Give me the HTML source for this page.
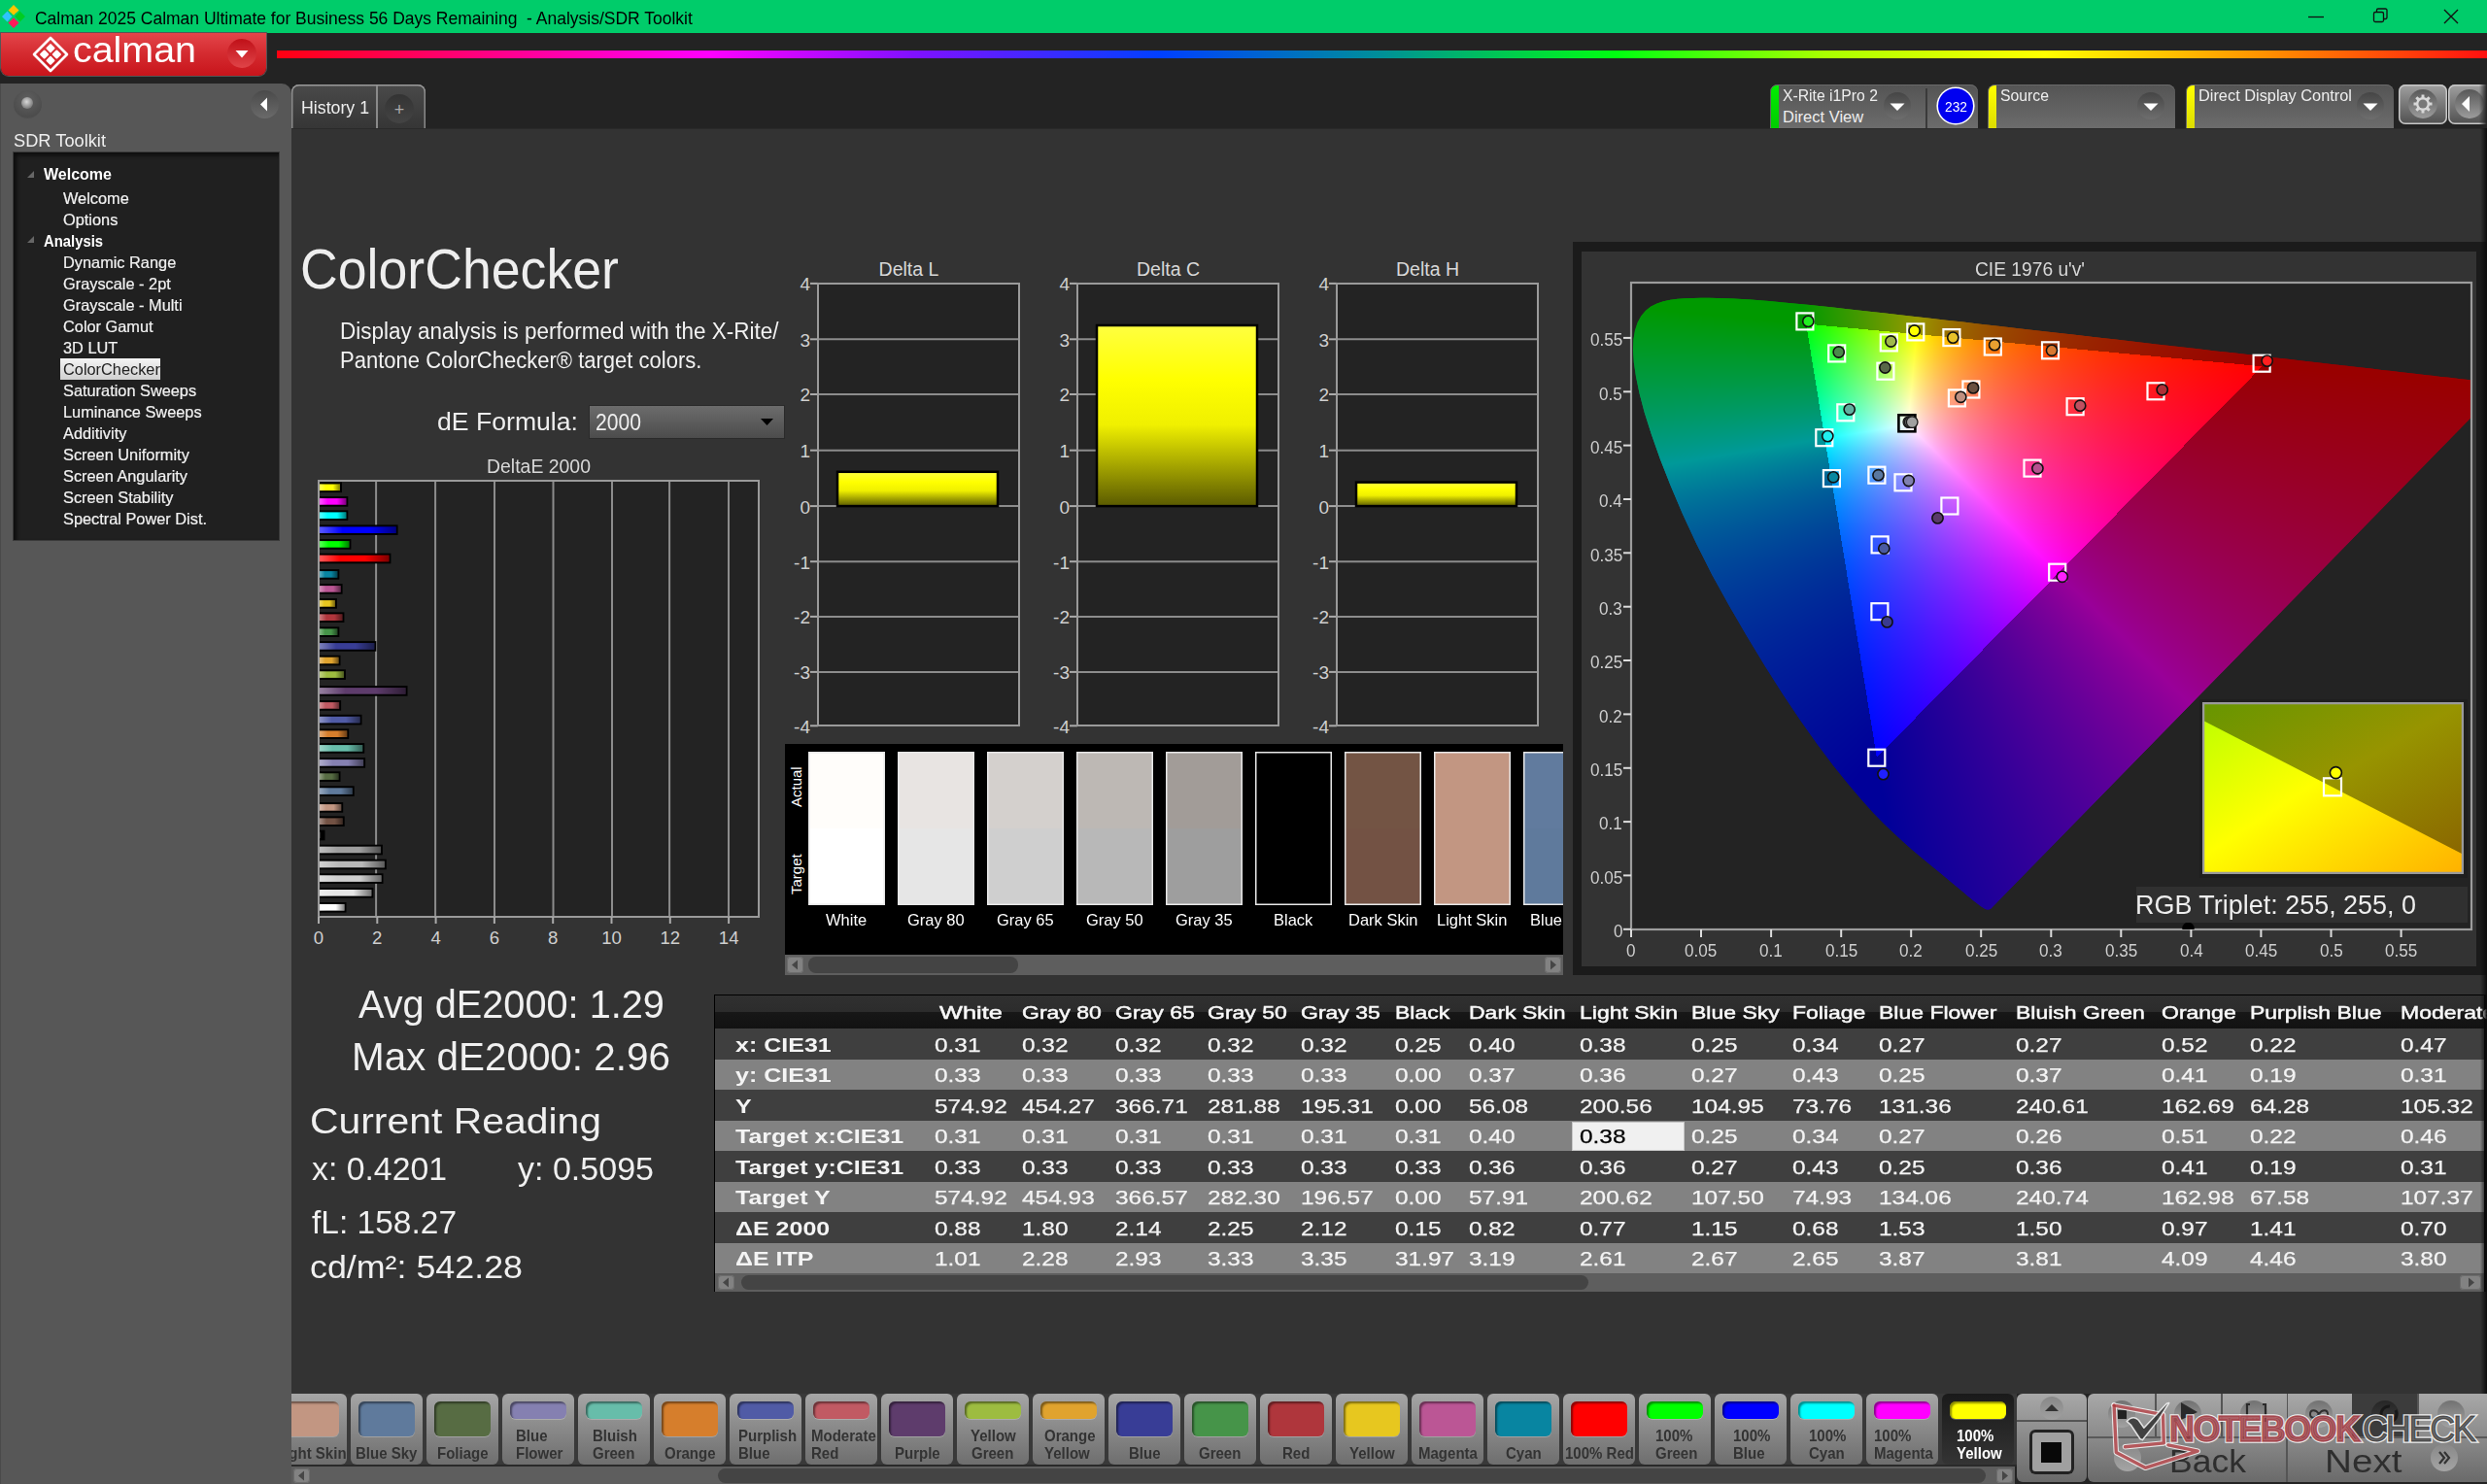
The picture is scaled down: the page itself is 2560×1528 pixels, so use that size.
<!DOCTYPE html><html><head><meta charset="utf-8"><style>
html,body{margin:0;padding:0;width:2560px;height:1528px;overflow:hidden;background:#232323}
body{position:relative;font-family:"Liberation Sans",sans-serif}
.t{position:absolute;white-space:nowrap;line-height:1;transform-origin:0 0}
</style></head><body>
<div style="position:absolute;left:0.0px;top:0.0px;width:2560.0px;height:34.0px;background:#00cc6a"></div>
<svg style="position:absolute;left:0;top:0" width="34" height="34">
<g transform="translate(14,17)">
<path d="M-5.5,-6.5 L0,-12 L5.5,-6.5 L3.5,-4.5 L0,-8 L-3.5,-4.5Z" fill="#ffc400"/>
<rect x="-2.6" y="-7.6" width="5.2" height="5.2" transform="rotate(45 0 -5)" fill="#ffc400"/>
<path d="M-6.5,-5.5 L-12,0 L-6.5,5.5 L-4.5,3.5 L-8,0 L-4.5,-3.5Z" fill="#2ec4ff"/>
<rect x="-7.6" y="-2.6" width="5.2" height="5.2" transform="rotate(45 -5 0)" fill="#2ec4ff"/>
<path d="M6.5,-5.5 L12,0 L6.5,5.5 L4.5,3.5 L8,0 L4.5,-3.5Z" fill="#00cc22"/>
<rect x="2.4" y="-2.6" width="5.2" height="5.2" transform="rotate(45 5 0)" fill="#00cc22"/>
<path d="M-5.5,6.5 L0,12 L5.5,6.5 L3.5,4.5 L0,8 L-3.5,4.5Z" fill="#ff1a5a"/>
<rect x="-2.6" y="2.4" width="5.2" height="5.2" transform="rotate(45 0 5)" fill="#ff1a5a"/>
</g></svg>
<div class="t" style="left:36.0px;top:9.6px;font-size:18.60px;color:#000;transform:scaleX(0.9400);white-space:pre;">Calman 2025 Calman Ultimate for Business 56 Days Remaining  - Analysis/SDR Toolkit</div>
<svg style="position:absolute;left:2360;top:0;left:2360px" width="200" height="34">
<line x1="16" y1="17.5" x2="32" y2="17.5" stroke="#111" stroke-width="1.3"/>
<rect x="83.5" y="12.5" width="10" height="10" rx="1.5" fill="none" stroke="#111" stroke-width="1.3"/>
<path d="M86.5,12.5 V10.5 a1.5,1.5 0 0 1 1.5,-1.5 H95.5 a1.5,1.5 0 0 1 1.5,1.5 V18 a1.5,1.5 0 0 1 -1.5,1.5 H93.5" fill="none" stroke="#111" stroke-width="1.3"/>
<path d="M156,10 L170,24 M170,10 L156,24" stroke="#111" stroke-width="1.4"/>
</svg>
<div style="position:absolute;left:0.0px;top:34.0px;width:2560.0px;height:52.0px;background:#232323"></div>
<div style="position:absolute;left:1.0px;top:34.0px;width:273.0px;height:44.0px;background:linear-gradient(#e3454a,#d42a2f 50%,#c8141b);border-radius:0 0 8px 8px;box-shadow:0 0 0 1px #555"></div>
<svg style="position:absolute;left:30px;top:36px" width="50" height="44">
<g transform="translate(22,20)" fill="none" stroke="#fff" stroke-width="2.6" stroke-linejoin="round">
<path d="M0,-17 L17,0 L0,17 L-17,0Z"/>
</g>
<g transform="translate(22,20) rotate(45)" fill="#fff">
<rect x="-8" y="-8" width="7" height="7" rx="1"/><rect x="1" y="-8" width="7" height="7" rx="1"/>
<rect x="-8" y="1" width="7" height="7" rx="1"/><rect x="1" y="1" width="7" height="7" rx="1"/>
</g></svg>
<div class="t" style="left:75.0px;top:33.5px;font-size:36.00px;color:#fff;transform:scaleX(1.0943);">calman</div>
<div style="position:absolute;left:234.0px;top:40.0px;width:30.0px;height:30.0px;border-radius:50%;background:linear-gradient(#c01018,#e04448)"></div>
<svg style="position:absolute;left:234px;top:40px" width="30" height="30"><path d="M8.5,12 L21.5,12 L15,19.5Z" fill="#fff"/></svg>
<div style="position:absolute;left:285.0px;top:52.0px;width:2275.0px;height:8.0px;background:linear-gradient(90deg,#ff0010 0%,#ff00ff 19.6%,#8010ff 28.8%,#0040ff 40%,#009098 50%,#00ff10 60.6%,#a8ff00 70%,#ffff00 80%,#ff9000 90%,#ff1010 100%)"></div>
<div style="position:absolute;left:0.0px;top:86.0px;width:300.0px;height:1442.0px;background:#575757;border-top-right-radius:10px;box-shadow:inset 1px 0 0 #4a4a4a"></div>
<div style="position:absolute;left:14.0px;top:93.0px;width:29.0px;height:29.0px;border-radius:50%;background:radial-gradient(circle at 50% 35%,#606060,#4c4c4c 70%,#555)"></div>
<div style="position:absolute;left:22.0px;top:100.0px;width:12.0px;height:12.0px;border-radius:50%;background:radial-gradient(circle at 45% 40%,#d8d8d8,#8a8a8a 60%,#5a5a5a)"></div>
<div style="position:absolute;left:258.0px;top:93.0px;width:29.0px;height:29.0px;border-radius:50%;background:linear-gradient(#4a4a4a,#6a6a6a)"></div>
<svg style="position:absolute;left:258px;top:93px" width="29" height="29"><path d="M10,14.5 L17,7.5 L17,21.5Z" fill="#fff"/></svg>
<div class="t" style="left:14.0px;top:134.9px;font-size:19.00px;color:#eee;transform:scaleX(0.9605);">SDR Toolkit</div>
<div style="position:absolute;left:14.0px;top:157.0px;width:273.0px;height:399.0px;background:#202020;box-shadow:inset 3px 3px 4px #0c0c0c,0 0 0 1px #3a3a3a"></div>
<svg style="position:absolute;left:26px;top:174px" width="12" height="100"><path d="M2,9 L9,9 L9,2Z" fill="#666"/><path d="M2,76 L9,76 L9,69Z" fill="#666"/></svg>
<div class="t" style="left:45.0px;top:171.0px;font-size:16.50px;color:#fff;font-weight:bold;transform:scaleX(0.9703);">Welcome</div>
<div class="t" style="left:64.5px;top:195.5px;font-size:16.50px;color:#f2f2f2;transform:scaleX(0.9900);-webkit-text-stroke:0.2px #f2f2f2;">Welcome</div>
<div class="t" style="left:64.5px;top:217.5px;font-size:16.50px;color:#f2f2f2;transform:scaleX(0.9900);-webkit-text-stroke:0.2px #f2f2f2;">Options</div>
<div class="t" style="left:45.0px;top:239.5px;font-size:16.50px;color:#fff;font-weight:bold;transform:scaleX(0.8988);">Analysis</div>
<div class="t" style="left:64.5px;top:261.5px;font-size:16.50px;color:#f2f2f2;transform:scaleX(0.9900);-webkit-text-stroke:0.2px #f2f2f2;">Dynamic Range</div>
<div class="t" style="left:64.5px;top:283.5px;font-size:16.50px;color:#f2f2f2;transform:scaleX(0.9900);-webkit-text-stroke:0.2px #f2f2f2;">Grayscale - 2pt</div>
<div class="t" style="left:64.5px;top:305.5px;font-size:16.50px;color:#f2f2f2;transform:scaleX(0.9900);-webkit-text-stroke:0.2px #f2f2f2;">Grayscale - Multi</div>
<div class="t" style="left:64.5px;top:327.5px;font-size:16.50px;color:#f2f2f2;transform:scaleX(0.9900);-webkit-text-stroke:0.2px #f2f2f2;">Color Gamut</div>
<div class="t" style="left:64.5px;top:349.5px;font-size:16.50px;color:#f2f2f2;transform:scaleX(0.9900);-webkit-text-stroke:0.2px #f2f2f2;">3D LUT</div>
<div style="position:absolute;left:62.0px;top:369.0px;width:103.0px;height:22.0px;background:linear-gradient(#f4f4f4,#d0d0d0)"></div>
<div class="t" style="left:64.5px;top:371.5px;font-size:16.50px;color:#222;transform:scaleX(0.9900);">ColorChecker</div>
<div class="t" style="left:64.5px;top:393.5px;font-size:16.50px;color:#f2f2f2;transform:scaleX(0.9900);-webkit-text-stroke:0.2px #f2f2f2;">Saturation Sweeps</div>
<div class="t" style="left:64.5px;top:415.5px;font-size:16.50px;color:#f2f2f2;transform:scaleX(0.9900);-webkit-text-stroke:0.2px #f2f2f2;">Luminance Sweeps</div>
<div class="t" style="left:64.5px;top:437.5px;font-size:16.50px;color:#f2f2f2;transform:scaleX(0.9900);-webkit-text-stroke:0.2px #f2f2f2;">Additivity</div>
<div class="t" style="left:64.5px;top:459.5px;font-size:16.50px;color:#f2f2f2;transform:scaleX(0.9900);-webkit-text-stroke:0.2px #f2f2f2;">Screen Uniformity</div>
<div class="t" style="left:64.5px;top:481.5px;font-size:16.50px;color:#f2f2f2;transform:scaleX(0.9900);-webkit-text-stroke:0.2px #f2f2f2;">Screen Angularity</div>
<div class="t" style="left:64.5px;top:503.5px;font-size:16.50px;color:#f2f2f2;transform:scaleX(0.9900);-webkit-text-stroke:0.2px #f2f2f2;">Screen Stability</div>
<div class="t" style="left:64.5px;top:525.5px;font-size:16.50px;color:#f2f2f2;transform:scaleX(0.9900);-webkit-text-stroke:0.2px #f2f2f2;">Spectral Power Dist.</div>
<div style="position:absolute;left:300.0px;top:87.0px;width:138.0px;height:46.0px;background:linear-gradient(#4a4a4a,#353535);border-radius:8px 8px 0 0;box-shadow:inset 0 1.5px 0 #9a9a9a,inset 1.5px 0 0 #8a8a8a,inset -1.5px 0 0 #8a8a8a"></div>
<div style="position:absolute;left:387.0px;top:88.0px;width:2.0px;height:44.0px;background:#8a8a8a"></div>
<div style="position:absolute;left:396.0px;top:97.0px;width:30.0px;height:30.0px;border-radius:50%;background:linear-gradient(#333,#444)"></div>
<div class="t" style="left:405.7px;top:103.8px;font-size:18.00px;color:#aaa;">+</div>
<div class="t" style="left:310.0px;top:102.3px;font-size:18.50px;color:#eee;transform:scaleX(0.9591);">History 1</div>
<div style="position:absolute;left:300.0px;top:132.0px;width:2260.0px;height:1303.0px;background:#333333"></div>
<div style="position:absolute;left:300.0px;top:132.0px;width:2260.0px;height:1.0px;background:#2a2a2a"></div>
<div style="position:absolute;left:1822.0px;top:87.0px;width:214.0px;height:45.0px;background:linear-gradient(#545454,#6c6c6c);border-radius:8px 8px 0 0;box-shadow:inset 0 1px 0 #6a6a6a"></div><div style="position:absolute;left:1823.0px;top:88.0px;width:8.0px;height:44.0px;background:linear-gradient(#00ee00,#00cc00);border-radius:6px 0 0 0"></div>
<div class="t" style="left:1835.0px;top:90.0px;font-size:16.50px;color:#eee;transform:scaleX(0.9542);">X-Rite i1Pro 2</div>
<div class="t" style="left:1835.0px;top:111.7px;font-size:16.50px;color:#eee;">Direct View</div>
<div style="position:absolute;left:1939.0px;top:95.0px;width:28.0px;height:28.0px;border-radius:50%;background:linear-gradient(#454545,#6e6e6e)"></div><svg style="position:absolute;left:1939px;top:95px" width="28" height="28"><path d="M6.5,11.5 L21.5,11.5 L14.0,19.0 Z" fill="#fff"/></svg>
<div style="position:absolute;left:1982.0px;top:91.0px;width:2.0px;height:41.0px;background:#3a3a3a"></div>
<div style="position:absolute;left:1995.0px;top:91.0px;width:36.0px;height:36.0px;border-radius:50%;background:#0000f0;box-shadow:0 0 0 1.6px #fff"></div>
<div class="t" style="left:2001.5px;top:102.3px;font-size:15.00px;color:#fff;transform:scaleX(0.9190);">232</div>
<div style="position:absolute;left:2046.0px;top:87.0px;width:193.0px;height:45.0px;background:linear-gradient(#545454,#6c6c6c);border-radius:8px 8px 0 0;box-shadow:inset 0 1px 0 #6a6a6a"></div><div style="position:absolute;left:2047.0px;top:88.0px;width:8.0px;height:44.0px;background:linear-gradient(#ffff00,#dddd00);border-radius:6px 0 0 0"></div>
<div class="t" style="left:2059.0px;top:90.0px;font-size:16.50px;color:#eee;transform:scaleX(0.9564);">Source</div>
<div style="position:absolute;left:2200.0px;top:95.0px;width:28.0px;height:28.0px;border-radius:50%;background:linear-gradient(#454545,#6e6e6e)"></div><svg style="position:absolute;left:2200px;top:95px" width="28" height="28"><path d="M6.5,11.5 L21.5,11.5 L14.0,19.0 Z" fill="#fff"/></svg>
<div style="position:absolute;left:2250.0px;top:87.0px;width:214.0px;height:45.0px;background:linear-gradient(#545454,#6c6c6c);border-radius:8px 8px 0 0;box-shadow:inset 0 1px 0 #6a6a6a"></div><div style="position:absolute;left:2251.0px;top:88.0px;width:8.0px;height:44.0px;background:linear-gradient(#ffff00,#dddd00);border-radius:6px 0 0 0"></div>
<div class="t" style="left:2263.0px;top:90.0px;font-size:16.50px;color:#eee;transform:scaleX(0.9903);">Direct Display Control</div>
<div style="position:absolute;left:2426.0px;top:95.0px;width:28.0px;height:28.0px;border-radius:50%;background:linear-gradient(#454545,#6e6e6e)"></div><svg style="position:absolute;left:2426px;top:95px" width="28" height="28"><path d="M6.5,11.5 L21.5,11.5 L14.0,19.0 Z" fill="#fff"/></svg>
<div style="position:absolute;left:2469.0px;top:87.0px;width:50.0px;height:41.0px;border-radius:7px;background:linear-gradient(#a0a0a0,#505050);box-shadow:inset 0 0 0 1.5px #c8c8c8"></div>
<div style="position:absolute;left:2479.0px;top:92.0px;width:30.0px;height:30.0px;border-radius:50%;background:linear-gradient(#585858,#9c9c9c)"></div>
<svg style="position:absolute;left:2469px;top:87px" width="50" height="41"><path d="M31.83,18.47 L34.49,18.57 L34.49,21.43 L31.83,21.53 L30.91,23.75 L32.73,25.70 L30.70,27.73 L28.75,25.91 L26.53,26.83 L26.43,29.49 L23.57,29.49 L23.47,26.83 L21.25,25.91 L19.30,27.73 L17.27,25.70 L19.09,23.75 L18.17,21.53 L15.51,21.43 L15.51,18.57 L18.17,18.47 L19.09,16.25 L17.27,14.30 L19.30,12.27 L21.25,14.09 L23.47,13.17 L23.57,10.51 L26.43,10.51 L26.53,13.17 L28.75,14.09 L30.70,12.27 L32.73,14.30 L30.91,16.25Z" fill="#d8d8d8"/><circle cx="25" cy="20" r="4.6" fill="#787878"/></svg>
<div style="position:absolute;left:2520.0px;top:87.0px;width:48.0px;height:41.0px;border-radius:7px;background:linear-gradient(#a0a0a0,#505050);box-shadow:inset 0 0 0 1.5px #c8c8c8"></div>
<div style="position:absolute;left:2527.0px;top:92.0px;width:30.0px;height:30.0px;border-radius:50%;background:linear-gradient(#585858,#9c9c9c)"></div>
<svg style="position:absolute;left:2520px;top:87px" width="40" height="41"><path d="M14,20 L22,12 L22,28Z" fill="#fff"/></svg>
<div style="position:absolute;left:2552.0px;top:87.0px;width:8.0px;height:41.0px;background:linear-gradient(90deg,rgba(0,0,0,0),#222)"></div>
<div class="t" style="left:309.0px;top:250.0px;font-size:56.70px;color:#eee;transform:scaleX(0.9463);">ColorChecker</div>
<div class="t" style="left:350.0px;top:330.1px;font-size:23.30px;color:#f2f2f2;transform:scaleX(0.9658);">Display analysis is performed with the X-Rite/</div>
<div class="t" style="left:350.0px;top:359.9px;font-size:23.30px;color:#f2f2f2;transform:scaleX(0.9453);">Pantone ColorChecker® target colors.</div>
<div class="t" style="left:450.0px;top:421.2px;font-size:26.30px;color:#eee;transform:scaleX(1.0123);">dE Formula:</div>
<div style="position:absolute;left:607.0px;top:418.0px;width:200.0px;height:33.0px;background:linear-gradient(#6c6c6c,#4c4c4c);box-shadow:0 0 0 1px #2a2a2a"></div>
<div class="t" style="left:613.0px;top:423.2px;font-size:24.00px;color:#eee;transform:scaleX(0.8803);">2000</div>
<svg style="position:absolute;left:780px;top:428px" width="20" height="14"><path d="M3,3 L16,3 L9.5,10Z" fill="#000"/></svg>
<div class="t" style="left:500.5px;top:470.3px;font-size:20.00px;color:#d8d8d8;transform:scaleX(0.9720);">DeltaE 2000</div>
<svg style="position:absolute;left:326px;top:493px" width="457" height="463"><defs><linearGradient id="bg0" x1="0" x2="1" y1="0" y2="0"><stop offset="0" stop-color="#ffffff" stop-opacity="1"/><stop offset="1" stop-color="#ffffff"/></linearGradient><linearGradient id="bg1" x1="0" x2="1" y1="0" y2="0"><stop offset="0" stop-color="#e6e6e6" stop-opacity="1"/><stop offset="1" stop-color="#e6e6e6"/></linearGradient><linearGradient id="bg2" x1="0" x2="1" y1="0" y2="0"><stop offset="0" stop-color="#cfcfcf" stop-opacity="1"/><stop offset="1" stop-color="#cfcfcf"/></linearGradient><linearGradient id="bg3" x1="0" x2="1" y1="0" y2="0"><stop offset="0" stop-color="#b8b8b8" stop-opacity="1"/><stop offset="1" stop-color="#b8b8b8"/></linearGradient><linearGradient id="bg4" x1="0" x2="1" y1="0" y2="0"><stop offset="0" stop-color="#9e9e9e" stop-opacity="1"/><stop offset="1" stop-color="#9e9e9e"/></linearGradient><linearGradient id="bg5" x1="0" x2="1" y1="0" y2="0"><stop offset="0" stop-color="#000000" stop-opacity="1"/><stop offset="1" stop-color="#000000"/></linearGradient><linearGradient id="bg6" x1="0" x2="1" y1="0" y2="0"><stop offset="0" stop-color="#735244" stop-opacity="1"/><stop offset="1" stop-color="#735244"/></linearGradient><linearGradient id="bg7" x1="0" x2="1" y1="0" y2="0"><stop offset="0" stop-color="#c29682" stop-opacity="1"/><stop offset="1" stop-color="#c29682"/></linearGradient><linearGradient id="bg8" x1="0" x2="1" y1="0" y2="0"><stop offset="0" stop-color="#5f7a9c" stop-opacity="1"/><stop offset="1" stop-color="#5f7a9c"/></linearGradient><linearGradient id="bg9" x1="0" x2="1" y1="0" y2="0"><stop offset="0" stop-color="#576c43" stop-opacity="1"/><stop offset="1" stop-color="#576c43"/></linearGradient><linearGradient id="bg10" x1="0" x2="1" y1="0" y2="0"><stop offset="0" stop-color="#8580b1" stop-opacity="1"/><stop offset="1" stop-color="#8580b1"/></linearGradient><linearGradient id="bg11" x1="0" x2="1" y1="0" y2="0"><stop offset="0" stop-color="#67bdaa" stop-opacity="1"/><stop offset="1" stop-color="#67bdaa"/></linearGradient><linearGradient id="bg12" x1="0" x2="1" y1="0" y2="0"><stop offset="0" stop-color="#d67e2c" stop-opacity="1"/><stop offset="1" stop-color="#d67e2c"/></linearGradient><linearGradient id="bg13" x1="0" x2="1" y1="0" y2="0"><stop offset="0" stop-color="#505ba6" stop-opacity="1"/><stop offset="1" stop-color="#505ba6"/></linearGradient><linearGradient id="bg14" x1="0" x2="1" y1="0" y2="0"><stop offset="0" stop-color="#c15a63" stop-opacity="1"/><stop offset="1" stop-color="#c15a63"/></linearGradient><linearGradient id="bg15" x1="0" x2="1" y1="0" y2="0"><stop offset="0" stop-color="#5e3c6c" stop-opacity="1"/><stop offset="1" stop-color="#5e3c6c"/></linearGradient><linearGradient id="bg16" x1="0" x2="1" y1="0" y2="0"><stop offset="0" stop-color="#9dbc40" stop-opacity="1"/><stop offset="1" stop-color="#9dbc40"/></linearGradient><linearGradient id="bg17" x1="0" x2="1" y1="0" y2="0"><stop offset="0" stop-color="#e0a32e" stop-opacity="1"/><stop offset="1" stop-color="#e0a32e"/></linearGradient><linearGradient id="bg18" x1="0" x2="1" y1="0" y2="0"><stop offset="0" stop-color="#383d96" stop-opacity="1"/><stop offset="1" stop-color="#383d96"/></linearGradient><linearGradient id="bg19" x1="0" x2="1" y1="0" y2="0"><stop offset="0" stop-color="#469449" stop-opacity="1"/><stop offset="1" stop-color="#469449"/></linearGradient><linearGradient id="bg20" x1="0" x2="1" y1="0" y2="0"><stop offset="0" stop-color="#af363c" stop-opacity="1"/><stop offset="1" stop-color="#af363c"/></linearGradient><linearGradient id="bg21" x1="0" x2="1" y1="0" y2="0"><stop offset="0" stop-color="#e7c71f" stop-opacity="1"/><stop offset="1" stop-color="#e7c71f"/></linearGradient><linearGradient id="bg22" x1="0" x2="1" y1="0" y2="0"><stop offset="0" stop-color="#bb5695" stop-opacity="1"/><stop offset="1" stop-color="#bb5695"/></linearGradient><linearGradient id="bg23" x1="0" x2="1" y1="0" y2="0"><stop offset="0" stop-color="#0885a1" stop-opacity="1"/><stop offset="1" stop-color="#0885a1"/></linearGradient><linearGradient id="bg24" x1="0" x2="1" y1="0" y2="0"><stop offset="0" stop-color="#ff0000" stop-opacity="1"/><stop offset="1" stop-color="#ff0000"/></linearGradient><linearGradient id="bg25" x1="0" x2="1" y1="0" y2="0"><stop offset="0" stop-color="#00ff00" stop-opacity="1"/><stop offset="1" stop-color="#00ff00"/></linearGradient><linearGradient id="bg26" x1="0" x2="1" y1="0" y2="0"><stop offset="0" stop-color="#0000ff" stop-opacity="1"/><stop offset="1" stop-color="#0000ff"/></linearGradient><linearGradient id="bg27" x1="0" x2="1" y1="0" y2="0"><stop offset="0" stop-color="#00ffff" stop-opacity="1"/><stop offset="1" stop-color="#00ffff"/></linearGradient><linearGradient id="bg28" x1="0" x2="1" y1="0" y2="0"><stop offset="0" stop-color="#ff00ff" stop-opacity="1"/><stop offset="1" stop-color="#ff00ff"/></linearGradient><linearGradient id="bg29" x1="0" x2="1" y1="0" y2="0"><stop offset="0" stop-color="#ffff00" stop-opacity="1"/><stop offset="1" stop-color="#ffff00"/></linearGradient><linearGradient id="sh" x1="0" x2="1"><stop offset="0" stop-color="#fff" stop-opacity="0.35"/><stop offset="0.3" stop-color="#fff" stop-opacity="0"/><stop offset="0.65" stop-color="#000" stop-opacity="0"/><stop offset="1" stop-color="#000" stop-opacity="0.5"/></linearGradient></defs><rect x="2" y="2" width="453" height="449" fill="#232323"/><line x1="61.1" y1="2" x2="61.1" y2="451" stroke="#8c8c8c" stroke-width="2"/><line x1="122.1" y1="2" x2="122.1" y2="451" stroke="#8c8c8c" stroke-width="2"/><line x1="183.0" y1="2" x2="183.0" y2="451" stroke="#8c8c8c" stroke-width="2"/><line x1="243.5" y1="2" x2="243.5" y2="451" stroke="#8c8c8c" stroke-width="2"/><line x1="304.0" y1="2" x2="304.0" y2="451" stroke="#8c8c8c" stroke-width="2"/><line x1="363.1" y1="2" x2="363.1" y2="451" stroke="#8c8c8c" stroke-width="2"/><line x1="424.0" y1="2" x2="424.0" y2="451" stroke="#8c8c8c" stroke-width="2"/><rect x="2" y="2" width="453" height="449" fill="none" stroke="#9a9a9a" stroke-width="2"/><line x1="2.0" y1="451" x2="2.0" y2="458" stroke="#aaa" stroke-width="2"/><line x1="62.3" y1="451" x2="62.3" y2="458" stroke="#aaa" stroke-width="2"/><line x1="122.6" y1="451" x2="122.6" y2="458" stroke="#aaa" stroke-width="2"/><line x1="182.9" y1="451" x2="182.9" y2="458" stroke="#aaa" stroke-width="2"/><line x1="243.2" y1="451" x2="243.2" y2="458" stroke="#aaa" stroke-width="2"/><line x1="303.5" y1="451" x2="303.5" y2="458" stroke="#aaa" stroke-width="2"/><line x1="363.8" y1="451" x2="363.8" y2="458" stroke="#aaa" stroke-width="2"/><line x1="424.1" y1="451" x2="424.1" y2="458" stroke="#aaa" stroke-width="2"/><rect x="2" y="4.5" width="23.0" height="8.6" fill="#ffff00" stroke="#000" stroke-width="2"/><rect x="3" y="5.5" width="21.0" height="6.6" fill="url(#sh)"/><rect x="2" y="19.1" width="29.3" height="8.6" fill="#ff00ff" stroke="#000" stroke-width="2"/><rect x="3" y="20.1" width="27.3" height="6.6" fill="url(#sh)"/><rect x="2" y="33.4" width="29.3" height="8.6" fill="#00ffff" stroke="#000" stroke-width="2"/><rect x="3" y="34.4" width="27.3" height="6.6" fill="url(#sh)"/><rect x="2" y="48.4" width="80.6" height="8.6" fill="#0000ff" stroke="#000" stroke-width="2"/><rect x="3" y="49.4" width="78.6" height="6.6" fill="url(#sh)"/><rect x="2" y="63.1" width="32.4" height="8.6" fill="#00ff00" stroke="#000" stroke-width="2"/><rect x="3" y="64.1" width="30.4" height="6.6" fill="url(#sh)"/><rect x="2" y="77.7" width="73.4" height="8.6" fill="#ff0000" stroke="#000" stroke-width="2"/><rect x="3" y="78.7" width="71.4" height="6.6" fill="url(#sh)"/><rect x="2" y="94.1" width="20.3" height="8.6" fill="#0885a1" stroke="#000" stroke-width="2"/><rect x="3" y="95.1" width="18.3" height="6.6" fill="url(#sh)"/><rect x="2" y="109.1" width="23.6" height="8.6" fill="#bb5695" stroke="#000" stroke-width="2"/><rect x="3" y="110.1" width="21.6" height="6.6" fill="url(#sh)"/><rect x="2" y="124.1" width="17.9" height="8.6" fill="#e7c71f" stroke="#000" stroke-width="2"/><rect x="3" y="125.1" width="15.9" height="6.6" fill="url(#sh)"/><rect x="2" y="138.4" width="25.4" height="8.6" fill="#af363c" stroke="#000" stroke-width="2"/><rect x="3" y="139.4" width="23.4" height="6.6" fill="url(#sh)"/><rect x="2" y="153.4" width="20.3" height="8.6" fill="#469449" stroke="#000" stroke-width="2"/><rect x="3" y="154.4" width="18.3" height="6.6" fill="url(#sh)"/><rect x="2" y="168.1" width="58.3" height="8.6" fill="#383d96" stroke="#000" stroke-width="2"/><rect x="3" y="169.1" width="56.3" height="6.6" fill="url(#sh)"/><rect x="2" y="182.7" width="21.5" height="8.6" fill="#e0a32e" stroke="#000" stroke-width="2"/><rect x="3" y="183.7" width="19.5" height="6.6" fill="url(#sh)"/><rect x="2" y="197.3" width="26.9" height="8.6" fill="#9dbc40" stroke="#000" stroke-width="2"/><rect x="3" y="198.3" width="24.9" height="6.6" fill="url(#sh)"/><rect x="2" y="214.1" width="90.5" height="8.6" fill="#5e3c6c" stroke="#000" stroke-width="2"/><rect x="3" y="215.1" width="88.5" height="6.6" fill="url(#sh)"/><rect x="2" y="229.1" width="22.1" height="8.6" fill="#c15a63" stroke="#000" stroke-width="2"/><rect x="3" y="230.1" width="20.1" height="6.6" fill="url(#sh)"/><rect x="2" y="243.8" width="43.5" height="8.6" fill="#505ba6" stroke="#000" stroke-width="2"/><rect x="3" y="244.8" width="41.5" height="6.6" fill="url(#sh)"/><rect x="2" y="258.4" width="30.2" height="8.6" fill="#d67e2c" stroke="#000" stroke-width="2"/><rect x="3" y="259.4" width="28.2" height="6.6" fill="url(#sh)"/><rect x="2" y="273.1" width="46.2" height="8.6" fill="#67bdaa" stroke="#000" stroke-width="2"/><rect x="3" y="274.1" width="44.2" height="6.6" fill="url(#sh)"/><rect x="2" y="288.1" width="47.1" height="8.6" fill="#8580b1" stroke="#000" stroke-width="2"/><rect x="3" y="289.1" width="45.1" height="6.6" fill="url(#sh)"/><rect x="2" y="302.3" width="21.5" height="8.6" fill="#576c43" stroke="#000" stroke-width="2"/><rect x="3" y="303.3" width="19.5" height="6.6" fill="url(#sh)"/><rect x="2" y="317.3" width="35.7" height="8.6" fill="#5f7a9c" stroke="#000" stroke-width="2"/><rect x="3" y="318.3" width="33.7" height="6.6" fill="url(#sh)"/><rect x="2" y="334.1" width="24.2" height="8.6" fill="#c29682" stroke="#000" stroke-width="2"/><rect x="3" y="335.1" width="22.2" height="6.6" fill="url(#sh)"/><rect x="2" y="348.4" width="25.7" height="8.6" fill="#735244" stroke="#000" stroke-width="2"/><rect x="3" y="349.4" width="23.7" height="6.6" fill="url(#sh)"/><rect x="2" y="362.7" width="5.5" height="8.6" fill="#000000" stroke="#000" stroke-width="2"/><rect x="3" y="363.7" width="3.5" height="6.6" fill="url(#sh)"/><rect x="2" y="377.7" width="64.9" height="8.6" fill="#9e9e9e" stroke="#000" stroke-width="2"/><rect x="3" y="378.7" width="62.9" height="6.6" fill="url(#sh)"/><rect x="2" y="392.7" width="68.8" height="8.6" fill="#b8b8b8" stroke="#000" stroke-width="2"/><rect x="3" y="393.7" width="66.8" height="6.6" fill="url(#sh)"/><rect x="2" y="407.3" width="65.5" height="8.6" fill="#cfcfcf" stroke="#000" stroke-width="2"/><rect x="3" y="408.3" width="63.5" height="6.6" fill="url(#sh)"/><rect x="2" y="422.0" width="55.3" height="8.6" fill="#e6e6e6" stroke="#000" stroke-width="2"/><rect x="3" y="423.0" width="53.3" height="6.6" fill="url(#sh)"/><rect x="2" y="437.0" width="27.5" height="8.6" fill="#ffffff" stroke="#000" stroke-width="2"/><rect x="3" y="438.0" width="25.5" height="6.6" fill="url(#sh)"/><line x1="2" y1="2" x2="2" y2="451" stroke="#9a9a9a" stroke-width="2"/></svg>
<div class="t" style="left:322.8px;top:956.8px;font-size:18.60px;color:#cfcfcf;">0</div>
<div class="t" style="left:383.1px;top:956.8px;font-size:18.60px;color:#cfcfcf;">2</div>
<div class="t" style="left:443.4px;top:956.8px;font-size:18.60px;color:#cfcfcf;">4</div>
<div class="t" style="left:503.7px;top:956.8px;font-size:18.60px;color:#cfcfcf;">6</div>
<div class="t" style="left:564.0px;top:956.8px;font-size:18.60px;color:#cfcfcf;">8</div>
<div class="t" style="left:619.2px;top:956.8px;font-size:18.60px;color:#cfcfcf;">10</div>
<div class="t" style="left:679.5px;top:956.8px;font-size:18.60px;color:#cfcfcf;">12</div>
<div class="t" style="left:739.8px;top:956.8px;font-size:18.60px;color:#cfcfcf;">14</div>
<div class="t" style="left:904.6px;top:267.9px;font-size:19.50px;color:#d8d8d8;">Delta L</div>
<svg style="position:absolute;left:832px;top:290px" width="221" height="461"><defs><linearGradient id="yg842" x1="0" x2="0" y1="0" y2="1"><stop offset="0" stop-color="#ffff40"/><stop offset="0.3" stop-color="#ffff00"/><stop offset="0.55" stop-color="#f0f000"/><stop offset="1" stop-color="#5a5a00"/></linearGradient></defs><rect x="10" y="2" width="207" height="455" fill="#232323"/><line x1="10" y1="59.3" x2="217" y2="59.3" stroke="#8c8c8c" stroke-width="2"/><line x1="10" y1="116.0" x2="217" y2="116.0" stroke="#8c8c8c" stroke-width="2"/><line x1="10" y1="173.7" x2="217" y2="173.7" stroke="#8c8c8c" stroke-width="2"/><line x1="10" y1="231.1" x2="217" y2="231.1" stroke="#8c8c8c" stroke-width="2"/><line x1="10" y1="288.2" x2="217" y2="288.2" stroke="#8c8c8c" stroke-width="2"/><line x1="10" y1="344.9" x2="217" y2="344.9" stroke="#8c8c8c" stroke-width="2"/><line x1="10" y1="401.9" x2="217" y2="401.9" stroke="#8c8c8c" stroke-width="2"/><line x1="2" y1="1.9" x2="10" y2="1.9" stroke="#aaa" stroke-width="2"/><line x1="2" y1="59.3" x2="10" y2="59.3" stroke="#aaa" stroke-width="2"/><line x1="2" y1="116.0" x2="10" y2="116.0" stroke="#aaa" stroke-width="2"/><line x1="2" y1="173.7" x2="10" y2="173.7" stroke="#aaa" stroke-width="2"/><line x1="2" y1="231.1" x2="10" y2="231.1" stroke="#aaa" stroke-width="2"/><line x1="2" y1="288.2" x2="10" y2="288.2" stroke="#aaa" stroke-width="2"/><line x1="2" y1="344.9" x2="10" y2="344.9" stroke="#aaa" stroke-width="2"/><line x1="2" y1="401.9" x2="10" y2="401.9" stroke="#aaa" stroke-width="2"/><line x1="2" y1="457.3" x2="10" y2="457.3" stroke="#aaa" stroke-width="2"/><rect x="10" y="2" width="207" height="455" fill="none" stroke="#9a9a9a" stroke-width="2"/><rect x="30" y="195.8" width="165" height="35.3" fill="url(#yg842)" stroke="#000" stroke-width="2.5"/></svg>
<div class="t" style="left:823.4px;top:283.3px;font-size:19.00px;color:#cfcfcf;">4</div>
<div class="t" style="left:823.4px;top:340.7px;font-size:19.00px;color:#cfcfcf;">3</div>
<div class="t" style="left:823.4px;top:397.4px;font-size:19.00px;color:#cfcfcf;">2</div>
<div class="t" style="left:823.4px;top:455.1px;font-size:19.00px;color:#cfcfcf;">1</div>
<div class="t" style="left:823.4px;top:512.5px;font-size:19.00px;color:#cfcfcf;">0</div>
<div class="t" style="left:817.1px;top:569.6px;font-size:19.00px;color:#cfcfcf;">-1</div>
<div class="t" style="left:817.1px;top:626.3px;font-size:19.00px;color:#cfcfcf;">-2</div>
<div class="t" style="left:817.1px;top:683.3px;font-size:19.00px;color:#cfcfcf;">-3</div>
<div class="t" style="left:817.1px;top:738.7px;font-size:19.00px;color:#cfcfcf;">-4</div>
<div class="t" style="left:1170.0px;top:267.9px;font-size:19.50px;color:#d8d8d8;">Delta C</div>
<svg style="position:absolute;left:1099px;top:290px" width="221" height="461"><defs><linearGradient id="yg1109" x1="0" x2="0" y1="0" y2="1"><stop offset="0" stop-color="#ffff40"/><stop offset="0.3" stop-color="#ffff00"/><stop offset="0.55" stop-color="#f0f000"/><stop offset="1" stop-color="#5a5a00"/></linearGradient></defs><rect x="10" y="2" width="207" height="455" fill="#232323"/><line x1="10" y1="59.3" x2="217" y2="59.3" stroke="#8c8c8c" stroke-width="2"/><line x1="10" y1="116.0" x2="217" y2="116.0" stroke="#8c8c8c" stroke-width="2"/><line x1="10" y1="173.7" x2="217" y2="173.7" stroke="#8c8c8c" stroke-width="2"/><line x1="10" y1="231.1" x2="217" y2="231.1" stroke="#8c8c8c" stroke-width="2"/><line x1="10" y1="288.2" x2="217" y2="288.2" stroke="#8c8c8c" stroke-width="2"/><line x1="10" y1="344.9" x2="217" y2="344.9" stroke="#8c8c8c" stroke-width="2"/><line x1="10" y1="401.9" x2="217" y2="401.9" stroke="#8c8c8c" stroke-width="2"/><line x1="2" y1="1.9" x2="10" y2="1.9" stroke="#aaa" stroke-width="2"/><line x1="2" y1="59.3" x2="10" y2="59.3" stroke="#aaa" stroke-width="2"/><line x1="2" y1="116.0" x2="10" y2="116.0" stroke="#aaa" stroke-width="2"/><line x1="2" y1="173.7" x2="10" y2="173.7" stroke="#aaa" stroke-width="2"/><line x1="2" y1="231.1" x2="10" y2="231.1" stroke="#aaa" stroke-width="2"/><line x1="2" y1="288.2" x2="10" y2="288.2" stroke="#aaa" stroke-width="2"/><line x1="2" y1="344.9" x2="10" y2="344.9" stroke="#aaa" stroke-width="2"/><line x1="2" y1="401.9" x2="10" y2="401.9" stroke="#aaa" stroke-width="2"/><line x1="2" y1="457.3" x2="10" y2="457.3" stroke="#aaa" stroke-width="2"/><rect x="10" y="2" width="207" height="455" fill="none" stroke="#9a9a9a" stroke-width="2"/><rect x="30" y="45.0" width="165" height="186.1" fill="url(#yg1109)" stroke="#000" stroke-width="2.5"/></svg>
<div class="t" style="left:1090.4px;top:283.3px;font-size:19.00px;color:#cfcfcf;">4</div>
<div class="t" style="left:1090.4px;top:340.7px;font-size:19.00px;color:#cfcfcf;">3</div>
<div class="t" style="left:1090.4px;top:397.4px;font-size:19.00px;color:#cfcfcf;">2</div>
<div class="t" style="left:1090.4px;top:455.1px;font-size:19.00px;color:#cfcfcf;">1</div>
<div class="t" style="left:1090.4px;top:512.5px;font-size:19.00px;color:#cfcfcf;">0</div>
<div class="t" style="left:1084.1px;top:569.6px;font-size:19.00px;color:#cfcfcf;">-1</div>
<div class="t" style="left:1084.1px;top:626.3px;font-size:19.00px;color:#cfcfcf;">-2</div>
<div class="t" style="left:1084.1px;top:683.3px;font-size:19.00px;color:#cfcfcf;">-3</div>
<div class="t" style="left:1084.1px;top:738.7px;font-size:19.00px;color:#cfcfcf;">-4</div>
<div class="t" style="left:1437.0px;top:267.9px;font-size:19.50px;color:#d8d8d8;">Delta H</div>
<svg style="position:absolute;left:1366px;top:290px" width="221" height="461"><defs><linearGradient id="yg1376" x1="0" x2="0" y1="0" y2="1"><stop offset="0" stop-color="#ffff40"/><stop offset="0.3" stop-color="#ffff00"/><stop offset="0.55" stop-color="#f0f000"/><stop offset="1" stop-color="#5a5a00"/></linearGradient></defs><rect x="10" y="2" width="207" height="455" fill="#232323"/><line x1="10" y1="59.3" x2="217" y2="59.3" stroke="#8c8c8c" stroke-width="2"/><line x1="10" y1="116.0" x2="217" y2="116.0" stroke="#8c8c8c" stroke-width="2"/><line x1="10" y1="173.7" x2="217" y2="173.7" stroke="#8c8c8c" stroke-width="2"/><line x1="10" y1="231.1" x2="217" y2="231.1" stroke="#8c8c8c" stroke-width="2"/><line x1="10" y1="288.2" x2="217" y2="288.2" stroke="#8c8c8c" stroke-width="2"/><line x1="10" y1="344.9" x2="217" y2="344.9" stroke="#8c8c8c" stroke-width="2"/><line x1="10" y1="401.9" x2="217" y2="401.9" stroke="#8c8c8c" stroke-width="2"/><line x1="2" y1="1.9" x2="10" y2="1.9" stroke="#aaa" stroke-width="2"/><line x1="2" y1="59.3" x2="10" y2="59.3" stroke="#aaa" stroke-width="2"/><line x1="2" y1="116.0" x2="10" y2="116.0" stroke="#aaa" stroke-width="2"/><line x1="2" y1="173.7" x2="10" y2="173.7" stroke="#aaa" stroke-width="2"/><line x1="2" y1="231.1" x2="10" y2="231.1" stroke="#aaa" stroke-width="2"/><line x1="2" y1="288.2" x2="10" y2="288.2" stroke="#aaa" stroke-width="2"/><line x1="2" y1="344.9" x2="10" y2="344.9" stroke="#aaa" stroke-width="2"/><line x1="2" y1="401.9" x2="10" y2="401.9" stroke="#aaa" stroke-width="2"/><line x1="2" y1="457.3" x2="10" y2="457.3" stroke="#aaa" stroke-width="2"/><rect x="10" y="2" width="207" height="455" fill="none" stroke="#9a9a9a" stroke-width="2"/><rect x="30" y="206.6" width="165" height="24.5" fill="url(#yg1376)" stroke="#000" stroke-width="2.5"/></svg>
<div class="t" style="left:1357.4px;top:283.3px;font-size:19.00px;color:#cfcfcf;">4</div>
<div class="t" style="left:1357.4px;top:340.7px;font-size:19.00px;color:#cfcfcf;">3</div>
<div class="t" style="left:1357.4px;top:397.4px;font-size:19.00px;color:#cfcfcf;">2</div>
<div class="t" style="left:1357.4px;top:455.1px;font-size:19.00px;color:#cfcfcf;">1</div>
<div class="t" style="left:1357.4px;top:512.5px;font-size:19.00px;color:#cfcfcf;">0</div>
<div class="t" style="left:1351.1px;top:569.6px;font-size:19.00px;color:#cfcfcf;">-1</div>
<div class="t" style="left:1351.1px;top:626.3px;font-size:19.00px;color:#cfcfcf;">-2</div>
<div class="t" style="left:1351.1px;top:683.3px;font-size:19.00px;color:#cfcfcf;">-3</div>
<div class="t" style="left:1351.1px;top:738.7px;font-size:19.00px;color:#cfcfcf;">-4</div>
<div style="position:absolute;left:808.0px;top:766.0px;width:801.0px;height:238.0px;background:#000"></div>
<div style="position:absolute;left:808px;top:766px;width:801px;height:217px;overflow:hidden"><div style="position:absolute;left:24.0px;top:8.0px;width:79.0px;height:158.0px;background:linear-gradient(#fffdfa 50%,#ffffff 50%);box-shadow:inset 0 0 0 1.5px #e8e8e8"></div><div class="t" style="left:42.4px;top:172.6px;font-size:17.00px;color:#fff;transform:scaleX(0.9700);">White</div><div style="position:absolute;left:116.0px;top:8.0px;width:79.0px;height:158.0px;background:linear-gradient(#e8e4e2 50%,#e6e6e6 50%);box-shadow:inset 0 0 0 1.5px #e8e8e8"></div><div class="t" style="left:126.2px;top:172.6px;font-size:17.00px;color:#fff;transform:scaleX(0.9700);">Gray 80</div><div style="position:absolute;left:208.0px;top:8.0px;width:79.0px;height:158.0px;background:linear-gradient(#d4d0cd 50%,#cfcfcf 50%);box-shadow:inset 0 0 0 1.5px #e8e8e8"></div><div class="t" style="left:218.2px;top:172.6px;font-size:17.00px;color:#fff;transform:scaleX(0.9700);">Gray 65</div><div style="position:absolute;left:300.0px;top:8.0px;width:79.0px;height:158.0px;background:linear-gradient(#bdb8b4 50%,#b8b8b8 50%);box-shadow:inset 0 0 0 1.5px #e8e8e8"></div><div class="t" style="left:310.2px;top:172.6px;font-size:17.00px;color:#fff;transform:scaleX(0.9700);">Gray 50</div><div style="position:absolute;left:392.0px;top:8.0px;width:79.0px;height:158.0px;background:linear-gradient(#a29c98 50%,#9e9e9e 50%);box-shadow:inset 0 0 0 1.5px #e8e8e8"></div><div class="t" style="left:402.2px;top:172.6px;font-size:17.00px;color:#fff;transform:scaleX(0.9700);">Gray 35</div><div style="position:absolute;left:484.0px;top:8.0px;width:79.0px;height:158.0px;background:linear-gradient(#000000 50%,#000000 50%);box-shadow:inset 0 0 0 1.5px #e8e8e8"></div><div class="t" style="left:503.3px;top:172.6px;font-size:17.00px;color:#fff;transform:scaleX(0.9700);">Black</div><div style="position:absolute;left:576.0px;top:8.0px;width:79.0px;height:158.0px;background:linear-gradient(#735444 50%,#735244 50%);box-shadow:inset 0 0 0 1.5px #e8e8e8"></div><div class="t" style="left:579.8px;top:172.6px;font-size:17.00px;color:#fff;transform:scaleX(0.9700);">Dark Skin</div><div style="position:absolute;left:668.0px;top:8.0px;width:79.0px;height:158.0px;background:linear-gradient(#c29682 50%,#c29682 50%);box-shadow:inset 0 0 0 1.5px #e8e8e8"></div><div class="t" style="left:671.3px;top:172.6px;font-size:17.00px;color:#fff;transform:scaleX(0.9700);">Light Skin</div><div style="position:absolute;left:760.0px;top:8.0px;width:79.0px;height:158.0px;background:linear-gradient(#617b9e 50%,#5f7a9c 50%);box-shadow:inset 0 0 0 1.5px #e8e8e8"></div><div class="t" style="left:767.0px;top:172.6px;font-size:17.00px;color:#fff;transform:scaleX(0.9700);">Blue Sky</div></div>
<div class="t" style="left:812.0px;top:831.0px;font-size:15px;color:#fff;transform:rotate(-90deg);transform-origin:0 0">Actual</div>
<div class="t" style="left:812.0px;top:921.0px;font-size:15px;color:#fff;transform:rotate(-90deg);transform-origin:0 0">Target</div>
<div style="position:absolute;left:808.0px;top:983.0px;width:801.0px;height:21.0px;background:#5e5e5e"></div>
<div style="position:absolute;left:810.0px;top:985.0px;width:17.0px;height:17.0px;background:#828282;border-radius:4px;box-shadow:inset 0 0 0 1px #6c6c6c"></div>
<svg style="position:absolute;left:810px;top:985px" width="17" height="17"><path d="M5,8.5 L11,3.5 L11,13.5Z" fill="#464646"/></svg>
<div style="position:absolute;left:832.0px;top:985.0px;width:216.0px;height:17.0px;background:#444;border-radius:8px"></div>
<div style="position:absolute;left:1590.0px;top:985.0px;width:17.0px;height:17.0px;background:#828282;border-radius:4px;box-shadow:inset 0 0 0 1px #6c6c6c"></div>
<svg style="position:absolute;left:1590px;top:985px" width="17" height="17"><path d="M12,8.5 L6,3.5 L6,13.5Z" fill="#464646"/></svg>
<div style="position:absolute;left:1619.0px;top:249.0px;width:941.0px;height:755.0px;background:#1b1b1b"></div>
<div style="position:absolute;left:1628.0px;top:259.0px;width:921.0px;height:736.0px;background:#333333"></div>
<div class="t" style="left:2032.5px;top:267.1px;font-size:20.00px;color:#d8d8d8;transform:scaleX(0.9600);">CIE 1976 u'v'</div>
<div style="position:absolute;left:1679.0px;top:291.0px;width:865.0px;height:666.0px;background:#232323"></div>
<svg style="position:absolute;left:1679px;top:291px" width="865" height="666"><defs><clipPath id="loc"><path d="M370.1,644.8 L370.0,644.7 L369.9,644.7 L369.8,644.8 L369.7,644.9 L369.5,644.9 L369.2,644.9 L369.0,644.9 L368.8,645.0 L368.7,645.2 L368.6,645.4 L368.3,645.4 L368.0,645.5 L367.6,645.4 L367.1,645.4 L366.7,645.4 L366.3,645.4 L365.8,645.3 L365.2,645.2 L364.5,644.9 L363.4,644.3 L362.1,643.5 L360.6,642.5 L358.8,641.2 L356.9,639.7 L354.6,638.0 L352.0,635.9 L349.0,633.6 L345.8,630.9 L342.2,627.8 L338.3,624.5 L334.0,620.9 L329.2,616.9 L323.8,612.5 L317.9,607.6 L311.4,602.3 L304.4,596.6 L296.9,590.3 L288.8,583.4 L279.9,575.6 L270.4,566.8 L260.4,557.2 L249.4,546.0 L237.1,532.3 L223.1,515.8 L207.6,496.4 L191.3,474.7 L174.1,450.5 L156.2,423.7 L137.8,394.7 L119.3,364.2 L101.0,332.8 L83.4,300.9 L67.3,269.1 L53.0,238.3 L40.6,208.9 L29.8,181.4 L20.9,156.3 L13.8,133.9 L8.6,114.2 L5.0,97.0 L2.8,82.2 L2.0,69.5 L2.4,58.6 L4.0,49.1 L6.7,41.0 L10.4,34.3 L15.1,28.8 L20.5,24.6 L26.6,21.4 L33.3,19.2 L40.4,17.7 L48.0,16.8 L55.8,16.2 L64.0,15.9 L72.1,15.8 L80.3,15.8 L88.5,15.9 L96.9,16.2 L105.4,16.5 L114.2,17.0 L123.2,17.6 L132.5,18.3 L142.1,19.1 L152.1,20.0 L162.4,20.9 L173.1,22.0 L184.3,23.1 L195.9,24.3 L208.0,25.6 L220.6,27.0 L233.8,28.4 L247.4,29.9 L261.7,31.5 L276.5,33.2 L291.9,34.9 L307.9,36.8 L324.6,38.7 L341.8,40.6 L359.6,42.7 L378.0,44.8 L397.0,47.0 L416.5,49.2 L436.5,51.5 L456.9,53.8 L477.7,56.2 L498.8,58.6 L519.9,61.0 L540.8,63.4 L561.2,65.7 L581.5,68.1 L601.6,70.4 L621.5,72.6 L640.5,74.8 L658.7,76.9 L676.0,78.8 L692.6,80.7 L708.2,82.5 L723.0,84.2 L736.8,85.8 L749.6,87.3 L761.6,88.6 L772.7,89.9 L783.1,91.1 L792.8,92.2 L801.9,93.2 L810.6,94.2 L818.7,95.2 L826.4,96.0 L833.5,96.9 L840.1,97.6 L846.3,98.3 L851.9,99.0 L856.9,99.5 L861.3,100.0 L865.3,100.5 L868.9,100.9 L872.2,101.3 L875.2,101.6 L877.9,101.9 L880.2,102.2 L882.1,102.4 L883.7,102.6 L885.1,102.8 L886.6,102.9 L887.9,103.1 L889.0,103.2 L890.1,103.4 L891.2,103.5 L892.3,103.6 L893.3,103.7 L894.4,103.8 L895.3,104.0 L896.1,104.0 L896.7,104.1 L897.1,104.2 L897.5,104.2 L897.8,104.2 L898.0,104.3 L898.2,104.3 L898.3,104.3Z"/></clipPath><filter id="bl" x="-5%" y="-5%" width="110%" height="110%"><feGaussianBlur stdDeviation="7"/></filter></defs><g clip-path="url(#loc)"><g filter="url(#bl)"><rect x="0" y="0" width="20" height="20" fill="#009900"/><rect x="20" y="0" width="20" height="20" fill="#009900"/><rect x="40" y="0" width="20" height="20" fill="#009900"/><rect x="60" y="0" width="20" height="20" fill="#009900"/><rect x="80" y="0" width="20" height="20" fill="#009900"/><rect x="100" y="0" width="20" height="20" fill="#009900"/><rect x="120" y="0" width="20" height="20" fill="#009900"/><rect x="140" y="0" width="20" height="20" fill="#009900"/><rect x="160" y="0" width="20" height="20" fill="#009900"/><rect x="180" y="0" width="20" height="20" fill="#139900"/><rect x="200" y="0" width="20" height="20" fill="#299900"/><rect x="220" y="0" width="20" height="20" fill="#409900"/><rect x="240" y="0" width="20" height="20" fill="#599900"/><rect x="260" y="0" width="20" height="20" fill="#729900"/><rect x="280" y="0" width="20" height="20" fill="#8e9900"/><rect x="300" y="0" width="20" height="20" fill="#998900"/><rect x="320" y="0" width="20" height="20" fill="#997300"/><rect x="340" y="0" width="20" height="20" fill="#996300"/><rect x="360" y="0" width="20" height="20" fill="#995500"/><rect x="380" y="0" width="20" height="20" fill="#994a00"/><rect x="400" y="0" width="20" height="20" fill="#994000"/><rect x="420" y="0" width="20" height="20" fill="#993800"/><rect x="440" y="0" width="20" height="20" fill="#993100"/><rect x="460" y="0" width="20" height="20" fill="#992b00"/><rect x="480" y="0" width="20" height="20" fill="#992600"/><rect x="500" y="0" width="20" height="20" fill="#992100"/><rect x="520" y="0" width="20" height="20" fill="#991d00"/><rect x="540" y="0" width="20" height="20" fill="#991900"/><rect x="560" y="0" width="20" height="20" fill="#991500"/><rect x="580" y="0" width="20" height="20" fill="#991200"/><rect x="600" y="0" width="20" height="20" fill="#990f00"/><rect x="620" y="0" width="20" height="20" fill="#990c00"/><rect x="640" y="0" width="20" height="20" fill="#990900"/><rect x="660" y="0" width="20" height="20" fill="#990700"/><rect x="680" y="0" width="20" height="20" fill="#990400"/><rect x="700" y="0" width="20" height="20" fill="#990200"/><rect x="720" y="0" width="20" height="20" fill="#990000"/><rect x="740" y="0" width="20" height="20" fill="#990000"/><rect x="760" y="0" width="20" height="20" fill="#990000"/><rect x="780" y="0" width="20" height="20" fill="#990000"/><rect x="800" y="0" width="20" height="20" fill="#990000"/><rect x="820" y="0" width="20" height="20" fill="#990000"/><rect x="840" y="0" width="20" height="20" fill="#990000"/><rect x="860" y="0" width="20" height="20" fill="#990000"/><rect x="0" y="20" width="20" height="20" fill="#009903"/><rect x="20" y="20" width="20" height="20" fill="#009902"/><rect x="40" y="20" width="20" height="20" fill="#009900"/><rect x="60" y="20" width="20" height="20" fill="#009900"/><rect x="80" y="20" width="20" height="20" fill="#009900"/><rect x="100" y="20" width="20" height="20" fill="#009900"/><rect x="120" y="20" width="20" height="20" fill="#009900"/><rect x="140" y="20" width="20" height="20" fill="#009900"/><rect x="160" y="20" width="20" height="20" fill="#009900"/><rect x="180" y="20" width="20" height="20" fill="#0f9900"/><rect x="200" y="20" width="20" height="20" fill="#279900"/><rect x="220" y="20" width="20" height="20" fill="#3f9900"/><rect x="240" y="20" width="20" height="20" fill="#599900"/><rect x="260" y="20" width="20" height="20" fill="#739900"/><rect x="280" y="20" width="20" height="20" fill="#909900"/><rect x="300" y="20" width="20" height="20" fill="#998600"/><rect x="320" y="20" width="20" height="20" fill="#997000"/><rect x="340" y="20" width="20" height="20" fill="#996000"/><rect x="360" y="20" width="20" height="20" fill="#995200"/><rect x="380" y="20" width="20" height="20" fill="#994700"/><rect x="400" y="20" width="20" height="20" fill="#993e00"/><rect x="420" y="20" width="20" height="20" fill="#993600"/><rect x="440" y="20" width="20" height="20" fill="#992f00"/><rect x="460" y="20" width="20" height="20" fill="#992900"/><rect x="480" y="20" width="20" height="20" fill="#992300"/><rect x="500" y="20" width="20" height="20" fill="#991e00"/><rect x="520" y="20" width="20" height="20" fill="#991a00"/><rect x="540" y="20" width="20" height="20" fill="#991600"/><rect x="560" y="20" width="20" height="20" fill="#991300"/><rect x="580" y="20" width="20" height="20" fill="#991000"/><rect x="600" y="20" width="20" height="20" fill="#990c00"/><rect x="620" y="20" width="20" height="20" fill="#990a00"/><rect x="640" y="20" width="20" height="20" fill="#990700"/><rect x="660" y="20" width="20" height="20" fill="#990400"/><rect x="680" y="20" width="20" height="20" fill="#990200"/><rect x="700" y="20" width="20" height="20" fill="#990000"/><rect x="720" y="20" width="20" height="20" fill="#990000"/><rect x="740" y="20" width="20" height="20" fill="#990000"/><rect x="760" y="20" width="20" height="20" fill="#990000"/><rect x="780" y="20" width="20" height="20" fill="#990000"/><rect x="800" y="20" width="20" height="20" fill="#990000"/><rect x="820" y="20" width="20" height="20" fill="#990000"/><rect x="840" y="20" width="20" height="20" fill="#990000"/><rect x="860" y="20" width="20" height="20" fill="#990000"/><rect x="0" y="40" width="20" height="20" fill="#009915"/><rect x="20" y="40" width="20" height="20" fill="#009914"/><rect x="40" y="40" width="20" height="20" fill="#009913"/><rect x="60" y="40" width="20" height="20" fill="#009912"/><rect x="80" y="40" width="20" height="20" fill="#009911"/><rect x="100" y="40" width="20" height="20" fill="#00990f"/><rect x="120" y="40" width="20" height="20" fill="#00990e"/><rect x="140" y="40" width="20" height="20" fill="#00990c"/><rect x="160" y="40" width="20" height="20" fill="#00990b"/><rect x="180" y="40" width="20" height="20" fill="#14ff0f"/><rect x="200" y="40" width="20" height="20" fill="#3dff0b"/><rect x="220" y="40" width="20" height="20" fill="#67ff07"/><rect x="240" y="40" width="20" height="20" fill="#93ff03"/><rect x="260" y="40" width="20" height="20" fill="#749900"/><rect x="280" y="40" width="20" height="20" fill="#929900"/><rect x="300" y="40" width="20" height="20" fill="#998300"/><rect x="320" y="40" width="20" height="20" fill="#996d00"/><rect x="340" y="40" width="20" height="20" fill="#995c00"/><rect x="360" y="40" width="20" height="20" fill="#994f00"/><rect x="380" y="40" width="20" height="20" fill="#994400"/><rect x="400" y="40" width="20" height="20" fill="#993b00"/><rect x="420" y="40" width="20" height="20" fill="#993300"/><rect x="440" y="40" width="20" height="20" fill="#992c00"/><rect x="460" y="40" width="20" height="20" fill="#992600"/><rect x="480" y="40" width="20" height="20" fill="#992100"/><rect x="500" y="40" width="20" height="20" fill="#991c00"/><rect x="520" y="40" width="20" height="20" fill="#991800"/><rect x="540" y="40" width="20" height="20" fill="#991400"/><rect x="560" y="40" width="20" height="20" fill="#991000"/><rect x="580" y="40" width="20" height="20" fill="#990d00"/><rect x="600" y="40" width="20" height="20" fill="#990a00"/><rect x="620" y="40" width="20" height="20" fill="#990700"/><rect x="640" y="40" width="20" height="20" fill="#990500"/><rect x="660" y="40" width="20" height="20" fill="#990200"/><rect x="680" y="40" width="20" height="20" fill="#990000"/><rect x="700" y="40" width="20" height="20" fill="#990000"/><rect x="720" y="40" width="20" height="20" fill="#990000"/><rect x="740" y="40" width="20" height="20" fill="#990000"/><rect x="760" y="40" width="20" height="20" fill="#990000"/><rect x="780" y="40" width="20" height="20" fill="#990000"/><rect x="800" y="40" width="20" height="20" fill="#990000"/><rect x="820" y="40" width="20" height="20" fill="#990000"/><rect x="840" y="40" width="20" height="20" fill="#990000"/><rect x="860" y="40" width="20" height="20" fill="#990000"/><rect x="0" y="60" width="20" height="20" fill="#009926"/><rect x="20" y="60" width="20" height="20" fill="#009925"/><rect x="40" y="60" width="20" height="20" fill="#009925"/><rect x="60" y="60" width="20" height="20" fill="#009924"/><rect x="80" y="60" width="20" height="20" fill="#009924"/><rect x="100" y="60" width="20" height="20" fill="#009923"/><rect x="120" y="60" width="20" height="20" fill="#009923"/><rect x="140" y="60" width="20" height="20" fill="#009922"/><rect x="160" y="60" width="20" height="20" fill="#009921"/><rect x="180" y="60" width="20" height="20" fill="#0dff36"/><rect x="200" y="60" width="20" height="20" fill="#39ff35"/><rect x="220" y="60" width="20" height="20" fill="#65ff33"/><rect x="240" y="60" width="20" height="20" fill="#93ff31"/><rect x="260" y="60" width="20" height="20" fill="#c4ff2f"/><rect x="280" y="60" width="20" height="20" fill="#f9ff2d"/><rect x="300" y="60" width="20" height="20" fill="#ffd424"/><rect x="320" y="60" width="20" height="20" fill="#ffb01c"/><rect x="340" y="60" width="20" height="20" fill="#ff9416"/><rect x="360" y="60" width="20" height="20" fill="#ff7e11"/><rect x="380" y="60" width="20" height="20" fill="#ff6c0c"/><rect x="400" y="60" width="20" height="20" fill="#ff5c09"/><rect x="420" y="60" width="20" height="20" fill="#ff4f06"/><rect x="440" y="60" width="20" height="20" fill="#ff4403"/><rect x="460" y="60" width="20" height="20" fill="#ff3a01"/><rect x="480" y="60" width="20" height="20" fill="#991e00"/><rect x="500" y="60" width="20" height="20" fill="#991900"/><rect x="520" y="60" width="20" height="20" fill="#991500"/><rect x="540" y="60" width="20" height="20" fill="#991100"/><rect x="560" y="60" width="20" height="20" fill="#990e00"/><rect x="580" y="60" width="20" height="20" fill="#990b00"/><rect x="600" y="60" width="20" height="20" fill="#990800"/><rect x="620" y="60" width="20" height="20" fill="#990500"/><rect x="640" y="60" width="20" height="20" fill="#990200"/><rect x="660" y="60" width="20" height="20" fill="#990000"/><rect x="680" y="60" width="20" height="20" fill="#990000"/><rect x="700" y="60" width="20" height="20" fill="#990000"/><rect x="720" y="60" width="20" height="20" fill="#990000"/><rect x="740" y="60" width="20" height="20" fill="#990000"/><rect x="760" y="60" width="20" height="20" fill="#990000"/><rect x="780" y="60" width="20" height="20" fill="#990000"/><rect x="800" y="60" width="20" height="20" fill="#990000"/><rect x="820" y="60" width="20" height="20" fill="#990000"/><rect x="840" y="60" width="20" height="20" fill="#990000"/><rect x="860" y="60" width="20" height="20" fill="#990000"/><rect x="0" y="80" width="20" height="20" fill="#009937"/><rect x="20" y="80" width="20" height="20" fill="#009937"/><rect x="40" y="80" width="20" height="20" fill="#009937"/><rect x="60" y="80" width="20" height="20" fill="#009937"/><rect x="80" y="80" width="20" height="20" fill="#009937"/><rect x="100" y="80" width="20" height="20" fill="#009937"/><rect x="120" y="80" width="20" height="20" fill="#009938"/><rect x="140" y="80" width="20" height="20" fill="#009938"/><rect x="160" y="80" width="20" height="20" fill="#009938"/><rect x="180" y="80" width="20" height="20" fill="#06ff5d"/><rect x="200" y="80" width="20" height="20" fill="#35ff5e"/><rect x="220" y="80" width="20" height="20" fill="#63ff5e"/><rect x="240" y="80" width="20" height="20" fill="#93ff5f"/><rect x="260" y="80" width="20" height="20" fill="#c6ff5f"/><rect x="280" y="80" width="20" height="20" fill="#feff60"/><rect x="300" y="80" width="20" height="20" fill="#ffcf4e"/><rect x="320" y="80" width="20" height="20" fill="#ffaa41"/><rect x="340" y="80" width="20" height="20" fill="#ff8e36"/><rect x="360" y="80" width="20" height="20" fill="#ff782e"/><rect x="380" y="80" width="20" height="20" fill="#ff6628"/><rect x="400" y="80" width="20" height="20" fill="#ff5722"/><rect x="420" y="80" width="20" height="20" fill="#ff4a1e"/><rect x="440" y="80" width="20" height="20" fill="#ff3f1a"/><rect x="460" y="80" width="20" height="20" fill="#ff3616"/><rect x="480" y="80" width="20" height="20" fill="#ff2d13"/><rect x="500" y="80" width="20" height="20" fill="#ff2610"/><rect x="520" y="80" width="20" height="20" fill="#ff1f0e"/><rect x="540" y="80" width="20" height="20" fill="#ff190c"/><rect x="560" y="80" width="20" height="20" fill="#ff130a"/><rect x="580" y="80" width="20" height="20" fill="#ff0e08"/><rect x="600" y="80" width="20" height="20" fill="#ff0906"/><rect x="620" y="80" width="20" height="20" fill="#ff0405"/><rect x="640" y="80" width="20" height="20" fill="#990002"/><rect x="660" y="80" width="20" height="20" fill="#990001"/><rect x="680" y="80" width="20" height="20" fill="#990000"/><rect x="700" y="80" width="20" height="20" fill="#990000"/><rect x="720" y="80" width="20" height="20" fill="#990000"/><rect x="740" y="80" width="20" height="20" fill="#990000"/><rect x="760" y="80" width="20" height="20" fill="#990000"/><rect x="780" y="80" width="20" height="20" fill="#990000"/><rect x="800" y="80" width="20" height="20" fill="#990000"/><rect x="820" y="80" width="20" height="20" fill="#990000"/><rect x="840" y="80" width="20" height="20" fill="#990000"/><rect x="860" y="80" width="20" height="20" fill="#990000"/><rect x="0" y="100" width="20" height="20" fill="#009948"/><rect x="20" y="100" width="20" height="20" fill="#009949"/><rect x="40" y="100" width="20" height="20" fill="#00994a"/><rect x="60" y="100" width="20" height="20" fill="#00994b"/><rect x="80" y="100" width="20" height="20" fill="#00994b"/><rect x="100" y="100" width="20" height="20" fill="#00994c"/><rect x="120" y="100" width="20" height="20" fill="#00994d"/><rect x="140" y="100" width="20" height="20" fill="#00994e"/><rect x="160" y="100" width="20" height="20" fill="#00994f"/><rect x="180" y="100" width="20" height="20" fill="#009951"/><rect x="200" y="100" width="20" height="20" fill="#2fff89"/><rect x="220" y="100" width="20" height="20" fill="#60ff8b"/><rect x="240" y="100" width="20" height="20" fill="#92ff8e"/><rect x="260" y="100" width="20" height="20" fill="#c9ff91"/><rect x="280" y="100" width="20" height="20" fill="#fffb92"/><rect x="300" y="100" width="20" height="20" fill="#ffc878"/><rect x="320" y="100" width="20" height="20" fill="#ffa465"/><rect x="340" y="100" width="20" height="20" fill="#ff8856"/><rect x="360" y="100" width="20" height="20" fill="#ff724b"/><rect x="380" y="100" width="20" height="20" fill="#ff6042"/><rect x="400" y="100" width="20" height="20" fill="#ff513a"/><rect x="420" y="100" width="20" height="20" fill="#ff4534"/><rect x="440" y="100" width="20" height="20" fill="#ff3a2e"/><rect x="460" y="100" width="20" height="20" fill="#ff312a"/><rect x="480" y="100" width="20" height="20" fill="#ff2825"/><rect x="500" y="100" width="20" height="20" fill="#ff2122"/><rect x="520" y="100" width="20" height="20" fill="#ff1a1e"/><rect x="540" y="100" width="20" height="20" fill="#ff141b"/><rect x="560" y="100" width="20" height="20" fill="#ff0f19"/><rect x="580" y="100" width="20" height="20" fill="#ff0916"/><rect x="600" y="100" width="20" height="20" fill="#ff0414"/><rect x="620" y="100" width="20" height="20" fill="#99000b"/><rect x="640" y="100" width="20" height="20" fill="#99000a"/><rect x="660" y="100" width="20" height="20" fill="#990009"/><rect x="680" y="100" width="20" height="20" fill="#990008"/><rect x="700" y="100" width="20" height="20" fill="#990007"/><rect x="720" y="100" width="20" height="20" fill="#990006"/><rect x="740" y="100" width="20" height="20" fill="#990005"/><rect x="760" y="100" width="20" height="20" fill="#990004"/><rect x="780" y="100" width="20" height="20" fill="#990004"/><rect x="800" y="100" width="20" height="20" fill="#990003"/><rect x="820" y="100" width="20" height="20" fill="#990002"/><rect x="840" y="100" width="20" height="20" fill="#990002"/><rect x="860" y="100" width="20" height="20" fill="#990001"/><rect x="0" y="120" width="20" height="20" fill="#00995b"/><rect x="20" y="120" width="20" height="20" fill="#00995c"/><rect x="40" y="120" width="20" height="20" fill="#00995d"/><rect x="60" y="120" width="20" height="20" fill="#00995f"/><rect x="80" y="120" width="20" height="20" fill="#009960"/><rect x="100" y="120" width="20" height="20" fill="#009962"/><rect x="120" y="120" width="20" height="20" fill="#009964"/><rect x="140" y="120" width="20" height="20" fill="#009966"/><rect x="160" y="120" width="20" height="20" fill="#009968"/><rect x="180" y="120" width="20" height="20" fill="#00996b"/><rect x="200" y="120" width="20" height="20" fill="#2affb7"/><rect x="220" y="120" width="20" height="20" fill="#5dffbc"/><rect x="240" y="120" width="20" height="20" fill="#92ffc1"/><rect x="260" y="120" width="20" height="20" fill="#cbffc7"/><rect x="280" y="120" width="20" height="20" fill="#fff4c6"/><rect x="300" y="120" width="20" height="20" fill="#ffc2a3"/><rect x="320" y="120" width="20" height="20" fill="#ff9d8a"/><rect x="340" y="120" width="20" height="20" fill="#ff8277"/><rect x="360" y="120" width="20" height="20" fill="#ff6c68"/><rect x="380" y="120" width="20" height="20" fill="#ff5a5c"/><rect x="400" y="120" width="20" height="20" fill="#ff4c52"/><rect x="420" y="120" width="20" height="20" fill="#ff3f4a"/><rect x="440" y="120" width="20" height="20" fill="#ff3543"/><rect x="460" y="120" width="20" height="20" fill="#ff2b3c"/><rect x="480" y="120" width="20" height="20" fill="#ff2337"/><rect x="500" y="120" width="20" height="20" fill="#ff1c32"/><rect x="520" y="120" width="20" height="20" fill="#ff152e"/><rect x="540" y="120" width="20" height="20" fill="#ff0f2b"/><rect x="560" y="120" width="20" height="20" fill="#ff0a27"/><rect x="580" y="120" width="20" height="20" fill="#ff0524"/><rect x="600" y="120" width="20" height="20" fill="#990014"/><rect x="620" y="120" width="20" height="20" fill="#990013"/><rect x="640" y="120" width="20" height="20" fill="#990011"/><rect x="660" y="120" width="20" height="20" fill="#990010"/><rect x="680" y="120" width="20" height="20" fill="#99000f"/><rect x="700" y="120" width="20" height="20" fill="#99000e"/><rect x="720" y="120" width="20" height="20" fill="#99000c"/><rect x="740" y="120" width="20" height="20" fill="#99000b"/><rect x="760" y="120" width="20" height="20" fill="#99000b"/><rect x="780" y="120" width="20" height="20" fill="#99000a"/><rect x="800" y="120" width="20" height="20" fill="#990009"/><rect x="820" y="120" width="20" height="20" fill="#990008"/><rect x="840" y="120" width="20" height="20" fill="#990007"/><rect x="860" y="120" width="20" height="20" fill="#990007"/><rect x="0" y="140" width="20" height="20" fill="#00996e"/><rect x="20" y="140" width="20" height="20" fill="#009970"/><rect x="40" y="140" width="20" height="20" fill="#009972"/><rect x="60" y="140" width="20" height="20" fill="#009974"/><rect x="80" y="140" width="20" height="20" fill="#009977"/><rect x="100" y="140" width="20" height="20" fill="#009979"/><rect x="120" y="140" width="20" height="20" fill="#00997c"/><rect x="140" y="140" width="20" height="20" fill="#009980"/><rect x="160" y="140" width="20" height="20" fill="#009983"/><rect x="180" y="140" width="20" height="20" fill="#009987"/><rect x="200" y="140" width="20" height="20" fill="#23ffe8"/><rect x="220" y="140" width="20" height="20" fill="#59fff0"/><rect x="240" y="140" width="20" height="20" fill="#91fff9"/><rect x="260" y="140" width="20" height="20" fill="#ccfcff"/><rect x="280" y="140" width="20" height="20" fill="#ffeefc"/><rect x="300" y="140" width="20" height="20" fill="#ffbbcf"/><rect x="320" y="140" width="20" height="20" fill="#ff96af"/><rect x="340" y="140" width="20" height="20" fill="#ff7b97"/><rect x="360" y="140" width="20" height="20" fill="#ff6585"/><rect x="380" y="140" width="20" height="20" fill="#ff5476"/><rect x="400" y="140" width="20" height="20" fill="#ff466a"/><rect x="420" y="140" width="20" height="20" fill="#ff3a5f"/><rect x="440" y="140" width="20" height="20" fill="#ff2f57"/><rect x="460" y="140" width="20" height="20" fill="#ff264f"/><rect x="480" y="140" width="20" height="20" fill="#ff1e49"/><rect x="500" y="140" width="20" height="20" fill="#ff1743"/><rect x="520" y="140" width="20" height="20" fill="#ff113e"/><rect x="540" y="140" width="20" height="20" fill="#ff0b39"/><rect x="560" y="140" width="20" height="20" fill="#ff0535"/><rect x="580" y="140" width="20" height="20" fill="#99001e"/><rect x="600" y="140" width="20" height="20" fill="#99001c"/><rect x="620" y="140" width="20" height="20" fill="#99001a"/><rect x="640" y="140" width="20" height="20" fill="#990018"/><rect x="660" y="140" width="20" height="20" fill="#990017"/><rect x="680" y="140" width="20" height="20" fill="#990015"/><rect x="700" y="140" width="20" height="20" fill="#990014"/><rect x="720" y="140" width="20" height="20" fill="#990013"/><rect x="740" y="140" width="20" height="20" fill="#990012"/><rect x="760" y="140" width="20" height="20" fill="#990010"/><rect x="780" y="140" width="20" height="20" fill="#99000f"/><rect x="800" y="140" width="20" height="20" fill="#99000e"/><rect x="820" y="140" width="20" height="20" fill="#99000e"/><rect x="840" y="140" width="20" height="20" fill="#99000d"/><rect x="860" y="140" width="20" height="20" fill="#99000c"/><rect x="0" y="160" width="20" height="20" fill="#009982"/><rect x="20" y="160" width="20" height="20" fill="#009985"/><rect x="40" y="160" width="20" height="20" fill="#009988"/><rect x="60" y="160" width="20" height="20" fill="#00998b"/><rect x="80" y="160" width="20" height="20" fill="#00998e"/><rect x="100" y="160" width="20" height="20" fill="#009992"/><rect x="120" y="160" width="20" height="20" fill="#009996"/><rect x="140" y="160" width="20" height="20" fill="#009799"/><rect x="160" y="160" width="20" height="20" fill="#009299"/><rect x="180" y="160" width="20" height="20" fill="#008e99"/><rect x="200" y="160" width="20" height="20" fill="#19e4ff"/><rect x="220" y="160" width="20" height="20" fill="#49dbff"/><rect x="240" y="160" width="20" height="20" fill="#77d2ff"/><rect x="260" y="160" width="20" height="20" fill="#a5c9ff"/><rect x="280" y="160" width="20" height="20" fill="#d3bfff"/><rect x="300" y="160" width="20" height="20" fill="#ffb3fd"/><rect x="320" y="160" width="20" height="20" fill="#ff8fd6"/><rect x="340" y="160" width="20" height="20" fill="#ff74b9"/><rect x="360" y="160" width="20" height="20" fill="#ff5fa2"/><rect x="380" y="160" width="20" height="20" fill="#ff4e90"/><rect x="400" y="160" width="20" height="20" fill="#ff3f82"/><rect x="420" y="160" width="20" height="20" fill="#ff3475"/><rect x="440" y="160" width="20" height="20" fill="#ff296b"/><rect x="460" y="160" width="20" height="20" fill="#ff2162"/><rect x="480" y="160" width="20" height="20" fill="#ff195a"/><rect x="500" y="160" width="20" height="20" fill="#ff1254"/><rect x="520" y="160" width="20" height="20" fill="#ff0b4e"/><rect x="540" y="160" width="20" height="20" fill="#ff0548"/><rect x="560" y="160" width="20" height="20" fill="#990028"/><rect x="580" y="160" width="20" height="20" fill="#990026"/><rect x="600" y="160" width="20" height="20" fill="#990023"/><rect x="620" y="160" width="20" height="20" fill="#990021"/><rect x="640" y="160" width="20" height="20" fill="#99001f"/><rect x="660" y="160" width="20" height="20" fill="#99001d"/><rect x="680" y="160" width="20" height="20" fill="#99001c"/><rect x="700" y="160" width="20" height="20" fill="#99001a"/><rect x="720" y="160" width="20" height="20" fill="#990019"/><rect x="740" y="160" width="20" height="20" fill="#990017"/><rect x="760" y="160" width="20" height="20" fill="#990016"/><rect x="780" y="160" width="20" height="20" fill="#990015"/><rect x="800" y="160" width="20" height="20" fill="#990014"/><rect x="820" y="160" width="20" height="20" fill="#990013"/><rect x="840" y="160" width="20" height="20" fill="#990012"/><rect x="860" y="160" width="20" height="20" fill="#990011"/><rect x="0" y="180" width="20" height="20" fill="#009997"/><rect x="20" y="180" width="20" height="20" fill="#009799"/><rect x="40" y="180" width="20" height="20" fill="#009499"/><rect x="60" y="180" width="20" height="20" fill="#009099"/><rect x="80" y="180" width="20" height="20" fill="#008c99"/><rect x="100" y="180" width="20" height="20" fill="#008899"/><rect x="120" y="180" width="20" height="20" fill="#008399"/><rect x="140" y="180" width="20" height="20" fill="#007f99"/><rect x="160" y="180" width="20" height="20" fill="#007b99"/><rect x="180" y="180" width="20" height="20" fill="#007699"/><rect x="200" y="180" width="20" height="20" fill="#0fbdff"/><rect x="220" y="180" width="20" height="20" fill="#39b5ff"/><rect x="240" y="180" width="20" height="20" fill="#62acff"/><rect x="260" y="180" width="20" height="20" fill="#89a4ff"/><rect x="280" y="180" width="20" height="20" fill="#b19bff"/><rect x="300" y="180" width="20" height="20" fill="#d992ff"/><rect x="320" y="180" width="20" height="20" fill="#ff87fd"/><rect x="340" y="180" width="20" height="20" fill="#ff6cdb"/><rect x="360" y="180" width="20" height="20" fill="#ff58c0"/><rect x="380" y="180" width="20" height="20" fill="#ff47ab"/><rect x="400" y="180" width="20" height="20" fill="#ff399a"/><rect x="420" y="180" width="20" height="20" fill="#ff2d8b"/><rect x="440" y="180" width="20" height="20" fill="#ff237f"/><rect x="460" y="180" width="20" height="20" fill="#ff1b75"/><rect x="480" y="180" width="20" height="20" fill="#ff136c"/><rect x="500" y="180" width="20" height="20" fill="#ff0c64"/><rect x="520" y="180" width="20" height="20" fill="#ff065d"/><rect x="540" y="180" width="20" height="20" fill="#990034"/><rect x="560" y="180" width="20" height="20" fill="#990031"/><rect x="580" y="180" width="20" height="20" fill="#99002e"/><rect x="600" y="180" width="20" height="20" fill="#99002b"/><rect x="620" y="180" width="20" height="20" fill="#990029"/><rect x="640" y="180" width="20" height="20" fill="#990026"/><rect x="660" y="180" width="20" height="20" fill="#990024"/><rect x="680" y="180" width="20" height="20" fill="#990022"/><rect x="700" y="180" width="20" height="20" fill="#990020"/><rect x="720" y="180" width="20" height="20" fill="#99001f"/><rect x="740" y="180" width="20" height="20" fill="#99001d"/><rect x="760" y="180" width="20" height="20" fill="#99001c"/><rect x="780" y="180" width="20" height="20" fill="#99001a"/><rect x="800" y="180" width="20" height="20" fill="#990019"/><rect x="820" y="180" width="20" height="20" fill="#990018"/><rect x="840" y="180" width="20" height="20" fill="#990017"/><rect x="860" y="180" width="20" height="20" fill="#990016"/><rect x="0" y="200" width="20" height="20" fill="#008799"/><rect x="20" y="200" width="20" height="20" fill="#008399"/><rect x="40" y="200" width="20" height="20" fill="#008099"/><rect x="60" y="200" width="20" height="20" fill="#007c99"/><rect x="80" y="200" width="20" height="20" fill="#007899"/><rect x="100" y="200" width="20" height="20" fill="#007499"/><rect x="120" y="200" width="20" height="20" fill="#007099"/><rect x="140" y="200" width="20" height="20" fill="#006c99"/><rect x="160" y="200" width="20" height="20" fill="#006899"/><rect x="180" y="200" width="20" height="20" fill="#006499"/><rect x="200" y="200" width="20" height="20" fill="#069fff"/><rect x="220" y="200" width="20" height="20" fill="#2d97ff"/><rect x="240" y="200" width="20" height="20" fill="#5190ff"/><rect x="260" y="200" width="20" height="20" fill="#7488ff"/><rect x="280" y="200" width="20" height="20" fill="#977fff"/><rect x="300" y="200" width="20" height="20" fill="#ba77ff"/><rect x="320" y="200" width="20" height="20" fill="#dd6eff"/><rect x="340" y="200" width="20" height="20" fill="#ff65fe"/><rect x="360" y="200" width="20" height="20" fill="#ff50df"/><rect x="380" y="200" width="20" height="20" fill="#ff40c6"/><rect x="400" y="200" width="20" height="20" fill="#ff32b2"/><rect x="420" y="200" width="20" height="20" fill="#ff27a2"/><rect x="440" y="200" width="20" height="20" fill="#ff1d94"/><rect x="460" y="200" width="20" height="20" fill="#ff1588"/><rect x="480" y="200" width="20" height="20" fill="#ff0d7e"/><rect x="500" y="200" width="20" height="20" fill="#ff0675"/><rect x="520" y="200" width="20" height="20" fill="#990041"/><rect x="540" y="200" width="20" height="20" fill="#99003d"/><rect x="560" y="200" width="20" height="20" fill="#990039"/><rect x="580" y="200" width="20" height="20" fill="#990036"/><rect x="600" y="200" width="20" height="20" fill="#990033"/><rect x="620" y="200" width="20" height="20" fill="#990030"/><rect x="640" y="200" width="20" height="20" fill="#99002d"/><rect x="660" y="200" width="20" height="20" fill="#99002b"/><rect x="680" y="200" width="20" height="20" fill="#990029"/><rect x="700" y="200" width="20" height="20" fill="#990027"/><rect x="720" y="200" width="20" height="20" fill="#990025"/><rect x="740" y="200" width="20" height="20" fill="#990023"/><rect x="760" y="200" width="20" height="20" fill="#990021"/><rect x="780" y="200" width="20" height="20" fill="#990020"/><rect x="800" y="200" width="20" height="20" fill="#99001e"/><rect x="820" y="200" width="20" height="20" fill="#99001d"/><rect x="840" y="200" width="20" height="20" fill="#99001c"/><rect x="860" y="200" width="20" height="20" fill="#99001b"/><rect x="0" y="220" width="20" height="20" fill="#007799"/><rect x="20" y="220" width="20" height="20" fill="#007399"/><rect x="40" y="220" width="20" height="20" fill="#007099"/><rect x="60" y="220" width="20" height="20" fill="#006c99"/><rect x="80" y="220" width="20" height="20" fill="#006999"/><rect x="100" y="220" width="20" height="20" fill="#006599"/><rect x="120" y="220" width="20" height="20" fill="#006199"/><rect x="140" y="220" width="20" height="20" fill="#005d99"/><rect x="160" y="220" width="20" height="20" fill="#005999"/><rect x="180" y="220" width="20" height="20" fill="#005599"/><rect x="200" y="220" width="20" height="20" fill="#005199"/><rect x="220" y="220" width="20" height="20" fill="#2380ff"/><rect x="240" y="220" width="20" height="20" fill="#4479ff"/><rect x="260" y="220" width="20" height="20" fill="#6371ff"/><rect x="280" y="220" width="20" height="20" fill="#826aff"/><rect x="300" y="220" width="20" height="20" fill="#a262ff"/><rect x="320" y="220" width="20" height="20" fill="#c15aff"/><rect x="340" y="220" width="20" height="20" fill="#e051ff"/><rect x="360" y="220" width="20" height="20" fill="#ff48fe"/><rect x="380" y="220" width="20" height="20" fill="#ff38e2"/><rect x="400" y="220" width="20" height="20" fill="#ff2bcb"/><rect x="420" y="220" width="20" height="20" fill="#ff20b9"/><rect x="440" y="220" width="20" height="20" fill="#ff17a9"/><rect x="460" y="220" width="20" height="20" fill="#ff0e9b"/><rect x="480" y="220" width="20" height="20" fill="#ff0790"/><rect x="500" y="220" width="20" height="20" fill="#990050"/><rect x="520" y="220" width="20" height="20" fill="#99004b"/><rect x="540" y="220" width="20" height="20" fill="#990046"/><rect x="560" y="220" width="20" height="20" fill="#990042"/><rect x="580" y="220" width="20" height="20" fill="#99003e"/><rect x="600" y="220" width="20" height="20" fill="#99003a"/><rect x="620" y="220" width="20" height="20" fill="#990037"/><rect x="640" y="220" width="20" height="20" fill="#990034"/><rect x="660" y="220" width="20" height="20" fill="#990032"/><rect x="680" y="220" width="20" height="20" fill="#99002f"/><rect x="700" y="220" width="20" height="20" fill="#99002d"/><rect x="720" y="220" width="20" height="20" fill="#99002b"/><rect x="740" y="220" width="20" height="20" fill="#990029"/><rect x="760" y="220" width="20" height="20" fill="#990027"/><rect x="780" y="220" width="20" height="20" fill="#990025"/><rect x="800" y="220" width="20" height="20" fill="#990024"/><rect x="820" y="220" width="20" height="20" fill="#990022"/><rect x="840" y="220" width="20" height="20" fill="#990021"/><rect x="860" y="220" width="20" height="20" fill="#99001f"/><rect x="0" y="240" width="20" height="20" fill="#006999"/><rect x="20" y="240" width="20" height="20" fill="#006699"/><rect x="40" y="240" width="20" height="20" fill="#006299"/><rect x="60" y="240" width="20" height="20" fill="#005f99"/><rect x="80" y="240" width="20" height="20" fill="#005c99"/><rect x="100" y="240" width="20" height="20" fill="#005899"/><rect x="120" y="240" width="20" height="20" fill="#005599"/><rect x="140" y="240" width="20" height="20" fill="#005199"/><rect x="160" y="240" width="20" height="20" fill="#004d99"/><rect x="180" y="240" width="20" height="20" fill="#004999"/><rect x="200" y="240" width="20" height="20" fill="#004599"/><rect x="220" y="240" width="20" height="20" fill="#1b6dff"/><rect x="240" y="240" width="20" height="20" fill="#3966ff"/><rect x="260" y="240" width="20" height="20" fill="#565fff"/><rect x="280" y="240" width="20" height="20" fill="#7258ff"/><rect x="300" y="240" width="20" height="20" fill="#8e50ff"/><rect x="320" y="240" width="20" height="20" fill="#aa49ff"/><rect x="340" y="240" width="20" height="20" fill="#c641ff"/><rect x="360" y="240" width="20" height="20" fill="#e339ff"/><rect x="380" y="240" width="20" height="20" fill="#ff30ff"/><rect x="400" y="240" width="20" height="20" fill="#ff24e5"/><rect x="420" y="240" width="20" height="20" fill="#ff19d0"/><rect x="440" y="240" width="20" height="20" fill="#ff10be"/><rect x="460" y="240" width="20" height="20" fill="#ff07af"/><rect x="480" y="240" width="20" height="20" fill="#990061"/><rect x="500" y="240" width="20" height="20" fill="#99005a"/><rect x="520" y="240" width="20" height="20" fill="#990054"/><rect x="540" y="240" width="20" height="20" fill="#99004f"/><rect x="560" y="240" width="20" height="20" fill="#99004a"/><rect x="580" y="240" width="20" height="20" fill="#990046"/><rect x="600" y="240" width="20" height="20" fill="#990042"/><rect x="620" y="240" width="20" height="20" fill="#99003e"/><rect x="640" y="240" width="20" height="20" fill="#99003b"/><rect x="660" y="240" width="20" height="20" fill="#990038"/><rect x="680" y="240" width="20" height="20" fill="#990035"/><rect x="700" y="240" width="20" height="20" fill="#990033"/><rect x="720" y="240" width="20" height="20" fill="#990031"/><rect x="740" y="240" width="20" height="20" fill="#99002e"/><rect x="760" y="240" width="20" height="20" fill="#99002c"/><rect x="780" y="240" width="20" height="20" fill="#99002b"/><rect x="800" y="240" width="20" height="20" fill="#990029"/><rect x="820" y="240" width="20" height="20" fill="#990027"/><rect x="840" y="240" width="20" height="20" fill="#990026"/><rect x="860" y="240" width="20" height="20" fill="#990024"/><rect x="0" y="260" width="20" height="20" fill="#005d99"/><rect x="20" y="260" width="20" height="20" fill="#005a99"/><rect x="40" y="260" width="20" height="20" fill="#005799"/><rect x="60" y="260" width="20" height="20" fill="#005499"/><rect x="80" y="260" width="20" height="20" fill="#005199"/><rect x="100" y="260" width="20" height="20" fill="#004d99"/><rect x="120" y="260" width="20" height="20" fill="#004a99"/><rect x="140" y="260" width="20" height="20" fill="#004699"/><rect x="160" y="260" width="20" height="20" fill="#004399"/><rect x="180" y="260" width="20" height="20" fill="#003f99"/><rect x="200" y="260" width="20" height="20" fill="#003c99"/><rect x="220" y="260" width="20" height="20" fill="#145dff"/><rect x="240" y="260" width="20" height="20" fill="#3057ff"/><rect x="260" y="260" width="20" height="20" fill="#4a50ff"/><rect x="280" y="260" width="20" height="20" fill="#6449ff"/><rect x="300" y="260" width="20" height="20" fill="#7e42ff"/><rect x="320" y="260" width="20" height="20" fill="#983bff"/><rect x="340" y="260" width="20" height="20" fill="#b134ff"/><rect x="360" y="260" width="20" height="20" fill="#cb2cff"/><rect x="380" y="260" width="20" height="20" fill="#e524ff"/><rect x="400" y="260" width="20" height="20" fill="#ff1cff"/><rect x="420" y="260" width="20" height="20" fill="#ff11e7"/><rect x="440" y="260" width="20" height="20" fill="#ff08d3"/><rect x="460" y="260" width="20" height="20" fill="#990075"/><rect x="480" y="260" width="20" height="20" fill="#99006c"/><rect x="500" y="260" width="20" height="20" fill="#990064"/><rect x="520" y="260" width="20" height="20" fill="#99005e"/><rect x="540" y="260" width="20" height="20" fill="#990058"/><rect x="560" y="260" width="20" height="20" fill="#990053"/><rect x="580" y="260" width="20" height="20" fill="#99004e"/><rect x="600" y="260" width="20" height="20" fill="#99004a"/><rect x="620" y="260" width="20" height="20" fill="#990046"/><rect x="640" y="260" width="20" height="20" fill="#990042"/><rect x="660" y="260" width="20" height="20" fill="#99003f"/><rect x="680" y="260" width="20" height="20" fill="#99003c"/><rect x="700" y="260" width="20" height="20" fill="#990039"/><rect x="720" y="260" width="20" height="20" fill="#990037"/><rect x="740" y="260" width="20" height="20" fill="#990034"/><rect x="760" y="260" width="20" height="20" fill="#990032"/><rect x="780" y="260" width="20" height="20" fill="#990030"/><rect x="800" y="260" width="20" height="20" fill="#99002e"/><rect x="820" y="260" width="20" height="20" fill="#99002c"/><rect x="840" y="260" width="20" height="20" fill="#99002a"/><rect x="860" y="260" width="20" height="20" fill="#990029"/><rect x="0" y="280" width="20" height="20" fill="#005499"/><rect x="20" y="280" width="20" height="20" fill="#005199"/><rect x="40" y="280" width="20" height="20" fill="#004e99"/><rect x="60" y="280" width="20" height="20" fill="#004b99"/><rect x="80" y="280" width="20" height="20" fill="#004799"/><rect x="100" y="280" width="20" height="20" fill="#004499"/><rect x="120" y="280" width="20" height="20" fill="#004199"/><rect x="140" y="280" width="20" height="20" fill="#003e99"/><rect x="160" y="280" width="20" height="20" fill="#003a99"/><rect x="180" y="280" width="20" height="20" fill="#003799"/><rect x="200" y="280" width="20" height="20" fill="#003399"/><rect x="220" y="280" width="20" height="20" fill="#0e50ff"/><rect x="240" y="280" width="20" height="20" fill="#2849ff"/><rect x="260" y="280" width="20" height="20" fill="#4143ff"/><rect x="280" y="280" width="20" height="20" fill="#593dff"/><rect x="300" y="280" width="20" height="20" fill="#7136ff"/><rect x="320" y="280" width="20" height="20" fill="#882fff"/><rect x="340" y="280" width="20" height="20" fill="#a028ff"/><rect x="360" y="280" width="20" height="20" fill="#b721ff"/><rect x="380" y="280" width="20" height="20" fill="#cf1aff"/><rect x="400" y="280" width="20" height="20" fill="#e712ff"/><rect x="420" y="280" width="20" height="20" fill="#ff09ff"/><rect x="440" y="280" width="20" height="20" fill="#99008c"/><rect x="460" y="280" width="20" height="20" fill="#990081"/><rect x="480" y="280" width="20" height="20" fill="#990077"/><rect x="500" y="280" width="20" height="20" fill="#99006f"/><rect x="520" y="280" width="20" height="20" fill="#990067"/><rect x="540" y="280" width="20" height="20" fill="#990061"/><rect x="560" y="280" width="20" height="20" fill="#99005b"/><rect x="580" y="280" width="20" height="20" fill="#990056"/><rect x="600" y="280" width="20" height="20" fill="#990051"/><rect x="620" y="280" width="20" height="20" fill="#99004d"/><rect x="640" y="280" width="20" height="20" fill="#990049"/><rect x="660" y="280" width="20" height="20" fill="#990046"/><rect x="680" y="280" width="20" height="20" fill="#990042"/><rect x="700" y="280" width="20" height="20" fill="#99003f"/><rect x="720" y="280" width="20" height="20" fill="#99003d"/><rect x="740" y="280" width="20" height="20" fill="#99003a"/><rect x="760" y="280" width="20" height="20" fill="#990038"/><rect x="780" y="280" width="20" height="20" fill="#990035"/><rect x="800" y="280" width="20" height="20" fill="#990033"/><rect x="820" y="280" width="20" height="20" fill="#990031"/><rect x="840" y="280" width="20" height="20" fill="#99002f"/><rect x="860" y="280" width="20" height="20" fill="#99002e"/><rect x="0" y="300" width="20" height="20" fill="#004b99"/><rect x="20" y="300" width="20" height="20" fill="#004899"/><rect x="40" y="300" width="20" height="20" fill="#004599"/><rect x="60" y="300" width="20" height="20" fill="#004299"/><rect x="80" y="300" width="20" height="20" fill="#003f99"/><rect x="100" y="300" width="20" height="20" fill="#003c99"/><rect x="120" y="300" width="20" height="20" fill="#003999"/><rect x="140" y="300" width="20" height="20" fill="#003699"/><rect x="160" y="300" width="20" height="20" fill="#003399"/><rect x="180" y="300" width="20" height="20" fill="#003099"/><rect x="200" y="300" width="20" height="20" fill="#002c99"/><rect x="220" y="300" width="20" height="20" fill="#0944ff"/><rect x="240" y="300" width="20" height="20" fill="#223eff"/><rect x="260" y="300" width="20" height="20" fill="#3938ff"/><rect x="280" y="300" width="20" height="20" fill="#4f32ff"/><rect x="300" y="300" width="20" height="20" fill="#652cff"/><rect x="320" y="300" width="20" height="20" fill="#7b25ff"/><rect x="340" y="300" width="20" height="20" fill="#911fff"/><rect x="360" y="300" width="20" height="20" fill="#a718ff"/><rect x="380" y="300" width="20" height="20" fill="#bc10ff"/><rect x="400" y="300" width="20" height="20" fill="#d209ff"/><rect x="420" y="300" width="20" height="20" fill="#8b0099"/><rect x="440" y="300" width="20" height="20" fill="#990099"/><rect x="460" y="300" width="20" height="20" fill="#99008d"/><rect x="480" y="300" width="20" height="20" fill="#990082"/><rect x="500" y="300" width="20" height="20" fill="#990079"/><rect x="520" y="300" width="20" height="20" fill="#990071"/><rect x="540" y="300" width="20" height="20" fill="#99006a"/><rect x="560" y="300" width="20" height="20" fill="#990064"/><rect x="580" y="300" width="20" height="20" fill="#99005e"/><rect x="600" y="300" width="20" height="20" fill="#990059"/><rect x="620" y="300" width="20" height="20" fill="#990054"/><rect x="640" y="300" width="20" height="20" fill="#990050"/><rect x="660" y="300" width="20" height="20" fill="#99004c"/><rect x="680" y="300" width="20" height="20" fill="#990049"/><rect x="700" y="300" width="20" height="20" fill="#990045"/><rect x="720" y="300" width="20" height="20" fill="#990042"/><rect x="740" y="300" width="20" height="20" fill="#990040"/><rect x="760" y="300" width="20" height="20" fill="#99003d"/><rect x="780" y="300" width="20" height="20" fill="#99003b"/><rect x="800" y="300" width="20" height="20" fill="#990038"/><rect x="820" y="300" width="20" height="20" fill="#990036"/><rect x="840" y="300" width="20" height="20" fill="#990034"/><rect x="860" y="300" width="20" height="20" fill="#990032"/><rect x="0" y="320" width="20" height="20" fill="#004399"/><rect x="20" y="320" width="20" height="20" fill="#004199"/><rect x="40" y="320" width="20" height="20" fill="#003e99"/><rect x="60" y="320" width="20" height="20" fill="#003b99"/><rect x="80" y="320" width="20" height="20" fill="#003899"/><rect x="100" y="320" width="20" height="20" fill="#003599"/><rect x="120" y="320" width="20" height="20" fill="#003299"/><rect x="140" y="320" width="20" height="20" fill="#002f99"/><rect x="160" y="320" width="20" height="20" fill="#002c99"/><rect x="180" y="320" width="20" height="20" fill="#002999"/><rect x="200" y="320" width="20" height="20" fill="#002699"/><rect x="220" y="320" width="20" height="20" fill="#043aff"/><rect x="240" y="320" width="20" height="20" fill="#1c34ff"/><rect x="260" y="320" width="20" height="20" fill="#322fff"/><rect x="280" y="320" width="20" height="20" fill="#4629ff"/><rect x="300" y="320" width="20" height="20" fill="#5b23ff"/><rect x="320" y="320" width="20" height="20" fill="#701cff"/><rect x="340" y="320" width="20" height="20" fill="#8416ff"/><rect x="360" y="320" width="20" height="20" fill="#980fff"/><rect x="380" y="320" width="20" height="20" fill="#ac08ff"/><rect x="400" y="320" width="20" height="20" fill="#740099"/><rect x="420" y="320" width="20" height="20" fill="#800099"/><rect x="440" y="320" width="20" height="20" fill="#8c0099"/><rect x="460" y="320" width="20" height="20" fill="#990099"/><rect x="480" y="320" width="20" height="20" fill="#99008e"/><rect x="500" y="320" width="20" height="20" fill="#990084"/><rect x="520" y="320" width="20" height="20" fill="#99007b"/><rect x="540" y="320" width="20" height="20" fill="#990073"/><rect x="560" y="320" width="20" height="20" fill="#99006c"/><rect x="580" y="320" width="20" height="20" fill="#990066"/><rect x="600" y="320" width="20" height="20" fill="#990061"/><rect x="620" y="320" width="20" height="20" fill="#99005c"/><rect x="640" y="320" width="20" height="20" fill="#990057"/><rect x="660" y="320" width="20" height="20" fill="#990053"/><rect x="680" y="320" width="20" height="20" fill="#99004f"/><rect x="700" y="320" width="20" height="20" fill="#99004c"/><rect x="720" y="320" width="20" height="20" fill="#990048"/><rect x="740" y="320" width="20" height="20" fill="#990045"/><rect x="760" y="320" width="20" height="20" fill="#990043"/><rect x="780" y="320" width="20" height="20" fill="#990040"/><rect x="800" y="320" width="20" height="20" fill="#99003e"/><rect x="820" y="320" width="20" height="20" fill="#99003b"/><rect x="840" y="320" width="20" height="20" fill="#990039"/><rect x="860" y="320" width="20" height="20" fill="#990037"/><rect x="0" y="340" width="20" height="20" fill="#003d99"/><rect x="20" y="340" width="20" height="20" fill="#003a99"/><rect x="40" y="340" width="20" height="20" fill="#003799"/><rect x="60" y="340" width="20" height="20" fill="#003599"/><rect x="80" y="340" width="20" height="20" fill="#003299"/><rect x="100" y="340" width="20" height="20" fill="#002f99"/><rect x="120" y="340" width="20" height="20" fill="#002c99"/><rect x="140" y="340" width="20" height="20" fill="#002a99"/><rect x="160" y="340" width="20" height="20" fill="#002799"/><rect x="180" y="340" width="20" height="20" fill="#002499"/><rect x="200" y="340" width="20" height="20" fill="#002099"/><rect x="220" y="340" width="20" height="20" fill="#001d99"/><rect x="240" y="340" width="20" height="20" fill="#172cff"/><rect x="260" y="340" width="20" height="20" fill="#2b26ff"/><rect x="280" y="340" width="20" height="20" fill="#3f20ff"/><rect x="300" y="340" width="20" height="20" fill="#521bff"/><rect x="320" y="340" width="20" height="20" fill="#6615ff"/><rect x="340" y="340" width="20" height="20" fill="#790eff"/><rect x="360" y="340" width="20" height="20" fill="#8c08ff"/><rect x="380" y="340" width="20" height="20" fill="#5f0099"/><rect x="400" y="340" width="20" height="20" fill="#6b0099"/><rect x="420" y="340" width="20" height="20" fill="#760099"/><rect x="440" y="340" width="20" height="20" fill="#810099"/><rect x="460" y="340" width="20" height="20" fill="#8d0099"/><rect x="480" y="340" width="20" height="20" fill="#990099"/><rect x="500" y="340" width="20" height="20" fill="#99008f"/><rect x="520" y="340" width="20" height="20" fill="#990085"/><rect x="540" y="340" width="20" height="20" fill="#99007d"/><rect x="560" y="340" width="20" height="20" fill="#990075"/><rect x="580" y="340" width="20" height="20" fill="#99006f"/><rect x="600" y="340" width="20" height="20" fill="#990069"/><rect x="620" y="340" width="20" height="20" fill="#990063"/><rect x="640" y="340" width="20" height="20" fill="#99005e"/><rect x="660" y="340" width="20" height="20" fill="#99005a"/><rect x="680" y="340" width="20" height="20" fill="#990056"/><rect x="700" y="340" width="20" height="20" fill="#990052"/><rect x="720" y="340" width="20" height="20" fill="#99004e"/><rect x="740" y="340" width="20" height="20" fill="#99004b"/><rect x="760" y="340" width="20" height="20" fill="#990048"/><rect x="780" y="340" width="20" height="20" fill="#990045"/><rect x="800" y="340" width="20" height="20" fill="#990043"/><rect x="820" y="340" width="20" height="20" fill="#990040"/><rect x="840" y="340" width="20" height="20" fill="#99003e"/><rect x="860" y="340" width="20" height="20" fill="#99003c"/><rect x="0" y="360" width="20" height="20" fill="#003799"/><rect x="20" y="360" width="20" height="20" fill="#003499"/><rect x="40" y="360" width="20" height="20" fill="#003299"/><rect x="60" y="360" width="20" height="20" fill="#002f99"/><rect x="80" y="360" width="20" height="20" fill="#002c99"/><rect x="100" y="360" width="20" height="20" fill="#002a99"/><rect x="120" y="360" width="20" height="20" fill="#002799"/><rect x="140" y="360" width="20" height="20" fill="#002499"/><rect x="160" y="360" width="20" height="20" fill="#002199"/><rect x="180" y="360" width="20" height="20" fill="#001f99"/><rect x="200" y="360" width="20" height="20" fill="#001c99"/><rect x="220" y="360" width="20" height="20" fill="#001999"/><rect x="240" y="360" width="20" height="20" fill="#1224ff"/><rect x="260" y="360" width="20" height="20" fill="#261eff"/><rect x="280" y="360" width="20" height="20" fill="#3819ff"/><rect x="300" y="360" width="20" height="20" fill="#4b13ff"/><rect x="320" y="360" width="20" height="20" fill="#5d0dff"/><rect x="340" y="360" width="20" height="20" fill="#6f07ff"/><rect x="360" y="360" width="20" height="20" fill="#4d0099"/><rect x="380" y="360" width="20" height="20" fill="#580099"/><rect x="400" y="360" width="20" height="20" fill="#630099"/><rect x="420" y="360" width="20" height="20" fill="#6d0099"/><rect x="440" y="360" width="20" height="20" fill="#780099"/><rect x="460" y="360" width="20" height="20" fill="#830099"/><rect x="480" y="360" width="20" height="20" fill="#8e0099"/><rect x="500" y="360" width="20" height="20" fill="#980099"/><rect x="520" y="360" width="20" height="20" fill="#99008f"/><rect x="540" y="360" width="20" height="20" fill="#990086"/><rect x="560" y="360" width="20" height="20" fill="#99007e"/><rect x="580" y="360" width="20" height="20" fill="#990077"/><rect x="600" y="360" width="20" height="20" fill="#990071"/><rect x="620" y="360" width="20" height="20" fill="#99006b"/><rect x="640" y="360" width="20" height="20" fill="#990066"/><rect x="660" y="360" width="20" height="20" fill="#990061"/><rect x="680" y="360" width="20" height="20" fill="#99005c"/><rect x="700" y="360" width="20" height="20" fill="#990058"/><rect x="720" y="360" width="20" height="20" fill="#990055"/><rect x="740" y="360" width="20" height="20" fill="#990051"/><rect x="760" y="360" width="20" height="20" fill="#99004e"/><rect x="780" y="360" width="20" height="20" fill="#99004b"/><rect x="800" y="360" width="20" height="20" fill="#990048"/><rect x="820" y="360" width="20" height="20" fill="#990045"/><rect x="840" y="360" width="20" height="20" fill="#990043"/><rect x="860" y="360" width="20" height="20" fill="#990041"/><rect x="0" y="380" width="20" height="20" fill="#003199"/><rect x="20" y="380" width="20" height="20" fill="#002f99"/><rect x="40" y="380" width="20" height="20" fill="#002d99"/><rect x="60" y="380" width="20" height="20" fill="#002a99"/><rect x="80" y="380" width="20" height="20" fill="#002799"/><rect x="100" y="380" width="20" height="20" fill="#002599"/><rect x="120" y="380" width="20" height="20" fill="#002299"/><rect x="140" y="380" width="20" height="20" fill="#002099"/><rect x="160" y="380" width="20" height="20" fill="#001d99"/><rect x="180" y="380" width="20" height="20" fill="#001a99"/><rect x="200" y="380" width="20" height="20" fill="#001799"/><rect x="220" y="380" width="20" height="20" fill="#001499"/><rect x="240" y="380" width="20" height="20" fill="#0e1dff"/><rect x="260" y="380" width="20" height="20" fill="#2118ff"/><rect x="280" y="380" width="20" height="20" fill="#3312ff"/><rect x="300" y="380" width="20" height="20" fill="#440dff"/><rect x="320" y="380" width="20" height="20" fill="#5507ff"/><rect x="340" y="380" width="20" height="20" fill="#6600ff"/><rect x="360" y="380" width="20" height="20" fill="#470099"/><rect x="380" y="380" width="20" height="20" fill="#510099"/><rect x="400" y="380" width="20" height="20" fill="#5b0099"/><rect x="420" y="380" width="20" height="20" fill="#660099"/><rect x="440" y="380" width="20" height="20" fill="#700099"/><rect x="460" y="380" width="20" height="20" fill="#7a0099"/><rect x="480" y="380" width="20" height="20" fill="#840099"/><rect x="500" y="380" width="20" height="20" fill="#8e0099"/><rect x="520" y="380" width="20" height="20" fill="#980099"/><rect x="540" y="380" width="20" height="20" fill="#990090"/><rect x="560" y="380" width="20" height="20" fill="#990087"/><rect x="580" y="380" width="20" height="20" fill="#990080"/><rect x="600" y="380" width="20" height="20" fill="#990079"/><rect x="620" y="380" width="20" height="20" fill="#990073"/><rect x="640" y="380" width="20" height="20" fill="#99006d"/><rect x="660" y="380" width="20" height="20" fill="#990068"/><rect x="680" y="380" width="20" height="20" fill="#990063"/><rect x="700" y="380" width="20" height="20" fill="#99005f"/><rect x="720" y="380" width="20" height="20" fill="#99005b"/><rect x="740" y="380" width="20" height="20" fill="#990057"/><rect x="760" y="380" width="20" height="20" fill="#990053"/><rect x="780" y="380" width="20" height="20" fill="#990050"/><rect x="800" y="380" width="20" height="20" fill="#99004d"/><rect x="820" y="380" width="20" height="20" fill="#99004a"/><rect x="840" y="380" width="20" height="20" fill="#990048"/><rect x="860" y="380" width="20" height="20" fill="#990045"/><rect x="0" y="400" width="20" height="20" fill="#002d99"/><rect x="20" y="400" width="20" height="20" fill="#002a99"/><rect x="40" y="400" width="20" height="20" fill="#002899"/><rect x="60" y="400" width="20" height="20" fill="#002599"/><rect x="80" y="400" width="20" height="20" fill="#002399"/><rect x="100" y="400" width="20" height="20" fill="#002099"/><rect x="120" y="400" width="20" height="20" fill="#001e99"/><rect x="140" y="400" width="20" height="20" fill="#001b99"/><rect x="160" y="400" width="20" height="20" fill="#001999"/><rect x="180" y="400" width="20" height="20" fill="#001699"/><rect x="200" y="400" width="20" height="20" fill="#001399"/><rect x="220" y="400" width="20" height="20" fill="#001099"/><rect x="240" y="400" width="20" height="20" fill="#0a16ff"/><rect x="260" y="400" width="20" height="20" fill="#1c11ff"/><rect x="280" y="400" width="20" height="20" fill="#2d0cff"/><rect x="300" y="400" width="20" height="20" fill="#3e07ff"/><rect x="320" y="400" width="20" height="20" fill="#4e00ff"/><rect x="340" y="400" width="20" height="20" fill="#390099"/><rect x="360" y="400" width="20" height="20" fill="#420099"/><rect x="380" y="400" width="20" height="20" fill="#4c0099"/><rect x="400" y="400" width="20" height="20" fill="#550099"/><rect x="420" y="400" width="20" height="20" fill="#5f0099"/><rect x="440" y="400" width="20" height="20" fill="#680099"/><rect x="460" y="400" width="20" height="20" fill="#720099"/><rect x="480" y="400" width="20" height="20" fill="#7b0099"/><rect x="500" y="400" width="20" height="20" fill="#850099"/><rect x="520" y="400" width="20" height="20" fill="#8f0099"/><rect x="540" y="400" width="20" height="20" fill="#980099"/><rect x="560" y="400" width="20" height="20" fill="#990090"/><rect x="580" y="400" width="20" height="20" fill="#990088"/><rect x="600" y="400" width="20" height="20" fill="#990081"/><rect x="620" y="400" width="20" height="20" fill="#99007a"/><rect x="640" y="400" width="20" height="20" fill="#990074"/><rect x="660" y="400" width="20" height="20" fill="#99006f"/><rect x="680" y="400" width="20" height="20" fill="#99006a"/><rect x="700" y="400" width="20" height="20" fill="#990065"/><rect x="720" y="400" width="20" height="20" fill="#990061"/><rect x="740" y="400" width="20" height="20" fill="#99005d"/><rect x="760" y="400" width="20" height="20" fill="#990059"/><rect x="780" y="400" width="20" height="20" fill="#990056"/><rect x="800" y="400" width="20" height="20" fill="#990053"/><rect x="820" y="400" width="20" height="20" fill="#990050"/><rect x="840" y="400" width="20" height="20" fill="#99004d"/><rect x="860" y="400" width="20" height="20" fill="#99004a"/><rect x="0" y="420" width="20" height="20" fill="#002899"/><rect x="20" y="420" width="20" height="20" fill="#002699"/><rect x="40" y="420" width="20" height="20" fill="#002499"/><rect x="60" y="420" width="20" height="20" fill="#002199"/><rect x="80" y="420" width="20" height="20" fill="#001f99"/><rect x="100" y="420" width="20" height="20" fill="#001c99"/><rect x="120" y="420" width="20" height="20" fill="#001a99"/><rect x="140" y="420" width="20" height="20" fill="#001799"/><rect x="160" y="420" width="20" height="20" fill="#001599"/><rect x="180" y="420" width="20" height="20" fill="#001299"/><rect x="200" y="420" width="20" height="20" fill="#001099"/><rect x="220" y="420" width="20" height="20" fill="#000d99"/><rect x="240" y="420" width="20" height="20" fill="#0710ff"/><rect x="260" y="420" width="20" height="20" fill="#180cff"/><rect x="280" y="420" width="20" height="20" fill="#2906ff"/><rect x="300" y="420" width="20" height="20" fill="#3800ff"/><rect x="320" y="420" width="20" height="20" fill="#2b0099"/><rect x="340" y="420" width="20" height="20" fill="#340099"/><rect x="360" y="420" width="20" height="20" fill="#3d0099"/><rect x="380" y="420" width="20" height="20" fill="#460099"/><rect x="400" y="420" width="20" height="20" fill="#500099"/><rect x="420" y="420" width="20" height="20" fill="#590099"/><rect x="440" y="420" width="20" height="20" fill="#620099"/><rect x="460" y="420" width="20" height="20" fill="#6b0099"/><rect x="480" y="420" width="20" height="20" fill="#740099"/><rect x="500" y="420" width="20" height="20" fill="#7d0099"/><rect x="520" y="420" width="20" height="20" fill="#860099"/><rect x="540" y="420" width="20" height="20" fill="#8f0099"/><rect x="560" y="420" width="20" height="20" fill="#980099"/><rect x="580" y="420" width="20" height="20" fill="#990091"/><rect x="600" y="420" width="20" height="20" fill="#990089"/><rect x="620" y="420" width="20" height="20" fill="#990082"/><rect x="640" y="420" width="20" height="20" fill="#99007c"/><rect x="660" y="420" width="20" height="20" fill="#990076"/><rect x="680" y="420" width="20" height="20" fill="#990070"/><rect x="700" y="420" width="20" height="20" fill="#99006b"/><rect x="720" y="420" width="20" height="20" fill="#990067"/><rect x="740" y="420" width="20" height="20" fill="#990063"/><rect x="760" y="420" width="20" height="20" fill="#99005f"/><rect x="780" y="420" width="20" height="20" fill="#99005b"/><rect x="800" y="420" width="20" height="20" fill="#990058"/><rect x="820" y="420" width="20" height="20" fill="#990055"/><rect x="840" y="420" width="20" height="20" fill="#990052"/><rect x="860" y="420" width="20" height="20" fill="#99004f"/><rect x="0" y="440" width="20" height="20" fill="#002499"/><rect x="20" y="440" width="20" height="20" fill="#002299"/><rect x="40" y="440" width="20" height="20" fill="#002099"/><rect x="60" y="440" width="20" height="20" fill="#001d99"/><rect x="80" y="440" width="20" height="20" fill="#001b99"/><rect x="100" y="440" width="20" height="20" fill="#001999"/><rect x="120" y="440" width="20" height="20" fill="#001699"/><rect x="140" y="440" width="20" height="20" fill="#001499"/><rect x="160" y="440" width="20" height="20" fill="#001199"/><rect x="180" y="440" width="20" height="20" fill="#000f99"/><rect x="200" y="440" width="20" height="20" fill="#000c99"/><rect x="220" y="440" width="20" height="20" fill="#000999"/><rect x="240" y="440" width="20" height="20" fill="#040bff"/><rect x="260" y="440" width="20" height="20" fill="#1506ff"/><rect x="280" y="440" width="20" height="20" fill="#2400ff"/><rect x="300" y="440" width="20" height="20" fill="#1f0099"/><rect x="320" y="440" width="20" height="20" fill="#280099"/><rect x="340" y="440" width="20" height="20" fill="#300099"/><rect x="360" y="440" width="20" height="20" fill="#390099"/><rect x="380" y="440" width="20" height="20" fill="#420099"/><rect x="400" y="440" width="20" height="20" fill="#4a0099"/><rect x="420" y="440" width="20" height="20" fill="#530099"/><rect x="440" y="440" width="20" height="20" fill="#5c0099"/><rect x="460" y="440" width="20" height="20" fill="#640099"/><rect x="480" y="440" width="20" height="20" fill="#6d0099"/><rect x="500" y="440" width="20" height="20" fill="#750099"/><rect x="520" y="440" width="20" height="20" fill="#7e0099"/><rect x="540" y="440" width="20" height="20" fill="#870099"/><rect x="560" y="440" width="20" height="20" fill="#8f0099"/><rect x="580" y="440" width="20" height="20" fill="#980099"/><rect x="600" y="440" width="20" height="20" fill="#990091"/><rect x="620" y="440" width="20" height="20" fill="#99008a"/><rect x="640" y="440" width="20" height="20" fill="#990083"/><rect x="660" y="440" width="20" height="20" fill="#99007d"/><rect x="680" y="440" width="20" height="20" fill="#990077"/><rect x="700" y="440" width="20" height="20" fill="#990072"/><rect x="720" y="440" width="20" height="20" fill="#99006d"/><rect x="740" y="440" width="20" height="20" fill="#990069"/><rect x="760" y="440" width="20" height="20" fill="#990065"/><rect x="780" y="440" width="20" height="20" fill="#990061"/><rect x="800" y="440" width="20" height="20" fill="#99005d"/><rect x="820" y="440" width="20" height="20" fill="#99005a"/><rect x="840" y="440" width="20" height="20" fill="#990057"/><rect x="860" y="440" width="20" height="20" fill="#990054"/><rect x="0" y="460" width="20" height="20" fill="#002099"/><rect x="20" y="460" width="20" height="20" fill="#001e99"/><rect x="40" y="460" width="20" height="20" fill="#001c99"/><rect x="60" y="460" width="20" height="20" fill="#001a99"/><rect x="80" y="460" width="20" height="20" fill="#001899"/><rect x="100" y="460" width="20" height="20" fill="#001599"/><rect x="120" y="460" width="20" height="20" fill="#001399"/><rect x="140" y="460" width="20" height="20" fill="#001199"/><rect x="160" y="460" width="20" height="20" fill="#000e99"/><rect x="180" y="460" width="20" height="20" fill="#000c99"/><rect x="200" y="460" width="20" height="20" fill="#000999"/><rect x="220" y="460" width="20" height="20" fill="#000699"/><rect x="240" y="460" width="20" height="20" fill="#0006ff"/><rect x="260" y="460" width="20" height="20" fill="#1100ff"/><rect x="280" y="460" width="20" height="20" fill="#130099"/><rect x="300" y="460" width="20" height="20" fill="#1c0099"/><rect x="320" y="460" width="20" height="20" fill="#250099"/><rect x="340" y="460" width="20" height="20" fill="#2d0099"/><rect x="360" y="460" width="20" height="20" fill="#350099"/><rect x="380" y="460" width="20" height="20" fill="#3e0099"/><rect x="400" y="460" width="20" height="20" fill="#460099"/><rect x="420" y="460" width="20" height="20" fill="#4e0099"/><rect x="440" y="460" width="20" height="20" fill="#560099"/><rect x="460" y="460" width="20" height="20" fill="#5e0099"/><rect x="480" y="460" width="20" height="20" fill="#670099"/><rect x="500" y="460" width="20" height="20" fill="#6f0099"/><rect x="520" y="460" width="20" height="20" fill="#770099"/><rect x="540" y="460" width="20" height="20" fill="#7f0099"/><rect x="560" y="460" width="20" height="20" fill="#880099"/><rect x="580" y="460" width="20" height="20" fill="#900099"/><rect x="600" y="460" width="20" height="20" fill="#980099"/><rect x="620" y="460" width="20" height="20" fill="#990092"/><rect x="640" y="460" width="20" height="20" fill="#99008b"/><rect x="660" y="460" width="20" height="20" fill="#990084"/><rect x="680" y="460" width="20" height="20" fill="#99007e"/><rect x="700" y="460" width="20" height="20" fill="#990078"/><rect x="720" y="460" width="20" height="20" fill="#990073"/><rect x="740" y="460" width="20" height="20" fill="#99006f"/><rect x="760" y="460" width="20" height="20" fill="#99006a"/><rect x="780" y="460" width="20" height="20" fill="#990066"/><rect x="800" y="460" width="20" height="20" fill="#990062"/><rect x="820" y="460" width="20" height="20" fill="#99005f"/><rect x="840" y="460" width="20" height="20" fill="#99005c"/><rect x="860" y="460" width="20" height="20" fill="#990059"/><rect x="0" y="480" width="20" height="20" fill="#001d99"/><rect x="20" y="480" width="20" height="20" fill="#001b99"/><rect x="40" y="480" width="20" height="20" fill="#001999"/><rect x="60" y="480" width="20" height="20" fill="#001799"/><rect x="80" y="480" width="20" height="20" fill="#001499"/><rect x="100" y="480" width="20" height="20" fill="#001299"/><rect x="120" y="480" width="20" height="20" fill="#001099"/><rect x="140" y="480" width="20" height="20" fill="#000e99"/><rect x="160" y="480" width="20" height="20" fill="#000b99"/><rect x="180" y="480" width="20" height="20" fill="#000999"/><rect x="200" y="480" width="20" height="20" fill="#000699"/><rect x="220" y="480" width="20" height="20" fill="#000399"/><rect x="240" y="480" width="20" height="20" fill="#000099"/><rect x="260" y="480" width="20" height="20" fill="#080099"/><rect x="280" y="480" width="20" height="20" fill="#110099"/><rect x="300" y="480" width="20" height="20" fill="#1a0099"/><rect x="320" y="480" width="20" height="20" fill="#220099"/><rect x="340" y="480" width="20" height="20" fill="#2a0099"/><rect x="360" y="480" width="20" height="20" fill="#320099"/><rect x="380" y="480" width="20" height="20" fill="#3a0099"/><rect x="400" y="480" width="20" height="20" fill="#420099"/><rect x="420" y="480" width="20" height="20" fill="#490099"/><rect x="440" y="480" width="20" height="20" fill="#510099"/><rect x="460" y="480" width="20" height="20" fill="#590099"/><rect x="480" y="480" width="20" height="20" fill="#610099"/><rect x="500" y="480" width="20" height="20" fill="#690099"/><rect x="520" y="480" width="20" height="20" fill="#710099"/><rect x="540" y="480" width="20" height="20" fill="#780099"/><rect x="560" y="480" width="20" height="20" fill="#800099"/><rect x="580" y="480" width="20" height="20" fill="#880099"/><rect x="600" y="480" width="20" height="20" fill="#900099"/><rect x="620" y="480" width="20" height="20" fill="#980099"/><rect x="640" y="480" width="20" height="20" fill="#990092"/><rect x="660" y="480" width="20" height="20" fill="#99008b"/><rect x="680" y="480" width="20" height="20" fill="#990085"/><rect x="700" y="480" width="20" height="20" fill="#99007f"/><rect x="720" y="480" width="20" height="20" fill="#99007a"/><rect x="740" y="480" width="20" height="20" fill="#990075"/><rect x="760" y="480" width="20" height="20" fill="#990070"/><rect x="780" y="480" width="20" height="20" fill="#99006c"/><rect x="800" y="480" width="20" height="20" fill="#990068"/><rect x="820" y="480" width="20" height="20" fill="#990064"/><rect x="840" y="480" width="20" height="20" fill="#990061"/><rect x="860" y="480" width="20" height="20" fill="#99005d"/><rect x="0" y="500" width="20" height="20" fill="#001a99"/><rect x="20" y="500" width="20" height="20" fill="#001899"/><rect x="40" y="500" width="20" height="20" fill="#001699"/><rect x="60" y="500" width="20" height="20" fill="#001499"/><rect x="80" y="500" width="20" height="20" fill="#001199"/><rect x="100" y="500" width="20" height="20" fill="#000f99"/><rect x="120" y="500" width="20" height="20" fill="#000d99"/><rect x="140" y="500" width="20" height="20" fill="#000b99"/><rect x="160" y="500" width="20" height="20" fill="#000899"/><rect x="180" y="500" width="20" height="20" fill="#000699"/><rect x="200" y="500" width="20" height="20" fill="#000399"/><rect x="220" y="500" width="20" height="20" fill="#000099"/><rect x="240" y="500" width="20" height="20" fill="#000099"/><rect x="260" y="500" width="20" height="20" fill="#070099"/><rect x="280" y="500" width="20" height="20" fill="#0f0099"/><rect x="300" y="500" width="20" height="20" fill="#170099"/><rect x="320" y="500" width="20" height="20" fill="#1f0099"/><rect x="340" y="500" width="20" height="20" fill="#270099"/><rect x="360" y="500" width="20" height="20" fill="#2f0099"/><rect x="380" y="500" width="20" height="20" fill="#360099"/><rect x="400" y="500" width="20" height="20" fill="#3e0099"/><rect x="420" y="500" width="20" height="20" fill="#450099"/><rect x="440" y="500" width="20" height="20" fill="#4d0099"/><rect x="460" y="500" width="20" height="20" fill="#540099"/><rect x="480" y="500" width="20" height="20" fill="#5c0099"/><rect x="500" y="500" width="20" height="20" fill="#630099"/><rect x="520" y="500" width="20" height="20" fill="#6b0099"/><rect x="540" y="500" width="20" height="20" fill="#720099"/><rect x="560" y="500" width="20" height="20" fill="#7a0099"/><rect x="580" y="500" width="20" height="20" fill="#810099"/><rect x="600" y="500" width="20" height="20" fill="#890099"/><rect x="620" y="500" width="20" height="20" fill="#900099"/><rect x="640" y="500" width="20" height="20" fill="#980099"/><rect x="660" y="500" width="20" height="20" fill="#990093"/><rect x="680" y="500" width="20" height="20" fill="#99008c"/><rect x="700" y="500" width="20" height="20" fill="#990086"/><rect x="720" y="500" width="20" height="20" fill="#990080"/><rect x="740" y="500" width="20" height="20" fill="#99007b"/><rect x="760" y="500" width="20" height="20" fill="#990076"/><rect x="780" y="500" width="20" height="20" fill="#990071"/><rect x="800" y="500" width="20" height="20" fill="#99006d"/><rect x="820" y="500" width="20" height="20" fill="#990069"/><rect x="840" y="500" width="20" height="20" fill="#990066"/><rect x="860" y="500" width="20" height="20" fill="#990062"/><rect x="0" y="520" width="20" height="20" fill="#001799"/><rect x="20" y="520" width="20" height="20" fill="#001599"/><rect x="40" y="520" width="20" height="20" fill="#001399"/><rect x="60" y="520" width="20" height="20" fill="#001199"/><rect x="80" y="520" width="20" height="20" fill="#000f99"/><rect x="100" y="520" width="20" height="20" fill="#000d99"/><rect x="120" y="520" width="20" height="20" fill="#000a99"/><rect x="140" y="520" width="20" height="20" fill="#000899"/><rect x="160" y="520" width="20" height="20" fill="#000699"/><rect x="180" y="520" width="20" height="20" fill="#000399"/><rect x="200" y="520" width="20" height="20" fill="#000099"/><rect x="220" y="520" width="20" height="20" fill="#000099"/><rect x="240" y="520" width="20" height="20" fill="#000099"/><rect x="260" y="520" width="20" height="20" fill="#050099"/><rect x="280" y="520" width="20" height="20" fill="#0d0099"/><rect x="300" y="520" width="20" height="20" fill="#150099"/><rect x="320" y="520" width="20" height="20" fill="#1d0099"/><rect x="340" y="520" width="20" height="20" fill="#240099"/><rect x="360" y="520" width="20" height="20" fill="#2c0099"/><rect x="380" y="520" width="20" height="20" fill="#330099"/><rect x="400" y="520" width="20" height="20" fill="#3a0099"/><rect x="420" y="520" width="20" height="20" fill="#410099"/><rect x="440" y="520" width="20" height="20" fill="#490099"/><rect x="460" y="520" width="20" height="20" fill="#500099"/><rect x="480" y="520" width="20" height="20" fill="#570099"/><rect x="500" y="520" width="20" height="20" fill="#5e0099"/><rect x="520" y="520" width="20" height="20" fill="#650099"/><rect x="540" y="520" width="20" height="20" fill="#6d0099"/><rect x="560" y="520" width="20" height="20" fill="#740099"/><rect x="580" y="520" width="20" height="20" fill="#7b0099"/><rect x="600" y="520" width="20" height="20" fill="#820099"/><rect x="620" y="520" width="20" height="20" fill="#890099"/><rect x="640" y="520" width="20" height="20" fill="#910099"/><rect x="660" y="520" width="20" height="20" fill="#980099"/><rect x="680" y="520" width="20" height="20" fill="#990093"/><rect x="700" y="520" width="20" height="20" fill="#99008c"/><rect x="720" y="520" width="20" height="20" fill="#990086"/><rect x="740" y="520" width="20" height="20" fill="#990081"/><rect x="760" y="520" width="20" height="20" fill="#99007c"/><rect x="780" y="520" width="20" height="20" fill="#990077"/><rect x="800" y="520" width="20" height="20" fill="#990073"/><rect x="820" y="520" width="20" height="20" fill="#99006f"/><rect x="840" y="520" width="20" height="20" fill="#99006b"/><rect x="860" y="520" width="20" height="20" fill="#990067"/><rect x="0" y="540" width="20" height="20" fill="#001499"/><rect x="20" y="540" width="20" height="20" fill="#001299"/><rect x="40" y="540" width="20" height="20" fill="#001099"/><rect x="60" y="540" width="20" height="20" fill="#000e99"/><rect x="80" y="540" width="20" height="20" fill="#000c99"/><rect x="100" y="540" width="20" height="20" fill="#000a99"/><rect x="120" y="540" width="20" height="20" fill="#000899"/><rect x="140" y="540" width="20" height="20" fill="#000599"/><rect x="160" y="540" width="20" height="20" fill="#000399"/><rect x="180" y="540" width="20" height="20" fill="#000099"/><rect x="200" y="540" width="20" height="20" fill="#000099"/><rect x="220" y="540" width="20" height="20" fill="#000099"/><rect x="240" y="540" width="20" height="20" fill="#000099"/><rect x="260" y="540" width="20" height="20" fill="#030099"/><rect x="280" y="540" width="20" height="20" fill="#0c0099"/><rect x="300" y="540" width="20" height="20" fill="#130099"/><rect x="320" y="540" width="20" height="20" fill="#1b0099"/><rect x="340" y="540" width="20" height="20" fill="#220099"/><rect x="360" y="540" width="20" height="20" fill="#290099"/><rect x="380" y="540" width="20" height="20" fill="#300099"/><rect x="400" y="540" width="20" height="20" fill="#370099"/><rect x="420" y="540" width="20" height="20" fill="#3e0099"/><rect x="440" y="540" width="20" height="20" fill="#450099"/><rect x="460" y="540" width="20" height="20" fill="#4c0099"/><rect x="480" y="540" width="20" height="20" fill="#530099"/><rect x="500" y="540" width="20" height="20" fill="#590099"/><rect x="520" y="540" width="20" height="20" fill="#600099"/><rect x="540" y="540" width="20" height="20" fill="#670099"/><rect x="560" y="540" width="20" height="20" fill="#6e0099"/><rect x="580" y="540" width="20" height="20" fill="#750099"/><rect x="600" y="540" width="20" height="20" fill="#7c0099"/><rect x="620" y="540" width="20" height="20" fill="#830099"/><rect x="640" y="540" width="20" height="20" fill="#8a0099"/><rect x="660" y="540" width="20" height="20" fill="#910099"/><rect x="680" y="540" width="20" height="20" fill="#980099"/><rect x="700" y="540" width="20" height="20" fill="#990093"/><rect x="720" y="540" width="20" height="20" fill="#99008d"/><rect x="740" y="540" width="20" height="20" fill="#990087"/><rect x="760" y="540" width="20" height="20" fill="#990082"/><rect x="780" y="540" width="20" height="20" fill="#99007d"/><rect x="800" y="540" width="20" height="20" fill="#990078"/><rect x="820" y="540" width="20" height="20" fill="#990074"/><rect x="840" y="540" width="20" height="20" fill="#990070"/><rect x="860" y="540" width="20" height="20" fill="#99006c"/><rect x="0" y="560" width="20" height="20" fill="#001299"/><rect x="20" y="560" width="20" height="20" fill="#001099"/><rect x="40" y="560" width="20" height="20" fill="#000e99"/><rect x="60" y="560" width="20" height="20" fill="#000c99"/><rect x="80" y="560" width="20" height="20" fill="#000a99"/><rect x="100" y="560" width="20" height="20" fill="#000799"/><rect x="120" y="560" width="20" height="20" fill="#000599"/><rect x="140" y="560" width="20" height="20" fill="#000399"/><rect x="160" y="560" width="20" height="20" fill="#000099"/><rect x="180" y="560" width="20" height="20" fill="#000099"/><rect x="200" y="560" width="20" height="20" fill="#000099"/><rect x="220" y="560" width="20" height="20" fill="#000099"/><rect x="240" y="560" width="20" height="20" fill="#000099"/><rect x="260" y="560" width="20" height="20" fill="#020099"/><rect x="280" y="560" width="20" height="20" fill="#0a0099"/><rect x="300" y="560" width="20" height="20" fill="#110099"/><rect x="320" y="560" width="20" height="20" fill="#180099"/><rect x="340" y="560" width="20" height="20" fill="#1f0099"/><rect x="360" y="560" width="20" height="20" fill="#260099"/><rect x="380" y="560" width="20" height="20" fill="#2d0099"/><rect x="400" y="560" width="20" height="20" fill="#340099"/><rect x="420" y="560" width="20" height="20" fill="#3b0099"/><rect x="440" y="560" width="20" height="20" fill="#410099"/><rect x="460" y="560" width="20" height="20" fill="#480099"/><rect x="480" y="560" width="20" height="20" fill="#4f0099"/><rect x="500" y="560" width="20" height="20" fill="#550099"/><rect x="520" y="560" width="20" height="20" fill="#5c0099"/><rect x="540" y="560" width="20" height="20" fill="#620099"/><rect x="560" y="560" width="20" height="20" fill="#690099"/><rect x="580" y="560" width="20" height="20" fill="#700099"/><rect x="600" y="560" width="20" height="20" fill="#760099"/><rect x="620" y="560" width="20" height="20" fill="#7d0099"/><rect x="640" y="560" width="20" height="20" fill="#840099"/><rect x="660" y="560" width="20" height="20" fill="#8a0099"/><rect x="680" y="560" width="20" height="20" fill="#910099"/><rect x="700" y="560" width="20" height="20" fill="#980099"/><rect x="720" y="560" width="20" height="20" fill="#990093"/><rect x="740" y="560" width="20" height="20" fill="#99008d"/><rect x="760" y="560" width="20" height="20" fill="#990088"/><rect x="780" y="560" width="20" height="20" fill="#990083"/><rect x="800" y="560" width="20" height="20" fill="#99007e"/><rect x="820" y="560" width="20" height="20" fill="#990079"/><rect x="840" y="560" width="20" height="20" fill="#990075"/><rect x="860" y="560" width="20" height="20" fill="#990071"/><rect x="0" y="580" width="20" height="20" fill="#000f99"/><rect x="20" y="580" width="20" height="20" fill="#000d99"/><rect x="40" y="580" width="20" height="20" fill="#000b99"/><rect x="60" y="580" width="20" height="20" fill="#000999"/><rect x="80" y="580" width="20" height="20" fill="#000799"/><rect x="100" y="580" width="20" height="20" fill="#000599"/><rect x="120" y="580" width="20" height="20" fill="#000399"/><rect x="140" y="580" width="20" height="20" fill="#000099"/><rect x="160" y="580" width="20" height="20" fill="#000099"/><rect x="180" y="580" width="20" height="20" fill="#000099"/><rect x="200" y="580" width="20" height="20" fill="#000099"/><rect x="220" y="580" width="20" height="20" fill="#000099"/><rect x="240" y="580" width="20" height="20" fill="#000099"/><rect x="260" y="580" width="20" height="20" fill="#000099"/><rect x="280" y="580" width="20" height="20" fill="#080099"/><rect x="300" y="580" width="20" height="20" fill="#100099"/><rect x="320" y="580" width="20" height="20" fill="#170099"/><rect x="340" y="580" width="20" height="20" fill="#1d0099"/><rect x="360" y="580" width="20" height="20" fill="#240099"/><rect x="380" y="580" width="20" height="20" fill="#2a0099"/><rect x="400" y="580" width="20" height="20" fill="#310099"/><rect x="420" y="580" width="20" height="20" fill="#370099"/><rect x="440" y="580" width="20" height="20" fill="#3e0099"/><rect x="460" y="580" width="20" height="20" fill="#440099"/><rect x="480" y="580" width="20" height="20" fill="#4b0099"/><rect x="500" y="580" width="20" height="20" fill="#510099"/><rect x="520" y="580" width="20" height="20" fill="#580099"/><rect x="540" y="580" width="20" height="20" fill="#5e0099"/><rect x="560" y="580" width="20" height="20" fill="#640099"/><rect x="580" y="580" width="20" height="20" fill="#6b0099"/><rect x="600" y="580" width="20" height="20" fill="#710099"/><rect x="620" y="580" width="20" height="20" fill="#780099"/><rect x="640" y="580" width="20" height="20" fill="#7e0099"/><rect x="660" y="580" width="20" height="20" fill="#840099"/><rect x="680" y="580" width="20" height="20" fill="#8b0099"/><rect x="700" y="580" width="20" height="20" fill="#910099"/><rect x="720" y="580" width="20" height="20" fill="#980099"/><rect x="740" y="580" width="20" height="20" fill="#990094"/><rect x="760" y="580" width="20" height="20" fill="#99008e"/><rect x="780" y="580" width="20" height="20" fill="#990088"/><rect x="800" y="580" width="20" height="20" fill="#990083"/><rect x="820" y="580" width="20" height="20" fill="#99007f"/><rect x="840" y="580" width="20" height="20" fill="#99007a"/><rect x="860" y="580" width="20" height="20" fill="#990076"/><rect x="0" y="600" width="20" height="20" fill="#000d99"/><rect x="20" y="600" width="20" height="20" fill="#000b99"/><rect x="40" y="600" width="20" height="20" fill="#000999"/><rect x="60" y="600" width="20" height="20" fill="#000799"/><rect x="80" y="600" width="20" height="20" fill="#000599"/><rect x="100" y="600" width="20" height="20" fill="#000399"/><rect x="120" y="600" width="20" height="20" fill="#000099"/><rect x="140" y="600" width="20" height="20" fill="#000099"/><rect x="160" y="600" width="20" height="20" fill="#000099"/><rect x="180" y="600" width="20" height="20" fill="#000099"/><rect x="200" y="600" width="20" height="20" fill="#000099"/><rect x="220" y="600" width="20" height="20" fill="#000099"/><rect x="240" y="600" width="20" height="20" fill="#000099"/><rect x="260" y="600" width="20" height="20" fill="#000099"/><rect x="280" y="600" width="20" height="20" fill="#070099"/><rect x="300" y="600" width="20" height="20" fill="#0e0099"/><rect x="320" y="600" width="20" height="20" fill="#150099"/><rect x="340" y="600" width="20" height="20" fill="#1b0099"/><rect x="360" y="600" width="20" height="20" fill="#220099"/><rect x="380" y="600" width="20" height="20" fill="#280099"/><rect x="400" y="600" width="20" height="20" fill="#2e0099"/><rect x="420" y="600" width="20" height="20" fill="#350099"/><rect x="440" y="600" width="20" height="20" fill="#3b0099"/><rect x="460" y="600" width="20" height="20" fill="#410099"/><rect x="480" y="600" width="20" height="20" fill="#470099"/><rect x="500" y="600" width="20" height="20" fill="#4d0099"/><rect x="520" y="600" width="20" height="20" fill="#540099"/><rect x="540" y="600" width="20" height="20" fill="#5a0099"/><rect x="560" y="600" width="20" height="20" fill="#600099"/><rect x="580" y="600" width="20" height="20" fill="#660099"/><rect x="600" y="600" width="20" height="20" fill="#6c0099"/><rect x="620" y="600" width="20" height="20" fill="#720099"/><rect x="640" y="600" width="20" height="20" fill="#790099"/><rect x="660" y="600" width="20" height="20" fill="#7f0099"/><rect x="680" y="600" width="20" height="20" fill="#850099"/><rect x="700" y="600" width="20" height="20" fill="#8b0099"/><rect x="720" y="600" width="20" height="20" fill="#920099"/><rect x="740" y="600" width="20" height="20" fill="#980099"/><rect x="760" y="600" width="20" height="20" fill="#990094"/><rect x="780" y="600" width="20" height="20" fill="#99008e"/><rect x="800" y="600" width="20" height="20" fill="#990089"/><rect x="820" y="600" width="20" height="20" fill="#990084"/><rect x="840" y="600" width="20" height="20" fill="#990080"/><rect x="860" y="600" width="20" height="20" fill="#99007b"/><rect x="0" y="620" width="20" height="20" fill="#000b99"/><rect x="20" y="620" width="20" height="20" fill="#000999"/><rect x="40" y="620" width="20" height="20" fill="#000799"/><rect x="60" y="620" width="20" height="20" fill="#000599"/><rect x="80" y="620" width="20" height="20" fill="#000399"/><rect x="100" y="620" width="20" height="20" fill="#000199"/><rect x="120" y="620" width="20" height="20" fill="#000099"/><rect x="140" y="620" width="20" height="20" fill="#000099"/><rect x="160" y="620" width="20" height="20" fill="#000099"/><rect x="180" y="620" width="20" height="20" fill="#000099"/><rect x="200" y="620" width="20" height="20" fill="#000099"/><rect x="220" y="620" width="20" height="20" fill="#000099"/><rect x="240" y="620" width="20" height="20" fill="#000099"/><rect x="260" y="620" width="20" height="20" fill="#000099"/><rect x="280" y="620" width="20" height="20" fill="#060099"/><rect x="300" y="620" width="20" height="20" fill="#0c0099"/><rect x="320" y="620" width="20" height="20" fill="#130099"/><rect x="340" y="620" width="20" height="20" fill="#190099"/><rect x="360" y="620" width="20" height="20" fill="#200099"/><rect x="380" y="620" width="20" height="20" fill="#260099"/><rect x="400" y="620" width="20" height="20" fill="#2c0099"/><rect x="420" y="620" width="20" height="20" fill="#320099"/><rect x="440" y="620" width="20" height="20" fill="#380099"/><rect x="460" y="620" width="20" height="20" fill="#3e0099"/><rect x="480" y="620" width="20" height="20" fill="#440099"/><rect x="500" y="620" width="20" height="20" fill="#4a0099"/><rect x="520" y="620" width="20" height="20" fill="#500099"/><rect x="540" y="620" width="20" height="20" fill="#560099"/><rect x="560" y="620" width="20" height="20" fill="#5c0099"/><rect x="580" y="620" width="20" height="20" fill="#620099"/><rect x="600" y="620" width="20" height="20" fill="#680099"/><rect x="620" y="620" width="20" height="20" fill="#6e0099"/><rect x="640" y="620" width="20" height="20" fill="#740099"/><rect x="660" y="620" width="20" height="20" fill="#7a0099"/><rect x="680" y="620" width="20" height="20" fill="#800099"/><rect x="700" y="620" width="20" height="20" fill="#860099"/><rect x="720" y="620" width="20" height="20" fill="#8c0099"/><rect x="740" y="620" width="20" height="20" fill="#920099"/><rect x="760" y="620" width="20" height="20" fill="#980099"/><rect x="780" y="620" width="20" height="20" fill="#990094"/><rect x="800" y="620" width="20" height="20" fill="#99008f"/><rect x="820" y="620" width="20" height="20" fill="#99008a"/><rect x="840" y="620" width="20" height="20" fill="#990085"/><rect x="860" y="620" width="20" height="20" fill="#990080"/><rect x="0" y="640" width="20" height="20" fill="#000899"/><rect x="20" y="640" width="20" height="20" fill="#000799"/><rect x="40" y="640" width="20" height="20" fill="#000599"/><rect x="60" y="640" width="20" height="20" fill="#000399"/><rect x="80" y="640" width="20" height="20" fill="#000199"/><rect x="100" y="640" width="20" height="20" fill="#000099"/><rect x="120" y="640" width="20" height="20" fill="#000099"/><rect x="140" y="640" width="20" height="20" fill="#000099"/><rect x="160" y="640" width="20" height="20" fill="#000099"/><rect x="180" y="640" width="20" height="20" fill="#000099"/><rect x="200" y="640" width="20" height="20" fill="#000099"/><rect x="220" y="640" width="20" height="20" fill="#000099"/><rect x="240" y="640" width="20" height="20" fill="#000099"/><rect x="260" y="640" width="20" height="20" fill="#000099"/><rect x="280" y="640" width="20" height="20" fill="#040099"/><rect x="300" y="640" width="20" height="20" fill="#0b0099"/><rect x="320" y="640" width="20" height="20" fill="#110099"/><rect x="340" y="640" width="20" height="20" fill="#180099"/><rect x="360" y="640" width="20" height="20" fill="#1e0099"/><rect x="380" y="640" width="20" height="20" fill="#240099"/><rect x="400" y="640" width="20" height="20" fill="#2a0099"/><rect x="420" y="640" width="20" height="20" fill="#2f0099"/><rect x="440" y="640" width="20" height="20" fill="#350099"/><rect x="460" y="640" width="20" height="20" fill="#3b0099"/><rect x="480" y="640" width="20" height="20" fill="#410099"/><rect x="500" y="640" width="20" height="20" fill="#470099"/><rect x="520" y="640" width="20" height="20" fill="#4d0099"/><rect x="540" y="640" width="20" height="20" fill="#520099"/><rect x="560" y="640" width="20" height="20" fill="#580099"/><rect x="580" y="640" width="20" height="20" fill="#5e0099"/><rect x="600" y="640" width="20" height="20" fill="#640099"/><rect x="620" y="640" width="20" height="20" fill="#690099"/><rect x="640" y="640" width="20" height="20" fill="#6f0099"/><rect x="660" y="640" width="20" height="20" fill="#750099"/><rect x="680" y="640" width="20" height="20" fill="#7b0099"/><rect x="700" y="640" width="20" height="20" fill="#800099"/><rect x="720" y="640" width="20" height="20" fill="#860099"/><rect x="740" y="640" width="20" height="20" fill="#8c0099"/><rect x="760" y="640" width="20" height="20" fill="#920099"/><rect x="780" y="640" width="20" height="20" fill="#980099"/><rect x="800" y="640" width="20" height="20" fill="#990094"/><rect x="820" y="640" width="20" height="20" fill="#99008f"/><rect x="840" y="640" width="20" height="20" fill="#99008a"/><rect x="860" y="640" width="20" height="20" fill="#990085"/><rect x="0" y="660" width="20" height="20" fill="#000899"/><rect x="20" y="660" width="20" height="20" fill="#000699"/><rect x="40" y="660" width="20" height="20" fill="#000499"/><rect x="60" y="660" width="20" height="20" fill="#000299"/><rect x="80" y="660" width="20" height="20" fill="#000099"/><rect x="100" y="660" width="20" height="20" fill="#000099"/><rect x="120" y="660" width="20" height="20" fill="#000099"/><rect x="140" y="660" width="20" height="20" fill="#000099"/><rect x="160" y="660" width="20" height="20" fill="#000099"/><rect x="180" y="660" width="20" height="20" fill="#000099"/><rect x="200" y="660" width="20" height="20" fill="#000099"/><rect x="220" y="660" width="20" height="20" fill="#000099"/><rect x="240" y="660" width="20" height="20" fill="#000099"/><rect x="260" y="660" width="20" height="20" fill="#000099"/><rect x="280" y="660" width="20" height="20" fill="#040099"/><rect x="300" y="660" width="20" height="20" fill="#0b0099"/><rect x="320" y="660" width="20" height="20" fill="#110099"/><rect x="340" y="660" width="20" height="20" fill="#170099"/><rect x="360" y="660" width="20" height="20" fill="#1d0099"/><rect x="380" y="660" width="20" height="20" fill="#230099"/><rect x="400" y="660" width="20" height="20" fill="#290099"/><rect x="420" y="660" width="20" height="20" fill="#2f0099"/><rect x="440" y="660" width="20" height="20" fill="#340099"/><rect x="460" y="660" width="20" height="20" fill="#3a0099"/><rect x="480" y="660" width="20" height="20" fill="#400099"/><rect x="500" y="660" width="20" height="20" fill="#460099"/><rect x="520" y="660" width="20" height="20" fill="#4b0099"/><rect x="540" y="660" width="20" height="20" fill="#510099"/><rect x="560" y="660" width="20" height="20" fill="#570099"/><rect x="580" y="660" width="20" height="20" fill="#5c0099"/><rect x="600" y="660" width="20" height="20" fill="#620099"/><rect x="620" y="660" width="20" height="20" fill="#680099"/><rect x="640" y="660" width="20" height="20" fill="#6d0099"/><rect x="660" y="660" width="20" height="20" fill="#730099"/><rect x="680" y="660" width="20" height="20" fill="#790099"/><rect x="700" y="660" width="20" height="20" fill="#7f0099"/><rect x="720" y="660" width="20" height="20" fill="#840099"/><rect x="740" y="660" width="20" height="20" fill="#8a0099"/><rect x="760" y="660" width="20" height="20" fill="#900099"/><rect x="780" y="660" width="20" height="20" fill="#960099"/><rect x="800" y="660" width="20" height="20" fill="#990097"/><rect x="820" y="660" width="20" height="20" fill="#990091"/><rect x="840" y="660" width="20" height="20" fill="#99008c"/><rect x="860" y="660" width="20" height="20" fill="#990087"/></g></g></svg>
<canvas id="cie" width="865" height="666" style="position:absolute;left:1679px;top:291px"></canvas>
<script>(function(){var c=document.getElementById("cie");if(!c||!c.getContext)return;var x=c.getContext("2d");var W=c.width,H=c.height;
var P=[370.1,644.8,370.0,644.7,369.9,644.7,369.8,644.8,369.7,644.9,369.5,644.9,369.2,644.9,369.0,644.9,368.8,645.0,368.7,645.2,368.6,645.4,368.3,645.4,368.0,645.5,367.6,645.4,367.1,645.4,366.7,645.4,366.3,645.4,365.8,645.3,365.2,645.2,364.5,644.9,363.4,644.3,362.1,643.5,360.6,642.5,358.8,641.2,356.9,639.7,354.6,638.0,352.0,635.9,349.0,633.6,345.8,630.9,342.2,627.8,338.3,624.5,334.0,620.9,329.2,616.9,323.8,612.5,317.9,607.6,311.4,602.3,304.4,596.6,296.9,590.3,288.8,583.4,279.9,575.6,270.4,566.8,260.4,557.2,249.4,546.0,237.1,532.3,223.1,515.8,207.6,496.4,191.3,474.7,174.1,450.5,156.2,423.7,137.8,394.7,119.3,364.2,101.0,332.8,83.4,300.9,67.3,269.1,53.0,238.3,40.6,208.9,29.8,181.4,20.9,156.3,13.8,133.9,8.6,114.2,5.0,97.0,2.8,82.2,2.0,69.5,2.4,58.6,4.0,49.1,6.7,41.0,10.4,34.3,15.1,28.8,20.5,24.6,26.6,21.4,33.3,19.2,40.4,17.7,48.0,16.8,55.8,16.2,64.0,15.9,72.1,15.8,80.3,15.8,88.5,15.9,96.9,16.2,105.4,16.5,114.2,17.0,123.2,17.6,132.5,18.3,142.1,19.1,152.1,20.0,162.4,20.9,173.1,22.0,184.3,23.1,195.9,24.3,208.0,25.6,220.6,27.0,233.8,28.4,247.4,29.9,261.7,31.5,276.5,33.2,291.9,34.9,307.9,36.8,324.6,38.7,341.8,40.6,359.6,42.7,378.0,44.8,397.0,47.0,416.5,49.2,436.5,51.5,456.9,53.8,477.7,56.2,498.8,58.6,519.9,61.0,540.8,63.4,561.2,65.7,581.5,68.1,601.6,70.4,621.5,72.6,640.5,74.8,658.7,76.9,676.0,78.8,692.6,80.7,708.2,82.5,723.0,84.2,736.8,85.8,749.6,87.3,761.6,88.6,772.7,89.9,783.1,91.1,792.8,92.2,801.9,93.2,810.6,94.2,818.7,95.2,826.4,96.0,833.5,96.9,840.1,97.6,846.3,98.3,851.9,99.0,856.9,99.5,861.3,100.0,865.3,100.5,868.9,100.9,872.2,101.3,875.2,101.6,877.9,101.9,880.2,102.2,882.1,102.4,883.7,102.6,885.1,102.8,886.6,102.9,887.9,103.1,889.0,103.2,890.1,103.4,891.2,103.5,892.3,103.6,893.3,103.7,894.4,103.8,895.3,104.0,896.1,104.0,896.7,104.1,897.1,104.2,897.5,104.2,897.8,104.2,898.0,104.3,898.2,104.3,898.3,104.3];
var img=x.createImageData(W,H),D=img.data;
function ga(t){return Math.pow(t,0.909);}
for(var j=0;j<H;j++){var v=(956.80-(307.2+(291+j+0.5-306.7)/0.99636))/1107.00;if(v<0.002)v=0.002;for(var i=0;i<W;i++){var u=(1679+i+0.5-1679.00)/1441.00;
var d=6*u-16*v+12,xx=9*u/d,yy=4*v/d,X=xx/yy,Z=(1-xx-yy)/yy;
var r=3.2406*X-1.5372-0.4986*Z,g=-0.9689*X+1.8758+0.0415*Z,b=0.0557*X-0.2040+1.0570*Z;
var out=(r<0||g<0||b<0);if(r<0)r=0;if(g<0)g=0;if(b<0)b=0;var m=Math.max(r,g,b);if(!(m>0))m=1;var k=out?0.6:1;
var p=(j*W+i)*4;D[p]=255*k*ga(r/m);D[p+1]=255*k*ga(g/m);D[p+2]=255*k*ga(b/m);D[p+3]=255;}}
var t=document.createElement("canvas");t.width=W;t.height=H;t.getContext("2d").putImageData(img,0,0);
x.beginPath();x.moveTo(P[0],P[1]);for(var q=2;q<P.length;q+=2)x.lineTo(P[q],P[q+1]);x.closePath();x.save();x.clip();x.drawImage(t,0,0);x.restore();
})();</script>
<svg style="position:absolute;left:1677px;top:289px" width="869" height="670"><rect x="2" y="2" width="865" height="666" fill="none" stroke="#9c9c9c" stroke-width="2.2"/></svg>
<svg style="position:absolute;left:1640px;top:280px" width="920" height="700"><line x1="31.0" y1="676.8" x2="39.0" y2="676.8" stroke="#ddd" stroke-width="2"/><line x1="39.0" y1="677.0" x2="39.0" y2="685.0" stroke="#ddd" stroke-width="2"/><line x1="31.0" y1="621.4" x2="39.0" y2="621.4" stroke="#ddd" stroke-width="2"/><line x1="111.0" y1="677.0" x2="111.0" y2="685.0" stroke="#ddd" stroke-width="2"/><line x1="31.0" y1="566.1" x2="39.0" y2="566.1" stroke="#ddd" stroke-width="2"/><line x1="183.1" y1="677.0" x2="183.1" y2="685.0" stroke="#ddd" stroke-width="2"/><line x1="31.0" y1="510.8" x2="39.0" y2="510.8" stroke="#ddd" stroke-width="2"/><line x1="255.2" y1="677.0" x2="255.2" y2="685.0" stroke="#ddd" stroke-width="2"/><line x1="31.0" y1="455.4" x2="39.0" y2="455.4" stroke="#ddd" stroke-width="2"/><line x1="327.2" y1="677.0" x2="327.2" y2="685.0" stroke="#ddd" stroke-width="2"/><line x1="31.0" y1="400.0" x2="39.0" y2="400.0" stroke="#ddd" stroke-width="2"/><line x1="399.2" y1="677.0" x2="399.2" y2="685.0" stroke="#ddd" stroke-width="2"/><line x1="31.0" y1="344.7" x2="39.0" y2="344.7" stroke="#ddd" stroke-width="2"/><line x1="471.3" y1="677.0" x2="471.3" y2="685.0" stroke="#ddd" stroke-width="2"/><line x1="31.0" y1="289.3" x2="39.0" y2="289.3" stroke="#ddd" stroke-width="2"/><line x1="543.3" y1="677.0" x2="543.3" y2="685.0" stroke="#ddd" stroke-width="2"/><line x1="31.0" y1="234.0" x2="39.0" y2="234.0" stroke="#ddd" stroke-width="2"/><line x1="615.4" y1="677.0" x2="615.4" y2="685.0" stroke="#ddd" stroke-width="2"/><line x1="31.0" y1="178.6" x2="39.0" y2="178.6" stroke="#ddd" stroke-width="2"/><line x1="687.4" y1="677.0" x2="687.4" y2="685.0" stroke="#ddd" stroke-width="2"/><line x1="31.0" y1="123.3" x2="39.0" y2="123.3" stroke="#ddd" stroke-width="2"/><line x1="759.5" y1="677.0" x2="759.5" y2="685.0" stroke="#ddd" stroke-width="2"/><line x1="31.0" y1="67.9" x2="39.0" y2="67.9" stroke="#ddd" stroke-width="2"/><line x1="831.6" y1="677.0" x2="831.6" y2="685.0" stroke="#ddd" stroke-width="2"/></svg>
<div class="t" style="left:1660.5px;top:950.1px;font-size:18.00px;color:#cfcfcf;transform:scaleX(0.9500);">0</div>
<div class="t" style="left:1674.2px;top:970.4px;font-size:18.00px;color:#cfcfcf;transform:scaleX(0.9500);">0</div>
<div class="t" style="left:1636.7px;top:894.7px;font-size:18.00px;color:#cfcfcf;transform:scaleX(0.9500);">0.05</div>
<div class="t" style="left:1734.4px;top:970.4px;font-size:18.00px;color:#cfcfcf;transform:scaleX(0.9500);">0.05</div>
<div class="t" style="left:1646.2px;top:839.4px;font-size:18.00px;color:#cfcfcf;transform:scaleX(0.9500);">0.1</div>
<div class="t" style="left:1811.2px;top:970.4px;font-size:18.00px;color:#cfcfcf;transform:scaleX(0.9500);">0.1</div>
<div class="t" style="left:1636.7px;top:784.0px;font-size:18.00px;color:#cfcfcf;transform:scaleX(0.9500);">0.15</div>
<div class="t" style="left:1878.5px;top:970.4px;font-size:18.00px;color:#cfcfcf;transform:scaleX(0.9500);">0.15</div>
<div class="t" style="left:1646.2px;top:728.7px;font-size:18.00px;color:#cfcfcf;transform:scaleX(0.9500);">0.2</div>
<div class="t" style="left:1955.3px;top:970.4px;font-size:18.00px;color:#cfcfcf;transform:scaleX(0.9500);">0.2</div>
<div class="t" style="left:1636.7px;top:673.3px;font-size:18.00px;color:#cfcfcf;transform:scaleX(0.9500);">0.25</div>
<div class="t" style="left:2022.6px;top:970.4px;font-size:18.00px;color:#cfcfcf;transform:scaleX(0.9500);">0.25</div>
<div class="t" style="left:1646.2px;top:618.0px;font-size:18.00px;color:#cfcfcf;transform:scaleX(0.9500);">0.3</div>
<div class="t" style="left:2099.4px;top:970.4px;font-size:18.00px;color:#cfcfcf;transform:scaleX(0.9500);">0.3</div>
<div class="t" style="left:1636.7px;top:562.6px;font-size:18.00px;color:#cfcfcf;transform:scaleX(0.9500);">0.35</div>
<div class="t" style="left:2166.7px;top:970.4px;font-size:18.00px;color:#cfcfcf;transform:scaleX(0.9500);">0.35</div>
<div class="t" style="left:1646.2px;top:507.3px;font-size:18.00px;color:#cfcfcf;transform:scaleX(0.9500);">0.4</div>
<div class="t" style="left:2243.5px;top:970.4px;font-size:18.00px;color:#cfcfcf;transform:scaleX(0.9500);">0.4</div>
<div class="t" style="left:1636.7px;top:451.9px;font-size:18.00px;color:#cfcfcf;transform:scaleX(0.9500);">0.45</div>
<div class="t" style="left:2310.8px;top:970.4px;font-size:18.00px;color:#cfcfcf;transform:scaleX(0.9500);">0.45</div>
<div class="t" style="left:1646.2px;top:396.6px;font-size:18.00px;color:#cfcfcf;transform:scaleX(0.9500);">0.5</div>
<div class="t" style="left:2387.6px;top:970.4px;font-size:18.00px;color:#cfcfcf;transform:scaleX(0.9500);">0.5</div>
<div class="t" style="left:1636.7px;top:341.2px;font-size:18.00px;color:#cfcfcf;transform:scaleX(0.9500);">0.55</div>
<div class="t" style="left:2454.9px;top:970.4px;font-size:18.00px;color:#cfcfcf;transform:scaleX(0.9500);">0.55</div>
<svg style="position:absolute;left:1679px;top:291px" width="865" height="666"><rect x="170.4" y="31.4" width="17" height="17" fill="none" stroke="#fff" stroke-width="2.2"/><rect x="203.2" y="64.4" width="17" height="17" fill="none" stroke="#fff" stroke-width="2.2"/><rect x="256.8" y="53.4" width="17" height="17" fill="none" stroke="#fff" stroke-width="2.2"/><rect x="284.3" y="42.4" width="17" height="17" fill="none" stroke="#fff" stroke-width="2.2"/><rect x="321.4" y="48.1" width="17" height="17" fill="none" stroke="#fff" stroke-width="2.2"/><rect x="363.8" y="57.5" width="17" height="17" fill="none" stroke="#fff" stroke-width="2.2"/><rect x="423.0" y="61.3" width="17" height="17" fill="none" stroke="#fff" stroke-width="2.2"/><rect x="640.6" y="74.7" width="17" height="17" fill="none" stroke="#fff" stroke-width="2.2"/><rect x="253.4" y="82.7" width="17" height="17" fill="none" stroke="#fff" stroke-width="2.2"/><rect x="341.4" y="101.5" width="17" height="17" fill="none" stroke="#fff" stroke-width="2.2"/><rect x="326.9" y="110.4" width="17" height="17" fill="none" stroke="#fff" stroke-width="2.2"/><rect x="531.5" y="103.3" width="17" height="17" fill="none" stroke="#fff" stroke-width="2.2"/><rect x="448.6" y="119.2" width="17" height="17" fill="none" stroke="#fff" stroke-width="2.2"/><rect x="212.3" y="125.3" width="17" height="17" fill="none" stroke="#fff" stroke-width="2.2"/><rect x="190.3" y="151.2" width="17" height="17" fill="none" stroke="#fff" stroke-width="2.2"/><rect x="197.9" y="193.1" width="17" height="17" fill="none" stroke="#fff" stroke-width="2.2"/><rect x="244.4" y="189.7" width="17" height="17" fill="none" stroke="#fff" stroke-width="2.2"/><rect x="271.5" y="197.3" width="17" height="17" fill="none" stroke="#fff" stroke-width="2.2"/><rect x="404.5" y="182.6" width="17" height="17" fill="none" stroke="#fff" stroke-width="2.2"/><rect x="319.4" y="221.5" width="17" height="17" fill="none" stroke="#fff" stroke-width="2.2"/><rect x="247.6" y="261.4" width="17" height="17" fill="none" stroke="#fff" stroke-width="2.2"/><rect x="430.2" y="289.7" width="17" height="17" fill="none" stroke="#fff" stroke-width="2.2"/><rect x="247.4" y="330.2" width="17" height="17" fill="none" stroke="#fff" stroke-width="2.2"/><rect x="244.3" y="480.7" width="17" height="17" fill="none" stroke="#fff" stroke-width="2.2"/><rect x="275.4" y="136.3" width="17" height="17" fill="none" stroke="#000" stroke-width="2.6"/><circle cx="182.3" cy="39.9" r="5.6" fill="#22ee22" stroke="#111" stroke-width="1.6"/><circle cx="213.7" cy="71.5" r="5.6" fill="#4a8a4a" stroke="#111" stroke-width="1.6"/><circle cx="267.4" cy="60.5" r="5.6" fill="#a0b84a" stroke="#111" stroke-width="1.6"/><circle cx="291.6" cy="49.5" r="5.6" fill="#ffff00" stroke="#111" stroke-width="1.6"/><circle cx="331.3" cy="56.6" r="5.6" fill="#e8c22a" stroke="#111" stroke-width="1.6"/><circle cx="374.1" cy="64.2" r="5.6" fill="#e8a030" stroke="#111" stroke-width="1.6"/><circle cx="433.0" cy="69.8" r="5.6" fill="#d87830" stroke="#111" stroke-width="1.6"/><circle cx="654.7" cy="80.6" r="5.6" fill="#ff2020" stroke="#111" stroke-width="1.6"/><circle cx="261.4" cy="87.5" r="5.6" fill="#586848" stroke="#111" stroke-width="1.6"/><circle cx="352.1" cy="108.4" r="5.6" fill="#6a5040" stroke="#111" stroke-width="1.6"/><circle cx="339.3" cy="117.8" r="5.6" fill="#c09080" stroke="#111" stroke-width="1.6"/><circle cx="546.7" cy="110.3" r="5.6" fill="#b03038" stroke="#111" stroke-width="1.6"/><circle cx="462.2" cy="126.7" r="5.6" fill="#c05060" stroke="#111" stroke-width="1.6"/><circle cx="224.7" cy="130.6" r="5.6" fill="#60b0a0" stroke="#111" stroke-width="1.6"/><circle cx="202.3" cy="158.1" r="5.6" fill="#20f0f0" stroke="#111" stroke-width="1.6"/><circle cx="208.2" cy="200.3" r="5.6" fill="#0a88a0" stroke="#111" stroke-width="1.6"/><circle cx="254.5" cy="198.2" r="5.6" fill="#5a78a0" stroke="#111" stroke-width="1.6"/><circle cx="285.7" cy="204.0" r="5.6" fill="#8080b0" stroke="#111" stroke-width="1.6"/><circle cx="418.4" cy="191.3" r="5.6" fill="#b85090" stroke="#111" stroke-width="1.6"/><circle cx="315.5" cy="242.4" r="5.6" fill="#5a3a6a" stroke="#111" stroke-width="1.6"/><circle cx="260.3" cy="273.8" r="5.6" fill="#4a5aa0" stroke="#111" stroke-width="1.6"/><circle cx="443.8" cy="302.8" r="5.6" fill="#ff20ff" stroke="#111" stroke-width="1.6"/><circle cx="263.5" cy="349.4" r="5.6" fill="#3a3a90" stroke="#111" stroke-width="1.6"/><circle cx="259.5" cy="506.1" r="5.6" fill="#2020ff" stroke="#111" stroke-width="1.6"/><circle cx="285.8" cy="143.6" r="5.8" fill="#505050" stroke="#1a1a1a" stroke-width="1.3"/><circle cx="287.2" cy="143.6" r="5.8" fill="#6a6a6a" stroke="#1a1a1a" stroke-width="1.3"/><circle cx="289.2" cy="143.6" r="5.8" fill="#a0a0a0" stroke="#1a1a1a" stroke-width="1.3"/><circle cx="573.5" cy="664.8" r="6.2" fill="#000"/></svg>
<div style="position:absolute;left:2264.0px;top:720.0px;width:276.0px;height:184.0px;background:#1e1e1e"></div>
<svg style="position:absolute;left:2267px;top:723px" width="269" height="177">
<defs>
<linearGradient id="ib" x1="0" y1="0" x2="1" y2="1"><stop offset="0" stop-color="#b8ff00"/><stop offset="0.45" stop-color="#ffff00"/><stop offset="1" stop-color="#ffb000"/></linearGradient>
<linearGradient id="id" x1="0" y1="0" x2="1" y2="1"><stop offset="0" stop-color="#669600"/><stop offset="0.5" stop-color="#979400"/><stop offset="1" stop-color="#8a6600"/></linearGradient>
</defs>
<rect x="0" y="0" width="269" height="177" fill="url(#ib)"/>
<path d="M0,0 L269,0 L269,157 L0,18.4Z" fill="url(#id)"/>
<rect x="1" y="1" width="267" height="175" fill="none" stroke="#9a9a9a" stroke-width="2.5"/>
<rect x="125" y="78.3" width="18" height="18" fill="none" stroke="#fff" stroke-width="2.2"/>
<circle cx="137.4" cy="72.6" r="6" fill="#ffff00" stroke="#111" stroke-width="1.6"/>
</svg>
<div style="position:absolute;left:2199.0px;top:913.0px;width:341.0px;height:37.0px;background:#303030"></div>
<div class="t" style="left:2198.0px;top:917.9px;font-size:28.00px;color:#eee;transform:scaleX(0.9621);">RGB Triplet: 255, 255, 0</div>
<div class="t" style="left:369.0px;top:1013.5px;font-size:40.70px;color:#f0f0f0;transform:scaleX(0.9757);">Avg dE2000: 1.29</div>
<div class="t" style="left:362.0px;top:1068.2px;font-size:40.70px;color:#f0f0f0;transform:scaleX(0.9929);">Max dE2000: 2.96</div>
<div class="t" style="left:319.0px;top:1136.0px;font-size:37.80px;color:#f0f0f0;transform:scaleX(1.0816);">Current Reading</div>
<div class="t" style="left:321.0px;top:1187.9px;font-size:32.50px;color:#f0f0f0;transform:scaleX(1.0395);">x: 0.4201</div>
<div class="t" style="left:533.0px;top:1187.9px;font-size:32.50px;color:#f0f0f0;transform:scaleX(1.0470);">y: 0.5095</div>
<div class="t" style="left:321.0px;top:1242.9px;font-size:32.50px;color:#f0f0f0;transform:scaleX(1.0307);">fL: 158.27</div>
<div class="t" style="left:319.0px;top:1288.5px;font-size:32.50px;color:#f0f0f0;transform:scaleX(1.1021);">cd/m²: 542.28</div>
<div style="position:absolute;left:735.0px;top:1024.0px;width:1825.0px;height:306.0px;background:#000"></div>
<div style="position:absolute;left:736.0px;top:1025.0px;width:1821.0px;height:34.0px;background:linear-gradient(#303030 0%,#2c2c2c 49%,#171717 51%,#121212 100%)"></div>
<div style="position:absolute;left:736.0px;top:1059.0px;width:1821.0px;height:31.5px;background:#3f3f3f"></div>
<div style="position:absolute;left:736.0px;top:1090.5px;width:1821.0px;height:31.5px;background:#828282"></div>
<div style="position:absolute;left:736.0px;top:1122.0px;width:1821.0px;height:31.5px;background:#3f3f3f"></div>
<div style="position:absolute;left:736.0px;top:1153.5px;width:1821.0px;height:31.5px;background:#828282"></div>
<div style="position:absolute;left:736.0px;top:1185.0px;width:1821.0px;height:31.5px;background:#3f3f3f"></div>
<div style="position:absolute;left:736.0px;top:1216.5px;width:1821.0px;height:31.5px;background:#828282"></div>
<div style="position:absolute;left:736.0px;top:1248.0px;width:1821.0px;height:31.5px;background:#3f3f3f"></div>
<div style="position:absolute;left:736.0px;top:1279.5px;width:1821.0px;height:31.5px;background:#828282"></div>
<div style="position:absolute;left:1618.0px;top:1154.5px;width:116.0px;height:30.0px;background:#f0f0f0;box-shadow:inset 0 0 0 1px #c8c8c8"></div>
<div class="t" style="left:967.0px;top:1032.9px;font-size:19.00px;color:#f8f8f8;transform:scaleX(1.3350);-webkit-text-stroke:0.5px #f8f8f8;">White</div>
<div class="t" style="left:1052.0px;top:1032.9px;font-size:19.00px;color:#f8f8f8;transform:scaleX(1.2100);-webkit-text-stroke:0.5px #f8f8f8;">Gray 80</div>
<div class="t" style="left:1147.6px;top:1032.9px;font-size:19.00px;color:#f8f8f8;transform:scaleX(1.2100);-webkit-text-stroke:0.5px #f8f8f8;">Gray 65</div>
<div class="t" style="left:1243.0px;top:1032.9px;font-size:19.00px;color:#f8f8f8;transform:scaleX(1.2100);-webkit-text-stroke:0.5px #f8f8f8;">Gray 50</div>
<div class="t" style="left:1339.4px;top:1032.9px;font-size:19.00px;color:#f8f8f8;transform:scaleX(1.2100);-webkit-text-stroke:0.5px #f8f8f8;">Gray 35</div>
<div class="t" style="left:1435.7px;top:1032.9px;font-size:19.00px;color:#f8f8f8;transform:scaleX(1.2100);-webkit-text-stroke:0.5px #f8f8f8;">Black</div>
<div class="t" style="left:1511.5px;top:1032.9px;font-size:19.00px;color:#f8f8f8;transform:scaleX(1.2100);-webkit-text-stroke:0.5px #f8f8f8;">Dark Skin</div>
<div class="t" style="left:1625.6px;top:1032.9px;font-size:19.00px;color:#f8f8f8;transform:scaleX(1.2100);-webkit-text-stroke:0.5px #f8f8f8;">Light Skin</div>
<div class="t" style="left:1741.4px;top:1032.9px;font-size:19.00px;color:#f8f8f8;transform:scaleX(1.2100);-webkit-text-stroke:0.5px #f8f8f8;">Blue Sky</div>
<div class="t" style="left:1844.6px;top:1032.9px;font-size:19.00px;color:#f8f8f8;transform:scaleX(1.2100);-webkit-text-stroke:0.5px #f8f8f8;">Foliage</div>
<div class="t" style="left:1933.7px;top:1032.9px;font-size:19.00px;color:#f8f8f8;transform:scaleX(1.2100);-webkit-text-stroke:0.5px #f8f8f8;">Blue Flower</div>
<div class="t" style="left:2074.6px;top:1032.9px;font-size:19.00px;color:#f8f8f8;transform:scaleX(1.2100);-webkit-text-stroke:0.5px #f8f8f8;">Bluish Green</div>
<div class="t" style="left:2224.7px;top:1032.9px;font-size:19.00px;color:#f8f8f8;transform:scaleX(1.2100);-webkit-text-stroke:0.5px #f8f8f8;">Orange</div>
<div class="t" style="left:2316.3px;top:1032.9px;font-size:19.00px;color:#f8f8f8;transform:scaleX(1.2100);-webkit-text-stroke:0.5px #f8f8f8;">Purplish Blue</div>
<div class="t" style="left:2470.7px;top:1032.9px;font-size:19.00px;color:#f8f8f8;transform:scaleX(1.2100);-webkit-text-stroke:0.5px #f8f8f8;">Moderate Red</div>
<div class="t" style="left:757.0px;top:1065.6px;font-size:20.50px;color:#f4f4f4;font-weight:bold;transform:scaleX(1.2200);">x: CIE31</div>
<div class="t" style="left:962.0px;top:1065.9px;font-size:20.20px;color:#f4f4f4;transform:scaleX(1.2100);-webkit-text-stroke:0.25px #f4f4f4;">0.31</div>
<div class="t" style="left:1052.0px;top:1065.9px;font-size:20.20px;color:#f4f4f4;transform:scaleX(1.2100);-webkit-text-stroke:0.25px #f4f4f4;">0.32</div>
<div class="t" style="left:1147.6px;top:1065.9px;font-size:20.20px;color:#f4f4f4;transform:scaleX(1.2100);-webkit-text-stroke:0.25px #f4f4f4;">0.32</div>
<div class="t" style="left:1243.0px;top:1065.9px;font-size:20.20px;color:#f4f4f4;transform:scaleX(1.2100);-webkit-text-stroke:0.25px #f4f4f4;">0.32</div>
<div class="t" style="left:1339.4px;top:1065.9px;font-size:20.20px;color:#f4f4f4;transform:scaleX(1.2100);-webkit-text-stroke:0.25px #f4f4f4;">0.32</div>
<div class="t" style="left:1435.7px;top:1065.9px;font-size:20.20px;color:#f4f4f4;transform:scaleX(1.2100);-webkit-text-stroke:0.25px #f4f4f4;">0.25</div>
<div class="t" style="left:1511.5px;top:1065.9px;font-size:20.20px;color:#f4f4f4;transform:scaleX(1.2100);-webkit-text-stroke:0.25px #f4f4f4;">0.40</div>
<div class="t" style="left:1625.6px;top:1065.9px;font-size:20.20px;color:#f4f4f4;transform:scaleX(1.2100);-webkit-text-stroke:0.25px #f4f4f4;">0.38</div>
<div class="t" style="left:1741.4px;top:1065.9px;font-size:20.20px;color:#f4f4f4;transform:scaleX(1.2100);-webkit-text-stroke:0.25px #f4f4f4;">0.25</div>
<div class="t" style="left:1844.6px;top:1065.9px;font-size:20.20px;color:#f4f4f4;transform:scaleX(1.2100);-webkit-text-stroke:0.25px #f4f4f4;">0.34</div>
<div class="t" style="left:1933.7px;top:1065.9px;font-size:20.20px;color:#f4f4f4;transform:scaleX(1.2100);-webkit-text-stroke:0.25px #f4f4f4;">0.27</div>
<div class="t" style="left:2074.6px;top:1065.9px;font-size:20.20px;color:#f4f4f4;transform:scaleX(1.2100);-webkit-text-stroke:0.25px #f4f4f4;">0.27</div>
<div class="t" style="left:2224.7px;top:1065.9px;font-size:20.20px;color:#f4f4f4;transform:scaleX(1.2100);-webkit-text-stroke:0.25px #f4f4f4;">0.52</div>
<div class="t" style="left:2316.3px;top:1065.9px;font-size:20.20px;color:#f4f4f4;transform:scaleX(1.2100);-webkit-text-stroke:0.25px #f4f4f4;">0.22</div>
<div class="t" style="left:2470.7px;top:1065.9px;font-size:20.20px;color:#f4f4f4;transform:scaleX(1.2100);-webkit-text-stroke:0.25px #f4f4f4;">0.47</div>
<div class="t" style="left:757.0px;top:1097.1px;font-size:20.50px;color:#f4f4f4;font-weight:bold;transform:scaleX(1.2200);">y: CIE31</div>
<div class="t" style="left:962.0px;top:1097.4px;font-size:20.20px;color:#f4f4f4;transform:scaleX(1.2100);-webkit-text-stroke:0.25px #f4f4f4;">0.33</div>
<div class="t" style="left:1052.0px;top:1097.4px;font-size:20.20px;color:#f4f4f4;transform:scaleX(1.2100);-webkit-text-stroke:0.25px #f4f4f4;">0.33</div>
<div class="t" style="left:1147.6px;top:1097.4px;font-size:20.20px;color:#f4f4f4;transform:scaleX(1.2100);-webkit-text-stroke:0.25px #f4f4f4;">0.33</div>
<div class="t" style="left:1243.0px;top:1097.4px;font-size:20.20px;color:#f4f4f4;transform:scaleX(1.2100);-webkit-text-stroke:0.25px #f4f4f4;">0.33</div>
<div class="t" style="left:1339.4px;top:1097.4px;font-size:20.20px;color:#f4f4f4;transform:scaleX(1.2100);-webkit-text-stroke:0.25px #f4f4f4;">0.33</div>
<div class="t" style="left:1435.7px;top:1097.4px;font-size:20.20px;color:#f4f4f4;transform:scaleX(1.2100);-webkit-text-stroke:0.25px #f4f4f4;">0.00</div>
<div class="t" style="left:1511.5px;top:1097.4px;font-size:20.20px;color:#f4f4f4;transform:scaleX(1.2100);-webkit-text-stroke:0.25px #f4f4f4;">0.37</div>
<div class="t" style="left:1625.6px;top:1097.4px;font-size:20.20px;color:#f4f4f4;transform:scaleX(1.2100);-webkit-text-stroke:0.25px #f4f4f4;">0.36</div>
<div class="t" style="left:1741.4px;top:1097.4px;font-size:20.20px;color:#f4f4f4;transform:scaleX(1.2100);-webkit-text-stroke:0.25px #f4f4f4;">0.27</div>
<div class="t" style="left:1844.6px;top:1097.4px;font-size:20.20px;color:#f4f4f4;transform:scaleX(1.2100);-webkit-text-stroke:0.25px #f4f4f4;">0.43</div>
<div class="t" style="left:1933.7px;top:1097.4px;font-size:20.20px;color:#f4f4f4;transform:scaleX(1.2100);-webkit-text-stroke:0.25px #f4f4f4;">0.25</div>
<div class="t" style="left:2074.6px;top:1097.4px;font-size:20.20px;color:#f4f4f4;transform:scaleX(1.2100);-webkit-text-stroke:0.25px #f4f4f4;">0.37</div>
<div class="t" style="left:2224.7px;top:1097.4px;font-size:20.20px;color:#f4f4f4;transform:scaleX(1.2100);-webkit-text-stroke:0.25px #f4f4f4;">0.41</div>
<div class="t" style="left:2316.3px;top:1097.4px;font-size:20.20px;color:#f4f4f4;transform:scaleX(1.2100);-webkit-text-stroke:0.25px #f4f4f4;">0.19</div>
<div class="t" style="left:2470.7px;top:1097.4px;font-size:20.20px;color:#f4f4f4;transform:scaleX(1.2100);-webkit-text-stroke:0.25px #f4f4f4;">0.31</div>
<div class="t" style="left:757.0px;top:1128.6px;font-size:20.50px;color:#f4f4f4;font-weight:bold;transform:scaleX(1.2200);">Y</div>
<div class="t" style="left:962.0px;top:1128.9px;font-size:20.20px;color:#f4f4f4;transform:scaleX(1.2100);-webkit-text-stroke:0.25px #f4f4f4;">574.92</div>
<div class="t" style="left:1052.0px;top:1128.9px;font-size:20.20px;color:#f4f4f4;transform:scaleX(1.2100);-webkit-text-stroke:0.25px #f4f4f4;">454.27</div>
<div class="t" style="left:1147.6px;top:1128.9px;font-size:20.20px;color:#f4f4f4;transform:scaleX(1.2100);-webkit-text-stroke:0.25px #f4f4f4;">366.71</div>
<div class="t" style="left:1243.0px;top:1128.9px;font-size:20.20px;color:#f4f4f4;transform:scaleX(1.2100);-webkit-text-stroke:0.25px #f4f4f4;">281.88</div>
<div class="t" style="left:1339.4px;top:1128.9px;font-size:20.20px;color:#f4f4f4;transform:scaleX(1.2100);-webkit-text-stroke:0.25px #f4f4f4;">195.31</div>
<div class="t" style="left:1435.7px;top:1128.9px;font-size:20.20px;color:#f4f4f4;transform:scaleX(1.2100);-webkit-text-stroke:0.25px #f4f4f4;">0.00</div>
<div class="t" style="left:1511.5px;top:1128.9px;font-size:20.20px;color:#f4f4f4;transform:scaleX(1.2100);-webkit-text-stroke:0.25px #f4f4f4;">56.08</div>
<div class="t" style="left:1625.6px;top:1128.9px;font-size:20.20px;color:#f4f4f4;transform:scaleX(1.2100);-webkit-text-stroke:0.25px #f4f4f4;">200.56</div>
<div class="t" style="left:1741.4px;top:1128.9px;font-size:20.20px;color:#f4f4f4;transform:scaleX(1.2100);-webkit-text-stroke:0.25px #f4f4f4;">104.95</div>
<div class="t" style="left:1844.6px;top:1128.9px;font-size:20.20px;color:#f4f4f4;transform:scaleX(1.2100);-webkit-text-stroke:0.25px #f4f4f4;">73.76</div>
<div class="t" style="left:1933.7px;top:1128.9px;font-size:20.20px;color:#f4f4f4;transform:scaleX(1.2100);-webkit-text-stroke:0.25px #f4f4f4;">131.36</div>
<div class="t" style="left:2074.6px;top:1128.9px;font-size:20.20px;color:#f4f4f4;transform:scaleX(1.2100);-webkit-text-stroke:0.25px #f4f4f4;">240.61</div>
<div class="t" style="left:2224.7px;top:1128.9px;font-size:20.20px;color:#f4f4f4;transform:scaleX(1.2100);-webkit-text-stroke:0.25px #f4f4f4;">162.69</div>
<div class="t" style="left:2316.3px;top:1128.9px;font-size:20.20px;color:#f4f4f4;transform:scaleX(1.2100);-webkit-text-stroke:0.25px #f4f4f4;">64.28</div>
<div class="t" style="left:2470.7px;top:1128.9px;font-size:20.20px;color:#f4f4f4;transform:scaleX(1.2100);-webkit-text-stroke:0.25px #f4f4f4;">105.32</div>
<div class="t" style="left:757.0px;top:1160.1px;font-size:20.50px;color:#f4f4f4;font-weight:bold;transform:scaleX(1.2200);">Target x:CIE31</div>
<div class="t" style="left:962.0px;top:1160.4px;font-size:20.20px;color:#f4f4f4;transform:scaleX(1.2100);-webkit-text-stroke:0.25px #f4f4f4;">0.31</div>
<div class="t" style="left:1052.0px;top:1160.4px;font-size:20.20px;color:#f4f4f4;transform:scaleX(1.2100);-webkit-text-stroke:0.25px #f4f4f4;">0.31</div>
<div class="t" style="left:1147.6px;top:1160.4px;font-size:20.20px;color:#f4f4f4;transform:scaleX(1.2100);-webkit-text-stroke:0.25px #f4f4f4;">0.31</div>
<div class="t" style="left:1243.0px;top:1160.4px;font-size:20.20px;color:#f4f4f4;transform:scaleX(1.2100);-webkit-text-stroke:0.25px #f4f4f4;">0.31</div>
<div class="t" style="left:1339.4px;top:1160.4px;font-size:20.20px;color:#f4f4f4;transform:scaleX(1.2100);-webkit-text-stroke:0.25px #f4f4f4;">0.31</div>
<div class="t" style="left:1435.7px;top:1160.4px;font-size:20.20px;color:#f4f4f4;transform:scaleX(1.2100);-webkit-text-stroke:0.25px #f4f4f4;">0.31</div>
<div class="t" style="left:1511.5px;top:1160.4px;font-size:20.20px;color:#f4f4f4;transform:scaleX(1.2100);-webkit-text-stroke:0.25px #f4f4f4;">0.40</div>
<div class="t" style="left:1625.6px;top:1160.4px;font-size:20.20px;color:#000;transform:scaleX(1.2100);-webkit-text-stroke:0.25px #000;">0.38</div>
<div class="t" style="left:1741.4px;top:1160.4px;font-size:20.20px;color:#f4f4f4;transform:scaleX(1.2100);-webkit-text-stroke:0.25px #f4f4f4;">0.25</div>
<div class="t" style="left:1844.6px;top:1160.4px;font-size:20.20px;color:#f4f4f4;transform:scaleX(1.2100);-webkit-text-stroke:0.25px #f4f4f4;">0.34</div>
<div class="t" style="left:1933.7px;top:1160.4px;font-size:20.20px;color:#f4f4f4;transform:scaleX(1.2100);-webkit-text-stroke:0.25px #f4f4f4;">0.27</div>
<div class="t" style="left:2074.6px;top:1160.4px;font-size:20.20px;color:#f4f4f4;transform:scaleX(1.2100);-webkit-text-stroke:0.25px #f4f4f4;">0.26</div>
<div class="t" style="left:2224.7px;top:1160.4px;font-size:20.20px;color:#f4f4f4;transform:scaleX(1.2100);-webkit-text-stroke:0.25px #f4f4f4;">0.51</div>
<div class="t" style="left:2316.3px;top:1160.4px;font-size:20.20px;color:#f4f4f4;transform:scaleX(1.2100);-webkit-text-stroke:0.25px #f4f4f4;">0.22</div>
<div class="t" style="left:2470.7px;top:1160.4px;font-size:20.20px;color:#f4f4f4;transform:scaleX(1.2100);-webkit-text-stroke:0.25px #f4f4f4;">0.46</div>
<div class="t" style="left:757.0px;top:1191.6px;font-size:20.50px;color:#f4f4f4;font-weight:bold;transform:scaleX(1.2200);">Target y:CIE31</div>
<div class="t" style="left:962.0px;top:1191.9px;font-size:20.20px;color:#f4f4f4;transform:scaleX(1.2100);-webkit-text-stroke:0.25px #f4f4f4;">0.33</div>
<div class="t" style="left:1052.0px;top:1191.9px;font-size:20.20px;color:#f4f4f4;transform:scaleX(1.2100);-webkit-text-stroke:0.25px #f4f4f4;">0.33</div>
<div class="t" style="left:1147.6px;top:1191.9px;font-size:20.20px;color:#f4f4f4;transform:scaleX(1.2100);-webkit-text-stroke:0.25px #f4f4f4;">0.33</div>
<div class="t" style="left:1243.0px;top:1191.9px;font-size:20.20px;color:#f4f4f4;transform:scaleX(1.2100);-webkit-text-stroke:0.25px #f4f4f4;">0.33</div>
<div class="t" style="left:1339.4px;top:1191.9px;font-size:20.20px;color:#f4f4f4;transform:scaleX(1.2100);-webkit-text-stroke:0.25px #f4f4f4;">0.33</div>
<div class="t" style="left:1435.7px;top:1191.9px;font-size:20.20px;color:#f4f4f4;transform:scaleX(1.2100);-webkit-text-stroke:0.25px #f4f4f4;">0.33</div>
<div class="t" style="left:1511.5px;top:1191.9px;font-size:20.20px;color:#f4f4f4;transform:scaleX(1.2100);-webkit-text-stroke:0.25px #f4f4f4;">0.36</div>
<div class="t" style="left:1625.6px;top:1191.9px;font-size:20.20px;color:#f4f4f4;transform:scaleX(1.2100);-webkit-text-stroke:0.25px #f4f4f4;">0.36</div>
<div class="t" style="left:1741.4px;top:1191.9px;font-size:20.20px;color:#f4f4f4;transform:scaleX(1.2100);-webkit-text-stroke:0.25px #f4f4f4;">0.27</div>
<div class="t" style="left:1844.6px;top:1191.9px;font-size:20.20px;color:#f4f4f4;transform:scaleX(1.2100);-webkit-text-stroke:0.25px #f4f4f4;">0.43</div>
<div class="t" style="left:1933.7px;top:1191.9px;font-size:20.20px;color:#f4f4f4;transform:scaleX(1.2100);-webkit-text-stroke:0.25px #f4f4f4;">0.25</div>
<div class="t" style="left:2074.6px;top:1191.9px;font-size:20.20px;color:#f4f4f4;transform:scaleX(1.2100);-webkit-text-stroke:0.25px #f4f4f4;">0.36</div>
<div class="t" style="left:2224.7px;top:1191.9px;font-size:20.20px;color:#f4f4f4;transform:scaleX(1.2100);-webkit-text-stroke:0.25px #f4f4f4;">0.41</div>
<div class="t" style="left:2316.3px;top:1191.9px;font-size:20.20px;color:#f4f4f4;transform:scaleX(1.2100);-webkit-text-stroke:0.25px #f4f4f4;">0.19</div>
<div class="t" style="left:2470.7px;top:1191.9px;font-size:20.20px;color:#f4f4f4;transform:scaleX(1.2100);-webkit-text-stroke:0.25px #f4f4f4;">0.31</div>
<div class="t" style="left:757.0px;top:1223.1px;font-size:20.50px;color:#f4f4f4;font-weight:bold;transform:scaleX(1.2200);">Target Y</div>
<div class="t" style="left:962.0px;top:1223.4px;font-size:20.20px;color:#f4f4f4;transform:scaleX(1.2100);-webkit-text-stroke:0.25px #f4f4f4;">574.92</div>
<div class="t" style="left:1052.0px;top:1223.4px;font-size:20.20px;color:#f4f4f4;transform:scaleX(1.2100);-webkit-text-stroke:0.25px #f4f4f4;">454.93</div>
<div class="t" style="left:1147.6px;top:1223.4px;font-size:20.20px;color:#f4f4f4;transform:scaleX(1.2100);-webkit-text-stroke:0.25px #f4f4f4;">366.57</div>
<div class="t" style="left:1243.0px;top:1223.4px;font-size:20.20px;color:#f4f4f4;transform:scaleX(1.2100);-webkit-text-stroke:0.25px #f4f4f4;">282.30</div>
<div class="t" style="left:1339.4px;top:1223.4px;font-size:20.20px;color:#f4f4f4;transform:scaleX(1.2100);-webkit-text-stroke:0.25px #f4f4f4;">196.57</div>
<div class="t" style="left:1435.7px;top:1223.4px;font-size:20.20px;color:#f4f4f4;transform:scaleX(1.2100);-webkit-text-stroke:0.25px #f4f4f4;">0.00</div>
<div class="t" style="left:1511.5px;top:1223.4px;font-size:20.20px;color:#f4f4f4;transform:scaleX(1.2100);-webkit-text-stroke:0.25px #f4f4f4;">57.91</div>
<div class="t" style="left:1625.6px;top:1223.4px;font-size:20.20px;color:#f4f4f4;transform:scaleX(1.2100);-webkit-text-stroke:0.25px #f4f4f4;">200.62</div>
<div class="t" style="left:1741.4px;top:1223.4px;font-size:20.20px;color:#f4f4f4;transform:scaleX(1.2100);-webkit-text-stroke:0.25px #f4f4f4;">107.50</div>
<div class="t" style="left:1844.6px;top:1223.4px;font-size:20.20px;color:#f4f4f4;transform:scaleX(1.2100);-webkit-text-stroke:0.25px #f4f4f4;">74.93</div>
<div class="t" style="left:1933.7px;top:1223.4px;font-size:20.20px;color:#f4f4f4;transform:scaleX(1.2100);-webkit-text-stroke:0.25px #f4f4f4;">134.06</div>
<div class="t" style="left:2074.6px;top:1223.4px;font-size:20.20px;color:#f4f4f4;transform:scaleX(1.2100);-webkit-text-stroke:0.25px #f4f4f4;">240.74</div>
<div class="t" style="left:2224.7px;top:1223.4px;font-size:20.20px;color:#f4f4f4;transform:scaleX(1.2100);-webkit-text-stroke:0.25px #f4f4f4;">162.98</div>
<div class="t" style="left:2316.3px;top:1223.4px;font-size:20.20px;color:#f4f4f4;transform:scaleX(1.2100);-webkit-text-stroke:0.25px #f4f4f4;">67.58</div>
<div class="t" style="left:2470.7px;top:1223.4px;font-size:20.20px;color:#f4f4f4;transform:scaleX(1.2100);-webkit-text-stroke:0.25px #f4f4f4;">107.37</div>
<div class="t" style="left:757.0px;top:1254.6px;font-size:20.50px;color:#f4f4f4;font-weight:bold;transform:scaleX(1.2200);">ΔE 2000</div>
<div class="t" style="left:962.0px;top:1254.9px;font-size:20.20px;color:#f4f4f4;transform:scaleX(1.2100);-webkit-text-stroke:0.25px #f4f4f4;">0.88</div>
<div class="t" style="left:1052.0px;top:1254.9px;font-size:20.20px;color:#f4f4f4;transform:scaleX(1.2100);-webkit-text-stroke:0.25px #f4f4f4;">1.80</div>
<div class="t" style="left:1147.6px;top:1254.9px;font-size:20.20px;color:#f4f4f4;transform:scaleX(1.2100);-webkit-text-stroke:0.25px #f4f4f4;">2.14</div>
<div class="t" style="left:1243.0px;top:1254.9px;font-size:20.20px;color:#f4f4f4;transform:scaleX(1.2100);-webkit-text-stroke:0.25px #f4f4f4;">2.25</div>
<div class="t" style="left:1339.4px;top:1254.9px;font-size:20.20px;color:#f4f4f4;transform:scaleX(1.2100);-webkit-text-stroke:0.25px #f4f4f4;">2.12</div>
<div class="t" style="left:1435.7px;top:1254.9px;font-size:20.20px;color:#f4f4f4;transform:scaleX(1.2100);-webkit-text-stroke:0.25px #f4f4f4;">0.15</div>
<div class="t" style="left:1511.5px;top:1254.9px;font-size:20.20px;color:#f4f4f4;transform:scaleX(1.2100);-webkit-text-stroke:0.25px #f4f4f4;">0.82</div>
<div class="t" style="left:1625.6px;top:1254.9px;font-size:20.20px;color:#f4f4f4;transform:scaleX(1.2100);-webkit-text-stroke:0.25px #f4f4f4;">0.77</div>
<div class="t" style="left:1741.4px;top:1254.9px;font-size:20.20px;color:#f4f4f4;transform:scaleX(1.2100);-webkit-text-stroke:0.25px #f4f4f4;">1.15</div>
<div class="t" style="left:1844.6px;top:1254.9px;font-size:20.20px;color:#f4f4f4;transform:scaleX(1.2100);-webkit-text-stroke:0.25px #f4f4f4;">0.68</div>
<div class="t" style="left:1933.7px;top:1254.9px;font-size:20.20px;color:#f4f4f4;transform:scaleX(1.2100);-webkit-text-stroke:0.25px #f4f4f4;">1.53</div>
<div class="t" style="left:2074.6px;top:1254.9px;font-size:20.20px;color:#f4f4f4;transform:scaleX(1.2100);-webkit-text-stroke:0.25px #f4f4f4;">1.50</div>
<div class="t" style="left:2224.7px;top:1254.9px;font-size:20.20px;color:#f4f4f4;transform:scaleX(1.2100);-webkit-text-stroke:0.25px #f4f4f4;">0.97</div>
<div class="t" style="left:2316.3px;top:1254.9px;font-size:20.20px;color:#f4f4f4;transform:scaleX(1.2100);-webkit-text-stroke:0.25px #f4f4f4;">1.41</div>
<div class="t" style="left:2470.7px;top:1254.9px;font-size:20.20px;color:#f4f4f4;transform:scaleX(1.2100);-webkit-text-stroke:0.25px #f4f4f4;">0.70</div>
<div class="t" style="left:757.0px;top:1286.1px;font-size:20.50px;color:#f4f4f4;font-weight:bold;transform:scaleX(1.2200);">ΔE ITP</div>
<div class="t" style="left:962.0px;top:1286.4px;font-size:20.20px;color:#f4f4f4;transform:scaleX(1.2100);-webkit-text-stroke:0.25px #f4f4f4;">1.01</div>
<div class="t" style="left:1052.0px;top:1286.4px;font-size:20.20px;color:#f4f4f4;transform:scaleX(1.2100);-webkit-text-stroke:0.25px #f4f4f4;">2.28</div>
<div class="t" style="left:1147.6px;top:1286.4px;font-size:20.20px;color:#f4f4f4;transform:scaleX(1.2100);-webkit-text-stroke:0.25px #f4f4f4;">2.93</div>
<div class="t" style="left:1243.0px;top:1286.4px;font-size:20.20px;color:#f4f4f4;transform:scaleX(1.2100);-webkit-text-stroke:0.25px #f4f4f4;">3.33</div>
<div class="t" style="left:1339.4px;top:1286.4px;font-size:20.20px;color:#f4f4f4;transform:scaleX(1.2100);-webkit-text-stroke:0.25px #f4f4f4;">3.35</div>
<div class="t" style="left:1435.7px;top:1286.4px;font-size:20.20px;color:#f4f4f4;transform:scaleX(1.2100);-webkit-text-stroke:0.25px #f4f4f4;">31.97</div>
<div class="t" style="left:1511.5px;top:1286.4px;font-size:20.20px;color:#f4f4f4;transform:scaleX(1.2100);-webkit-text-stroke:0.25px #f4f4f4;">3.19</div>
<div class="t" style="left:1625.6px;top:1286.4px;font-size:20.20px;color:#f4f4f4;transform:scaleX(1.2100);-webkit-text-stroke:0.25px #f4f4f4;">2.61</div>
<div class="t" style="left:1741.4px;top:1286.4px;font-size:20.20px;color:#f4f4f4;transform:scaleX(1.2100);-webkit-text-stroke:0.25px #f4f4f4;">2.67</div>
<div class="t" style="left:1844.6px;top:1286.4px;font-size:20.20px;color:#f4f4f4;transform:scaleX(1.2100);-webkit-text-stroke:0.25px #f4f4f4;">2.65</div>
<div class="t" style="left:1933.7px;top:1286.4px;font-size:20.20px;color:#f4f4f4;transform:scaleX(1.2100);-webkit-text-stroke:0.25px #f4f4f4;">3.87</div>
<div class="t" style="left:2074.6px;top:1286.4px;font-size:20.20px;color:#f4f4f4;transform:scaleX(1.2100);-webkit-text-stroke:0.25px #f4f4f4;">3.81</div>
<div class="t" style="left:2224.7px;top:1286.4px;font-size:20.20px;color:#f4f4f4;transform:scaleX(1.2100);-webkit-text-stroke:0.25px #f4f4f4;">4.09</div>
<div class="t" style="left:2316.3px;top:1286.4px;font-size:20.20px;color:#f4f4f4;transform:scaleX(1.2100);-webkit-text-stroke:0.25px #f4f4f4;">4.46</div>
<div class="t" style="left:2470.7px;top:1286.4px;font-size:20.20px;color:#f4f4f4;transform:scaleX(1.2100);-webkit-text-stroke:0.25px #f4f4f4;">3.80</div>
<div style="position:absolute;left:736.0px;top:1311.0px;width:1821.0px;height:19.0px;background:#5e5e5e"></div>
<div style="position:absolute;left:739.0px;top:1313.0px;width:17.0px;height:15.0px;background:#828282;border-radius:4px;box-shadow:inset 0 0 0 1px #6c6c6c"></div>
<svg style="position:absolute;left:739px;top:1313px" width="17" height="15"><path d="M5,7.5 L11,2.5 L11,12.5Z" fill="#464646"/></svg>
<div style="position:absolute;left:763.0px;top:1313.0px;width:872.0px;height:15.0px;background:#444;border-radius:8px"></div>
<div style="position:absolute;left:2532.0px;top:1313.0px;width:22.0px;height:15.0px;background:#828282;border-radius:4px;box-shadow:inset 0 0 0 1px #6c6c6c"></div>
<svg style="position:absolute;left:2532px;top:1313px" width="22" height="15"><path d="M15,7.5 L9,2.5 L9,12.5Z" fill="#464646"/></svg>
<div style="position:absolute;left:300.0px;top:1435.0px;width:1776.0px;height:75.0px;background:#393939"></div>
<div style="position:absolute;left:300.0px;top:1508.0px;width:1776.0px;height:2.0px;background:#2a2a2a"></div>
<div style="position:absolute;left:300px;top:1435px;width:1774px;height:75px;overflow:hidden">
<div style="position:absolute;left:-17.0px;top:0.0px;width:74.0px;height:73.0px;background:linear-gradient(#a6a6a6,#8e8e8e 40%,#6e6e6e);border-radius:6px"></div>
<div style="position:absolute;left:-9.0px;top:7.5px;width:58.0px;height:36.0px;background:#c29682;border-radius:6px;box-shadow:inset 2px 2px 2px rgba(0,0,0,0.45),0 1px 0 rgba(255,255,255,0.25)"></div>
<div class="t" style="left:-16.3px;top:53.0px;font-size:16.50px;color:#333;font-weight:bold;transform:scaleX(0.9100);">Light Skin</div>
<div style="position:absolute;left:61.0px;top:0.0px;width:74.0px;height:73.0px;background:linear-gradient(#a6a6a6,#8e8e8e 40%,#6e6e6e);border-radius:6px"></div>
<div style="position:absolute;left:69.0px;top:7.5px;width:58.0px;height:36.0px;background:#5f7a9c;border-radius:6px;box-shadow:inset 2px 2px 2px rgba(0,0,0,0.45),0 1px 0 rgba(255,255,255,0.25)"></div>
<div class="t" style="left:66.3px;top:53.0px;font-size:16.50px;color:#333;font-weight:bold;transform:scaleX(0.9100);">Blue Sky</div>
<div style="position:absolute;left:139.0px;top:0.0px;width:74.0px;height:73.0px;background:linear-gradient(#a6a6a6,#8e8e8e 40%,#6e6e6e);border-radius:6px"></div>
<div style="position:absolute;left:147.0px;top:7.5px;width:58.0px;height:36.0px;background:#576c43;border-radius:6px;box-shadow:inset 2px 2px 2px rgba(0,0,0,0.45),0 1px 0 rgba(255,255,255,0.25)"></div>
<div class="t" style="left:149.7px;top:53.0px;font-size:16.50px;color:#333;font-weight:bold;transform:scaleX(0.9100);">Foliage</div>
<div style="position:absolute;left:217.0px;top:0.0px;width:74.0px;height:73.0px;background:linear-gradient(#a6a6a6,#8e8e8e 40%,#6e6e6e);border-radius:6px"></div>
<div style="position:absolute;left:225.0px;top:7.5px;width:58.0px;height:18.0px;background:#8580b1;border-radius:6px;box-shadow:inset 2px 2px 2px rgba(0,0,0,0.45),0 1px 0 rgba(255,255,255,0.25)"></div>
<div class="t" style="left:231.1px;top:35.3px;font-size:16.50px;color:#333;font-weight:bold;transform:scaleX(0.9100);">Blue</div>
<div class="t" style="left:231.1px;top:53.0px;font-size:16.50px;color:#333;font-weight:bold;transform:scaleX(0.9100);">Flower</div>
<div style="position:absolute;left:295.0px;top:0.0px;width:74.0px;height:73.0px;background:linear-gradient(#a6a6a6,#8e8e8e 40%,#6e6e6e);border-radius:6px"></div>
<div style="position:absolute;left:303.0px;top:7.5px;width:58.0px;height:18.0px;background:#67bdaa;border-radius:6px;box-shadow:inset 2px 2px 2px rgba(0,0,0,0.45),0 1px 0 rgba(255,255,255,0.25)"></div>
<div class="t" style="left:310.3px;top:35.3px;font-size:16.50px;color:#333;font-weight:bold;transform:scaleX(0.9100);">Bluish</div>
<div class="t" style="left:310.3px;top:53.0px;font-size:16.50px;color:#333;font-weight:bold;transform:scaleX(0.9100);">Green</div>
<div style="position:absolute;left:373.0px;top:0.0px;width:74.0px;height:73.0px;background:linear-gradient(#a6a6a6,#8e8e8e 40%,#6e6e6e);border-radius:6px"></div>
<div style="position:absolute;left:381.0px;top:7.5px;width:58.0px;height:36.0px;background:#d67e2c;border-radius:6px;box-shadow:inset 2px 2px 2px rgba(0,0,0,0.45),0 1px 0 rgba(255,255,255,0.25)"></div>
<div class="t" style="left:383.7px;top:53.0px;font-size:16.50px;color:#333;font-weight:bold;transform:scaleX(0.9100);">Orange</div>
<div style="position:absolute;left:451.0px;top:0.0px;width:74.0px;height:73.0px;background:linear-gradient(#a6a6a6,#8e8e8e 40%,#6e6e6e);border-radius:6px"></div>
<div style="position:absolute;left:459.0px;top:7.5px;width:58.0px;height:18.0px;background:#505ba6;border-radius:6px;box-shadow:inset 2px 2px 2px rgba(0,0,0,0.45),0 1px 0 rgba(255,255,255,0.25)"></div>
<div class="t" style="left:459.6px;top:35.3px;font-size:16.50px;color:#333;font-weight:bold;transform:scaleX(0.9100);">Purplish</div>
<div class="t" style="left:459.6px;top:53.0px;font-size:16.50px;color:#333;font-weight:bold;transform:scaleX(0.9100);">Blue</div>
<div style="position:absolute;left:529.0px;top:0.0px;width:74.0px;height:73.0px;background:linear-gradient(#a6a6a6,#8e8e8e 40%,#6e6e6e);border-radius:6px"></div>
<div style="position:absolute;left:537.0px;top:7.5px;width:58.0px;height:18.0px;background:#c15a63;border-radius:6px;box-shadow:inset 2px 2px 2px rgba(0,0,0,0.45),0 1px 0 rgba(255,255,255,0.25)"></div>
<div class="t" style="left:534.5px;top:35.3px;font-size:16.50px;color:#333;font-weight:bold;transform:scaleX(0.9100);">Moderate</div>
<div class="t" style="left:534.5px;top:53.0px;font-size:16.50px;color:#333;font-weight:bold;transform:scaleX(0.9100);">Red</div>
<div style="position:absolute;left:607.0px;top:0.0px;width:74.0px;height:73.0px;background:linear-gradient(#a6a6a6,#8e8e8e 40%,#6e6e6e);border-radius:6px"></div>
<div style="position:absolute;left:615.0px;top:7.5px;width:58.0px;height:36.0px;background:#5e3c6c;border-radius:6px;box-shadow:inset 2px 2px 2px rgba(0,0,0,0.45),0 1px 0 rgba(255,255,255,0.25)"></div>
<div class="t" style="left:620.6px;top:53.0px;font-size:16.50px;color:#333;font-weight:bold;transform:scaleX(0.9100);">Purple</div>
<div style="position:absolute;left:685.0px;top:0.0px;width:74.0px;height:73.0px;background:linear-gradient(#a6a6a6,#8e8e8e 40%,#6e6e6e);border-radius:6px"></div>
<div style="position:absolute;left:693.0px;top:7.5px;width:58.0px;height:18.0px;background:#9dbc40;border-radius:6px;box-shadow:inset 2px 2px 2px rgba(0,0,0,0.45),0 1px 0 rgba(255,255,255,0.25)"></div>
<div class="t" style="left:698.6px;top:35.3px;font-size:16.50px;color:#333;font-weight:bold;transform:scaleX(0.9100);">Yellow</div>
<div class="t" style="left:700.3px;top:53.0px;font-size:16.50px;color:#333;font-weight:bold;transform:scaleX(0.9100);">Green</div>
<div style="position:absolute;left:763.0px;top:0.0px;width:74.0px;height:73.0px;background:linear-gradient(#a6a6a6,#8e8e8e 40%,#6e6e6e);border-radius:6px"></div>
<div style="position:absolute;left:771.0px;top:7.5px;width:58.0px;height:18.0px;background:#e0a32e;border-radius:6px;box-shadow:inset 2px 2px 2px rgba(0,0,0,0.45),0 1px 0 rgba(255,255,255,0.25)"></div>
<div class="t" style="left:775.2px;top:35.3px;font-size:16.50px;color:#333;font-weight:bold;transform:scaleX(0.9100);">Orange</div>
<div class="t" style="left:775.2px;top:53.0px;font-size:16.50px;color:#333;font-weight:bold;transform:scaleX(0.9100);">Yellow</div>
<div style="position:absolute;left:841.0px;top:0.0px;width:74.0px;height:73.0px;background:linear-gradient(#a6a6a6,#8e8e8e 40%,#6e6e6e);border-radius:6px"></div>
<div style="position:absolute;left:849.0px;top:7.5px;width:58.0px;height:36.0px;background:#383d96;border-radius:6px;box-shadow:inset 2px 2px 2px rgba(0,0,0,0.45),0 1px 0 rgba(255,255,255,0.25)"></div>
<div class="t" style="left:861.7px;top:53.0px;font-size:16.50px;color:#333;font-weight:bold;transform:scaleX(0.9100);">Blue</div>
<div style="position:absolute;left:919.0px;top:0.0px;width:74.0px;height:73.0px;background:linear-gradient(#a6a6a6,#8e8e8e 40%,#6e6e6e);border-radius:6px"></div>
<div style="position:absolute;left:927.0px;top:7.5px;width:58.0px;height:36.0px;background:#469449;border-radius:6px;box-shadow:inset 2px 2px 2px rgba(0,0,0,0.45),0 1px 0 rgba(255,255,255,0.25)"></div>
<div class="t" style="left:934.3px;top:53.0px;font-size:16.50px;color:#333;font-weight:bold;transform:scaleX(0.9100);">Green</div>
<div style="position:absolute;left:997.0px;top:0.0px;width:74.0px;height:73.0px;background:linear-gradient(#a6a6a6,#8e8e8e 40%,#6e6e6e);border-radius:6px"></div>
<div style="position:absolute;left:1005.0px;top:7.5px;width:58.0px;height:36.0px;background:#af363c;border-radius:6px;box-shadow:inset 2px 2px 2px rgba(0,0,0,0.45),0 1px 0 rgba(255,255,255,0.25)"></div>
<div class="t" style="left:1019.8px;top:53.0px;font-size:16.50px;color:#333;font-weight:bold;transform:scaleX(0.9100);">Red</div>
<div style="position:absolute;left:1075.0px;top:0.0px;width:74.0px;height:73.0px;background:linear-gradient(#a6a6a6,#8e8e8e 40%,#6e6e6e);border-radius:6px"></div>
<div style="position:absolute;left:1083.0px;top:7.5px;width:58.0px;height:36.0px;background:#e7c71f;border-radius:6px;box-shadow:inset 2px 2px 2px rgba(0,0,0,0.45),0 1px 0 rgba(255,255,255,0.25)"></div>
<div class="t" style="left:1088.6px;top:53.0px;font-size:16.50px;color:#333;font-weight:bold;transform:scaleX(0.9100);">Yellow</div>
<div style="position:absolute;left:1153.0px;top:0.0px;width:74.0px;height:73.0px;background:linear-gradient(#a6a6a6,#8e8e8e 40%,#6e6e6e);border-radius:6px"></div>
<div style="position:absolute;left:1161.0px;top:7.5px;width:58.0px;height:36.0px;background:#bb5695;border-radius:6px;box-shadow:inset 2px 2px 2px rgba(0,0,0,0.45),0 1px 0 rgba(255,255,255,0.25)"></div>
<div class="t" style="left:1159.5px;top:53.0px;font-size:16.50px;color:#333;font-weight:bold;transform:scaleX(0.9100);">Magenta</div>
<div style="position:absolute;left:1231.0px;top:0.0px;width:74.0px;height:73.0px;background:linear-gradient(#a6a6a6,#8e8e8e 40%,#6e6e6e);border-radius:6px"></div>
<div style="position:absolute;left:1239.0px;top:7.5px;width:58.0px;height:36.0px;background:#0885a1;border-radius:6px;box-shadow:inset 2px 2px 2px rgba(0,0,0,0.45),0 1px 0 rgba(255,255,255,0.25)"></div>
<div class="t" style="left:1249.6px;top:53.0px;font-size:16.50px;color:#333;font-weight:bold;transform:scaleX(0.9100);">Cyan</div>
<div style="position:absolute;left:1309.0px;top:0.0px;width:74.0px;height:73.0px;background:linear-gradient(#a6a6a6,#8e8e8e 40%,#6e6e6e);border-radius:6px"></div>
<div style="position:absolute;left:1317.0px;top:7.5px;width:58.0px;height:36.0px;background:#ff0000;border-radius:6px;box-shadow:inset 2px 2px 2px rgba(0,0,0,0.45),0 1px 0 rgba(255,255,255,0.25)"></div>
<div class="t" style="left:1310.5px;top:53.0px;font-size:16.50px;color:#333;font-weight:bold;transform:scaleX(0.9100);">100% Red</div>
<div style="position:absolute;left:1387.0px;top:0.0px;width:74.0px;height:73.0px;background:linear-gradient(#a6a6a6,#8e8e8e 40%,#6e6e6e);border-radius:6px"></div>
<div style="position:absolute;left:1395.0px;top:7.5px;width:58.0px;height:18.0px;background:#00ff00;border-radius:6px;box-shadow:inset 2px 2px 2px rgba(0,0,0,0.45),0 1px 0 rgba(255,255,255,0.25)"></div>
<div class="t" style="left:1403.5px;top:35.3px;font-size:16.50px;color:#333;font-weight:bold;transform:scaleX(0.9100);">100%</div>
<div class="t" style="left:1403.5px;top:53.0px;font-size:16.50px;color:#333;font-weight:bold;transform:scaleX(0.9100);">Green</div>
<div style="position:absolute;left:1465.0px;top:0.0px;width:74.0px;height:73.0px;background:linear-gradient(#a6a6a6,#8e8e8e 40%,#6e6e6e);border-radius:6px"></div>
<div style="position:absolute;left:1473.0px;top:7.5px;width:58.0px;height:18.0px;background:#0000ff;border-radius:6px;box-shadow:inset 2px 2px 2px rgba(0,0,0,0.45),0 1px 0 rgba(255,255,255,0.25)"></div>
<div class="t" style="left:1483.9px;top:35.3px;font-size:16.50px;color:#333;font-weight:bold;transform:scaleX(0.9100);">100%</div>
<div class="t" style="left:1483.9px;top:53.0px;font-size:16.50px;color:#333;font-weight:bold;transform:scaleX(0.9100);">Blue</div>
<div style="position:absolute;left:1543.0px;top:0.0px;width:74.0px;height:73.0px;background:linear-gradient(#a6a6a6,#8e8e8e 40%,#6e6e6e);border-radius:6px"></div>
<div style="position:absolute;left:1551.0px;top:7.5px;width:58.0px;height:18.0px;background:#00ffff;border-radius:6px;box-shadow:inset 2px 2px 2px rgba(0,0,0,0.45),0 1px 0 rgba(255,255,255,0.25)"></div>
<div class="t" style="left:1561.9px;top:35.3px;font-size:16.50px;color:#333;font-weight:bold;transform:scaleX(0.9100);">100%</div>
<div class="t" style="left:1561.9px;top:53.0px;font-size:16.50px;color:#333;font-weight:bold;transform:scaleX(0.9100);">Cyan</div>
<div style="position:absolute;left:1621.0px;top:0.0px;width:74.0px;height:73.0px;background:linear-gradient(#a6a6a6,#8e8e8e 40%,#6e6e6e);border-radius:6px"></div>
<div style="position:absolute;left:1629.0px;top:7.5px;width:58.0px;height:18.0px;background:#ff00ff;border-radius:6px;box-shadow:inset 2px 2px 2px rgba(0,0,0,0.45),0 1px 0 rgba(255,255,255,0.25)"></div>
<div class="t" style="left:1629.2px;top:35.3px;font-size:16.50px;color:#333;font-weight:bold;transform:scaleX(0.9100);">100%</div>
<div class="t" style="left:1629.2px;top:53.0px;font-size:16.50px;color:#333;font-weight:bold;transform:scaleX(0.9100);">Magenta</div>
<div style="position:absolute;left:1699.0px;top:0.0px;width:74.0px;height:73.0px;background:linear-gradient(#1a1a1a,#343434);border-radius:6px"></div>
<div style="position:absolute;left:1707.0px;top:7.5px;width:58.0px;height:18.0px;background:#ffff00;border-radius:6px;box-shadow:inset 2px 2px 2px rgba(0,0,0,0.45),0 1px 0 rgba(255,255,255,0.25)"></div>
<div class="t" style="left:1713.9px;top:35.3px;font-size:16.50px;color:#fff;font-weight:bold;transform:scaleX(0.9100);">100%</div>
<div class="t" style="left:1713.9px;top:53.0px;font-size:16.50px;color:#fff;font-weight:bold;transform:scaleX(0.9100);">Yellow</div>
</div>
<div style="position:absolute;left:300.0px;top:1510.0px;width:1774.0px;height:18.0px;background:#5e5e5e"></div>
<div style="position:absolute;left:302.0px;top:1512.0px;width:17.0px;height:15.0px;background:#828282;border-radius:4px;box-shadow:inset 0 0 0 1px #6c6c6c"></div>
<svg style="position:absolute;left:302px;top:1512px" width="17" height="15"><path d="M5,7.5 L11,2.5 L11,12.5Z" fill="#464646"/></svg>
<div style="position:absolute;left:739.0px;top:1512.0px;width:1305.0px;height:15.0px;background:#444;border-radius:8px"></div>
<div style="position:absolute;left:2055.0px;top:1512.0px;width:17.0px;height:15.0px;background:#828282;border-radius:4px;box-shadow:inset 0 0 0 1px #6c6c6c"></div>
<svg style="position:absolute;left:2055px;top:1512px" width="17" height="15"><path d="M12,7.5 L6,2.5 L6,12.5Z" fill="#464646"/></svg>
<div style="position:absolute;left:2553.0px;top:132.0px;width:7.0px;height:1303.0px;background:linear-gradient(90deg,rgba(10,10,10,0),#0c0c0c)"></div>
<div style="position:absolute;left:2076.0px;top:1435.0px;width:72.0px;height:91.0px;background:linear-gradient(#a8a8a8,#6a6a6a);border-radius:6px"></div>
<div style="position:absolute;left:2076.0px;top:1462.0px;width:72.0px;height:2.0px;background:#555"></div>
<div style="position:absolute;left:2100.0px;top:1438.0px;width:24.0px;height:24.0px;border-radius:50%;background:linear-gradient(#888,#a0a0a0)"></div>
<svg style="position:absolute;left:2100px;top:1438px" width="24" height="24"><path d="M5,15 L19,15 L12,8Z" fill="#333"/></svg>
<div style="position:absolute;left:2089.0px;top:1472.0px;width:46.0px;height:46.0px;border-radius:6px;background:#a0a0a0;box-shadow:inset 0 0 0 3px #222"></div>
<div style="position:absolute;left:2101.0px;top:1485.0px;width:21.0px;height:21.0px;background:#080808"></div>
<div style="position:absolute;left:2149.0px;top:1435.0px;width:411.0px;height:91.0px;background:linear-gradient(#a8a8a8,#8a8a8a 50%,#6a6a6a);border-radius:6px 0 0 6px"></div>
<div style="position:absolute;left:2218.0px;top:1435.0px;width:1.5px;height:45.0px;background:#555"></div>
<div style="position:absolute;left:2286.0px;top:1435.0px;width:1.5px;height:45.0px;background:#555"></div>
<div style="position:absolute;left:2353.5px;top:1435.0px;width:1.5px;height:45.0px;background:#555"></div>
<div style="position:absolute;left:2421.0px;top:1435.0px;width:1.5px;height:45.0px;background:#555"></div>
<div style="position:absolute;left:2421.0px;top:1435.0px;width:67.0px;height:45.0px;background:#3c3c3c"></div>
<div style="position:absolute;left:2488.0px;top:1435.0px;width:1.5px;height:45.0px;background:#555"></div>
<div style="position:absolute;left:2149.0px;top:1479.0px;width:411.0px;height:2.0px;background:#5a5a5a"></div>
<div style="position:absolute;left:2353.0px;top:1481.0px;width:1.5px;height:45.0px;background:#555"></div>
<div style="position:absolute;left:2170.0px;top:1442.0px;width:28.0px;height:28.0px;border-radius:50%;background:linear-gradient(#727272,#a2a2a2);filter:blur(0.6px)"></div>
<div style="position:absolute;left:2238.0px;top:1442.0px;width:28.0px;height:28.0px;border-radius:50%;background:linear-gradient(#727272,#a2a2a2);filter:blur(0.6px)"></div>
<div style="position:absolute;left:2306.0px;top:1442.0px;width:28.0px;height:28.0px;border-radius:50%;background:linear-gradient(#727272,#a2a2a2);filter:blur(0.6px)"></div>
<div style="position:absolute;left:2373.0px;top:1442.0px;width:28.0px;height:28.0px;border-radius:50%;background:linear-gradient(#727272,#a2a2a2);filter:blur(0.6px)"></div>
<div style="position:absolute;left:2441.0px;top:1442.0px;width:28.0px;height:28.0px;border-radius:50%;background:linear-gradient(#262626,#3e3e3e);filter:blur(0.6px)"></div>
<div style="position:absolute;left:2509.0px;top:1442.0px;width:28.0px;height:28.0px;border-radius:50%;background:linear-gradient(#727272,#a2a2a2);filter:blur(0.6px)"></div>
<svg style="position:absolute;left:2149px;top:1435px" width="411" height="45">
<rect x="31" y="17" width="9" height="9" fill="#222"/>
<path d="M96,9 L113,19 L96,27Z" fill="#2a2a2a"/>
<path d="M167,11 h-3 v17 h3 M180,11 h3 v17 h-3" fill="none" stroke="#2a2a2a" stroke-width="2.2"/>
<path d="M169,26 h2 M173,26 h2 M177,26 h2" stroke="#2a2a2a" stroke-width="1.6"/>
<path d="M238,21 c-3,-5 -9,-5 -9,0 c0,5 6,5 9,0 c3,-5 9,-5 9,0 c0,5 -6,5 -9,0Z" fill="none" stroke="#2e2e2e" stroke-width="2"/>
<path d="M311,13 a8,8 0 1 0 6,4" fill="none" stroke="#181818" stroke-width="3"/>
</svg>
<div style="position:absolute;left:2176.0px;top:1487.0px;width:28.0px;height:28.0px;border-radius:50%;background:linear-gradient(#888,#a5a5a5)"></div>
<div style="position:absolute;left:2502.0px;top:1487.0px;width:28.0px;height:28.0px;border-radius:50%;background:linear-gradient(#888,#a5a5a5)"></div>
<div class="t" style="left:2233.0px;top:1487.7px;font-size:33.40px;color:#2e2e2e;transform:scaleX(1.0639);">Back</div>
<div class="t" style="left:2393.0px;top:1487.5px;font-size:33.40px;color:#2e2e2e;transform:scaleX(1.1576);">Next</div>
<svg style="position:absolute;left:2502px;top:1487px" width="28" height="28"><path d="M9,8 L14,14 L9,20 M14,8 L19,14 L14,20" fill="none" stroke="#333" stroke-width="2.2"/></svg>
<svg style="position:absolute;left:2160px;top:1435px" width="400" height="93">
<g stroke-linejoin="round" stroke-linecap="round" fill="none">
<path d="M16.1,12.1 L66.5,21.7 L67.3,50.9 L27.5,54.8" stroke="#fff" stroke-opacity="0.8" stroke-width="5.5"/>
<path d="M16.1,12.1 L18.3,60.5 L48.3,76.3 L102.3,59.1 L71.9,52.9" stroke="#fff" stroke-opacity="0.8" stroke-width="5.5"/>
<path d="M16.1,12.1 L66.5,21.7 L67.3,50.9 L27.5,54.8" stroke="#a8343a" stroke-opacity="0.8" stroke-width="3.4"/>
<path d="M16.1,12.1 L18.3,60.5 L48.3,76.3 L102.3,59.1 L71.9,52.9" stroke="#a8343a" stroke-opacity="0.8" stroke-width="3.4"/>
</g>
<path d="M29.2,28.4 Q33,24.5 36.5,24.8 Q39,25.2 41.3,27.2 L46.9,35.2 L70.2,10.3 L72.7,9.5 L62.2,26.4 L45.3,47.7 L42.9,46.5 L33.3,32 Z" fill="#383838" fill-opacity="0.9" stroke="#fff" stroke-opacity="0.8" stroke-width="1.5" stroke-linejoin="round"/>
<g font-family="Liberation Sans" font-size="36" lengthAdjust="spacingAndGlyphs">
<text x="73" y="48.8" font-weight="bold" fill="none" stroke="#fff" stroke-opacity="0.85" stroke-width="3.6" textLength="197">NOTEBOOK</text>
<text x="73" y="48.8" font-weight="bold" fill="#9c3038" fill-opacity="0.72" stroke="#9c3038" stroke-opacity="0.72" stroke-width="1.6" textLength="197">NOTEBOOK</text>
<text x="272" y="48.7" fill="none" stroke="#fff" stroke-opacity="0.85" stroke-width="3.6" textLength="117">CHECK</text>
<text x="272" y="48.7" fill="#262626" fill-opacity="0.7" stroke="#262626" stroke-opacity="0.7" stroke-width="1" textLength="117">CHECK</text>
</g>
</svg>
</body></html>
